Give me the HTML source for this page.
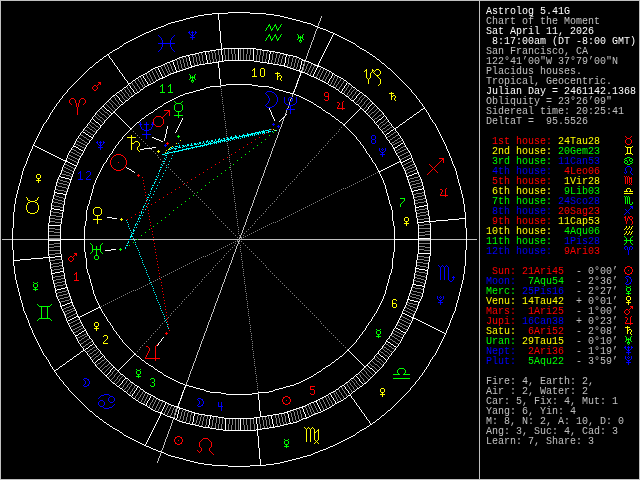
<!DOCTYPE html>
<html><head><meta charset="utf-8"><style>
html,body{margin:0;padding:0;background:#000;width:640px;height:480px;overflow:hidden}
svg{position:absolute;left:0;top:0}
</style></head><body>
<svg width="640" height="480" viewBox="0 0 640 480" shape-rendering="crispEdges">
<rect x="0" y="0" width="640" height="480" fill="#000"/>
<path fill="#c0c0c0" d="M0 0h640v1h-640zM0 479h640v1h-640zM0 0h1v480h-1zM639 0h1v480h-1zM479 0h1v480h-1z"/>
<path fill="#c0c0c0" d="M321 16h1v1h-1zM321 17h1v1h-1zM320 18h1v1h-1zM320 19h1v1h-1zM320 20h1v1h-1zM319 21h1v1h-1zM319 22h1v1h-1zM318 23h1v1h-1zM318 24h1v1h-1zM318 25h1v1h-1zM317 27h1v1h-1zM317 28h1v1h-1zM316 29h1v1h-1zM316 30h1v1h-1zM315 31h1v1h-1zM315 32h1v1h-1zM315 33h1v1h-1zM314 34h1v1h-1zM314 35h1v1h-1zM314 36h1v1h-1zM313 37h1v1h-1zM313 38h1v1h-1zM313 39h1v1h-1zM312 40h1v1h-1zM312 41h1v1h-1zM311 42h1v1h-1zM311 43h1v1h-1zM311 44h1v1h-1zM310 45h1v1h-1zM310 46h1v1h-1zM310 47h1v1h-1zM309 48h1v1h-1zM309 49h1v1h-1zM308 50h1v1h-1zM308 51h1v1h-1zM308 52h1v1h-1zM307 53h1v1h-1zM307 54h1v1h-1zM307 55h1v1h-1zM306 56h1v1h-1zM306 57h1v1h-1zM306 58h1v1h-1zM305 59h1v1h-1zM304 61h1v1h-1zM303 64h1v1h-1zM303 65h1v1h-1zM302 67h1v1h-1zM302 68h1v1h-1zM302 69h1v1h-1zM301 70h1v1h-1zM300 72h1v1h-1zM299 75h1v1h-1zM297 80h1v1h-1zM296 83h1v1h-1zM295 86h1v1h-1zM293 91h1v1h-1zM292 94h1v1h-1zM292 95h1v1h-1zM292 96h1v1h-1zM291 98h1v1h-1zM290 99h1v1h-1zM290 100h1v1h-1zM289 102h1v1h-1zM289 103h1v1h-1zM289 104h1v1h-1zM288 106h1v1h-1zM288 107h1v1h-1zM287 108h1v1h-1zM286 110h1v1h-1zM286 111h1v1h-1zM286 112h1v1h-1zM285 113h1v1h-1zM285 114h1v1h-1zM284 117h1v1h-1zM283 118h1v1h-1zM283 119h1v1h-1zM283 120h1v1h-1zM282 121h1v1h-1zM282 122h1v1h-1zM282 123h1v1h-1zM281 124h1v1h-1zM281 125h1v1h-1zM281 126h1v1h-1zM280 127h1v1h-1zM280 128h1v1h-1zM279 129h1v1h-1zM279 130h1v1h-1zM279 131h1v1h-1zM278 132h1v1h-1zM278 133h1v1h-1zM278 134h1v1h-1zM277 135h1v1h-1zM277 136h1v1h-1zM277 137h1v1h-1zM276 138h1v1h-1zM276 139h1v1h-1zM275 140h1v1h-1zM275 141h1v1h-1zM275 142h1v1h-1zM274 143h1v1h-1zM274 144h1v1h-1zM274 145h1v1h-1zM273 146h1v1h-1zM273 147h1v1h-1zM272 148h1v1h-1zM272 149h1v1h-1zM272 150h1v1h-1zM271 151h1v1h-1zM271 152h1v1h-1zM271 153h1v1h-1zM270 154h1v1h-1zM270 155h1v1h-1zM270 156h1v1h-1zM269 157h1v1h-1zM269 158h1v1h-1zM268 159h1v1h-1zM268 160h1v1h-1zM268 161h1v1h-1zM267 162h1v1h-1zM267 163h1v1h-1zM267 164h1v1h-1zM266 165h1v1h-1zM266 166h1v1h-1zM265 167h1v1h-1zM265 168h1v1h-1zM265 169h1v1h-1zM264 170h1v1h-1zM264 171h1v1h-1zM264 172h1v1h-1zM263 173h1v1h-1zM263 174h1v1h-1zM263 175h1v1h-1zM262 176h1v1h-1zM262 177h1v1h-1zM261 178h1v1h-1zM261 179h1v1h-1zM261 180h1v1h-1zM260 181h1v1h-1zM260 182h1v1h-1zM260 183h1v1h-1zM259 184h1v1h-1zM259 185h1v1h-1zM258 186h1v1h-1zM258 187h1v1h-1zM258 188h1v1h-1zM257 189h1v1h-1zM257 190h1v1h-1zM257 191h1v1h-1zM256 192h1v1h-1zM256 193h1v1h-1zM256 194h1v1h-1zM255 195h1v1h-1zM255 196h1v1h-1zM254 197h1v1h-1zM254 198h1v1h-1zM254 199h1v1h-1zM253 200h1v1h-1zM253 201h1v1h-1zM253 202h1v1h-1zM252 203h1v1h-1zM252 204h1v1h-1zM252 205h1v1h-1zM251 206h1v1h-1zM251 207h1v1h-1zM250 208h1v1h-1zM250 209h1v1h-1zM250 210h1v1h-1zM249 211h1v1h-1zM249 212h1v1h-1zM249 213h1v1h-1zM248 214h1v1h-1zM248 215h1v1h-1zM247 216h1v1h-1zM247 217h1v1h-1zM247 218h1v1h-1zM246 219h1v1h-1zM246 220h1v1h-1zM246 221h1v1h-1zM245 222h1v1h-1zM245 223h1v1h-1zM245 224h1v1h-1zM244 225h1v1h-1zM244 226h1v1h-1zM243 227h1v1h-1zM243 228h1v1h-1zM243 229h1v1h-1zM242 230h1v1h-1zM242 231h1v1h-1zM242 232h1v1h-1zM241 233h1v1h-1zM241 234h1v1h-1zM240 235h1v1h-1zM240 236h1v1h-1zM240 237h1v1h-1zM239 238h1v1h-1zM2 239h10v1h-10zM13 239h35v1h-35zM49 239h11v1h-11zM85 239h44v1h-44zM131 239h6v1h-6zM138 239h101v1h-101zM240 239h154v1h-154zM419 239h11v1h-11zM431 239h35v1h-35zM467 239h10v1h-10zM239 240h1v1h-1zM238 241h1v1h-1zM238 242h1v1h-1zM238 243h1v1h-1zM237 244h1v1h-1zM237 245h1v1h-1zM236 246h1v1h-1zM236 247h1v1h-1zM236 248h1v1h-1zM235 249h1v1h-1zM235 250h1v1h-1zM235 251h1v1h-1zM234 252h1v1h-1zM234 253h1v1h-1zM233 254h1v1h-1zM233 255h1v1h-1zM233 256h1v1h-1zM232 257h1v1h-1zM232 258h1v1h-1zM232 259h1v1h-1zM231 260h1v1h-1zM231 261h1v1h-1zM231 262h1v1h-1zM230 263h1v1h-1zM230 264h1v1h-1zM229 265h1v1h-1zM229 266h1v1h-1zM229 267h1v1h-1zM228 268h1v1h-1zM228 269h1v1h-1zM228 270h1v1h-1zM227 271h1v1h-1zM227 272h1v1h-1zM226 273h1v1h-1zM226 274h1v1h-1zM226 275h1v1h-1zM225 276h1v1h-1zM225 277h1v1h-1zM225 278h1v1h-1zM224 279h1v1h-1zM224 280h1v1h-1zM224 281h1v1h-1zM223 282h1v1h-1zM223 283h1v1h-1zM222 284h1v1h-1zM222 285h1v1h-1zM222 286h1v1h-1zM221 287h1v1h-1zM221 288h1v1h-1zM221 289h1v1h-1zM220 290h1v1h-1zM220 291h1v1h-1zM220 292h1v1h-1zM219 293h1v1h-1zM219 294h1v1h-1zM218 295h1v1h-1zM218 296h1v1h-1zM218 297h1v1h-1zM217 298h1v1h-1zM217 299h1v1h-1zM217 300h1v1h-1zM216 301h1v1h-1zM216 302h1v1h-1zM215 303h1v1h-1zM215 304h1v1h-1zM215 305h1v1h-1zM214 306h1v1h-1zM214 307h1v1h-1zM214 308h1v1h-1zM213 309h1v1h-1zM213 310h1v1h-1zM213 311h1v1h-1zM212 312h1v1h-1zM212 313h1v1h-1zM211 314h1v1h-1zM211 315h1v1h-1zM211 316h1v1h-1zM210 317h1v1h-1zM210 318h1v1h-1zM210 319h1v1h-1zM209 320h1v1h-1zM209 321h1v1h-1zM208 322h1v1h-1zM208 323h1v1h-1zM208 324h1v1h-1zM207 325h1v1h-1zM207 326h1v1h-1zM207 327h1v1h-1zM206 328h1v1h-1zM206 329h1v1h-1zM206 330h1v1h-1zM205 331h1v1h-1zM205 332h1v1h-1zM204 333h1v1h-1zM204 334h1v1h-1zM204 335h1v1h-1zM203 336h1v1h-1zM203 337h1v1h-1zM203 338h1v1h-1zM202 339h1v1h-1zM202 340h1v1h-1zM201 341h1v1h-1zM201 342h1v1h-1zM201 343h1v1h-1zM200 344h1v1h-1zM200 345h1v1h-1zM200 346h1v1h-1zM199 347h1v1h-1zM199 348h1v1h-1zM199 349h1v1h-1zM198 350h1v1h-1zM198 351h1v1h-1zM197 352h1v1h-1zM197 353h1v1h-1zM197 354h1v1h-1zM196 355h1v1h-1zM196 356h1v1h-1zM196 357h1v1h-1zM195 358h1v1h-1zM195 359h1v1h-1zM195 360h1v1h-1zM194 361h1v1h-1zM194 362h1v1h-1zM193 363h1v1h-1zM193 364h1v1h-1zM193 365h1v1h-1zM192 366h1v1h-1zM192 367h1v1h-1zM192 368h1v1h-1zM191 369h1v1h-1zM191 370h1v1h-1zM190 371h1v1h-1zM190 372h1v1h-1zM190 373h1v1h-1zM189 374h1v1h-1zM189 375h1v1h-1zM189 376h1v1h-1zM188 377h1v1h-1zM188 378h1v1h-1zM188 379h1v1h-1zM187 380h1v1h-1zM187 381h1v1h-1zM186 382h1v1h-1zM186 383h1v1h-1zM186 384h1v1h-1zM185 387h1v1h-1zM183 392h1v1h-1zM182 395h1v1h-1zM181 398h1v1h-1zM179 403h1v1h-1zM178 406h1v1h-1zM177 408h1v1h-1zM176 409h1v1h-1zM176 410h1v1h-1zM176 411h1v1h-1zM175 413h1v1h-1zM175 414h1v1h-1zM174 417h1v1h-1zM173 419h1v1h-1zM172 420h1v1h-1zM172 421h1v1h-1zM172 422h1v1h-1zM171 423h1v1h-1zM171 424h1v1h-1zM171 425h1v1h-1zM170 426h1v1h-1zM170 427h1v1h-1zM170 428h1v1h-1zM169 429h1v1h-1zM169 430h1v1h-1zM168 431h1v1h-1zM168 432h1v1h-1zM168 433h1v1h-1zM167 434h1v1h-1zM167 435h1v1h-1zM167 436h1v1h-1zM166 437h1v1h-1zM166 438h1v1h-1zM165 439h1v1h-1zM165 440h1v1h-1zM165 441h1v1h-1zM164 442h1v1h-1zM164 443h1v1h-1zM164 444h1v1h-1zM163 445h1v1h-1zM163 446h1v1h-1zM163 447h1v1h-1zM162 448h1v1h-1zM162 449h1v1h-1zM161 450h1v1h-1zM161 451h1v1h-1zM160 453h1v1h-1zM160 454h1v1h-1zM160 455h1v1h-1zM159 456h1v1h-1zM159 457h1v1h-1zM158 458h1v1h-1zM158 459h1v1h-1zM158 460h1v1h-1zM157 461h1v1h-1zM157 462h1v1h-1z"/>
<path fill="#ffffff" d="M228 12h22v1h-22zM212 13h16v1h-16zM250 13h16v1h-16zM204 14h8v1h-8zM218 14h1v1h-1zM266 14h8v1h-8zM198 15h6v1h-6zM218 15h1v1h-1zM274 15h6v1h-6zM194 16h4v1h-4zM218 16h1v1h-1zM280 16h4v1h-4zM190 17h4v1h-4zM218 17h1v1h-1zM284 17h4v1h-4zM186 18h4v1h-4zM218 18h1v1h-1zM288 18h4v1h-4zM183 19h3v1h-3zM218 19h1v1h-1zM292 19h4v1h-4zM179 20h4v1h-4zM219 20h1v1h-1zM296 20h4v1h-4zM175 21h4v1h-4zM219 21h1v1h-1zM300 21h3v1h-3zM171 22h4v1h-4zM219 22h1v1h-1zM303 22h4v1h-4zM168 23h3v1h-3zM219 23h1v1h-1zM307 23h4v1h-4zM166 24h2v1h-2zM219 24h1v1h-1zM311 24h2v1h-2zM164 25h2v1h-2zM219 25h1v1h-1zM313 25h2v1h-2zM161 26h3v1h-3zM219 26h1v1h-1zM315 26h3v1h-3zM158 27h3v1h-3zM219 27h1v1h-1zM318 27h2v1h-2zM156 28h2v1h-2zM219 28h1v1h-1zM320 28h3v1h-3zM153 29h3v1h-3zM219 29h1v1h-1zM323 29h3v1h-3zM151 30h2v1h-2zM219 30h1v1h-1zM326 30h2v1h-2zM149 31h2v1h-2zM220 31h1v1h-1zM328 31h2v1h-2zM146 32h3v1h-3zM220 32h1v1h-1zM330 32h3v1h-3zM144 33h2v1h-2zM220 33h1v1h-1zM333 33h2v1h-2zM142 34h2v1h-2zM220 34h1v1h-1zM333 34h1v1h-1zM335 34h2v1h-2zM140 35h2v1h-2zM220 35h1v1h-1zM332 35h1v1h-1zM337 35h2v1h-2zM138 36h2v1h-2zM220 36h1v1h-1zM332 36h1v1h-1zM339 36h2v1h-2zM136 37h2v1h-2zM220 37h1v1h-1zM331 37h1v1h-1zM341 37h2v1h-2zM134 38h2v1h-2zM220 38h1v1h-1zM331 38h1v1h-1zM343 38h2v1h-2zM132 39h2v1h-2zM220 39h1v1h-1zM330 39h1v1h-1zM345 39h2v1h-2zM130 40h2v1h-2zM220 40h1v1h-1zM330 40h1v1h-1zM347 40h2v1h-2zM128 41h2v1h-2zM220 41h1v1h-1zM329 41h1v1h-1zM349 41h2v1h-2zM126 42h2v1h-2zM220 42h1v1h-1zM329 42h1v1h-1zM351 42h2v1h-2zM124 43h2v1h-2zM221 43h1v1h-1zM328 43h1v1h-1zM353 43h2v1h-2zM123 44h1v1h-1zM221 44h1v1h-1zM328 44h1v1h-1zM355 44h1v1h-1zM122 45h1v1h-1zM221 45h1v1h-1zM327 45h1v1h-1zM356 45h1v1h-1zM120 46h2v1h-2zM221 46h1v1h-1zM327 46h1v1h-1zM357 46h2v1h-2zM119 47h1v1h-1zM221 47h1v1h-1zM326 47h1v1h-1zM359 47h1v1h-1zM117 48h2v1h-2zM221 48h1v1h-1zM223 48h33v1h-33zM326 48h1v1h-1zM360 48h2v1h-2zM115 49h2v1h-2zM216 49h7v1h-7zM238 49h1v1h-1zM253 49h1v1h-1zM256 49h6v1h-6zM325 49h1v1h-1zM362 49h2v1h-2zM113 50h2v1h-2zM210 50h6v1h-6zM221 50h1v1h-1zM238 50h1v1h-1zM253 50h1v1h-1zM262 50h7v1h-7zM325 50h1v1h-1zM364 50h2v1h-2zM112 51h1v1h-1zM203 51h7v1h-7zM221 51h1v1h-1zM238 51h1v1h-1zM253 51h1v1h-1zM269 51h6v1h-6zM324 51h1v1h-1zM366 51h1v1h-1zM110 52h2v1h-2zM199 52h4v1h-4zM205 52h1v1h-1zM221 52h1v1h-1zM238 52h1v1h-1zM253 52h1v1h-1zM270 52h1v1h-1zM275 52h5v1h-5zM324 52h1v1h-1zM367 52h2v1h-2zM109 53h1v1h-1zM195 53h4v1h-4zM205 53h1v1h-1zM221 53h1v1h-1zM238 53h1v1h-1zM253 53h1v1h-1zM270 53h1v1h-1zM280 53h4v1h-4zM323 53h1v1h-1zM369 53h1v1h-1zM107 54h2v1h-2zM190 54h5v1h-5zM205 54h1v1h-1zM221 54h1v1h-1zM238 54h1v1h-1zM253 54h1v1h-1zM269 54h1v1h-1zM284 54h4v1h-4zM323 54h1v1h-1zM370 54h2v1h-2zM106 55h1v1h-1zM108 55h1v1h-1zM186 55h4v1h-4zM206 55h1v1h-1zM222 55h1v1h-1zM238 55h1v1h-1zM253 55h1v1h-1zM269 55h1v1h-1zM286 55h1v1h-1zM288 55h5v1h-5zM322 55h1v1h-1zM372 55h1v1h-1zM104 56h2v1h-2zM109 56h1v1h-1zM182 56h4v1h-4zM188 56h1v1h-1zM206 56h1v1h-1zM222 56h1v1h-1zM238 56h1v1h-1zM253 56h1v1h-1zM269 56h1v1h-1zM286 56h1v1h-1zM293 56h4v1h-4zM322 56h1v1h-1zM373 56h2v1h-2zM103 57h1v1h-1zM109 57h1v1h-1zM179 57h3v1h-3zM189 57h1v1h-1zM206 57h1v1h-1zM222 57h1v1h-1zM238 57h1v1h-1zM253 57h1v1h-1zM269 57h1v1h-1zM285 57h1v1h-1zM297 57h2v1h-2zM321 57h1v1h-1zM375 57h1v1h-1zM102 58h1v1h-1zM110 58h1v1h-1zM177 58h2v1h-2zM189 58h1v1h-1zM206 58h1v1h-1zM222 58h1v1h-1zM238 58h1v1h-1zM253 58h1v1h-1zM269 58h1v1h-1zM285 58h1v1h-1zM299 58h2v1h-2zM321 58h1v1h-1zM376 58h1v1h-1zM100 59h2v1h-2zM111 59h1v1h-1zM175 59h2v1h-2zM189 59h1v1h-1zM206 59h1v1h-1zM222 59h1v1h-1zM238 59h1v1h-1zM253 59h1v1h-1zM269 59h1v1h-1zM285 59h1v1h-1zM301 59h2v1h-2zM320 59h1v1h-1zM377 59h2v1h-2zM99 60h1v1h-1zM112 60h1v1h-1zM172 60h3v1h-3zM189 60h1v1h-1zM207 60h1v1h-1zM222 60h1v1h-1zM224 60h30v1h-30zM268 60h1v1h-1zM285 60h1v1h-1zM302 60h4v1h-4zM320 60h1v1h-1zM379 60h1v1h-1zM98 61h1v1h-1zM112 61h1v1h-1zM170 61h3v1h-3zM190 61h1v1h-1zM207 61h1v1h-1zM218 61h6v1h-6zM254 61h6v1h-6zM268 61h1v1h-1zM285 61h1v1h-1zM301 61h1v1h-1zM306 61h3v1h-3zM319 61h1v1h-1zM380 61h1v1h-1zM96 62h2v1h-2zM113 62h1v1h-1zM167 62h3v1h-3zM173 62h1v1h-1zM190 62h1v1h-1zM207 62h1v1h-1zM212 62h7v1h-7zM260 62h7v1h-7zM268 62h1v1h-1zM285 62h1v1h-1zM301 62h1v1h-1zM309 62h2v1h-2zM319 62h1v1h-1zM381 62h1v1h-1zM95 63h1v1h-1zM114 63h1v1h-1zM165 63h2v1h-2zM173 63h1v1h-1zM190 63h1v1h-1zM205 63h7v1h-7zM218 63h1v1h-1zM267 63h6v1h-6zM284 63h1v1h-1zM301 63h1v1h-1zM311 63h2v1h-2zM318 63h1v1h-1zM382 63h2v1h-2zM94 64h1v1h-1zM114 64h1v1h-1zM163 64h2v1h-2zM173 64h1v1h-1zM190 64h1v1h-1zM199 64h6v1h-6zM218 64h1v1h-1zM273 64h6v1h-6zM284 64h1v1h-1zM301 64h1v1h-1zM313 64h2v1h-2zM318 64h1v1h-1zM384 64h1v1h-1zM93 65h1v1h-1zM115 65h1v1h-1zM161 65h2v1h-2zM174 65h1v1h-1zM191 65h1v1h-1zM195 65h4v1h-4zM218 65h1v1h-1zM279 65h6v1h-6zM300 65h1v1h-1zM315 65h4v1h-4zM385 65h1v1h-1zM92 66h1v1h-1zM116 66h1v1h-1zM158 66h3v1h-3zM174 66h1v1h-1zM191 66h4v1h-4zM218 66h1v1h-1zM284 66h3v1h-3zM300 66h1v1h-1zM317 66h4v1h-4zM386 66h1v1h-1zM90 67h2v1h-2zM117 67h1v1h-1zM155 67h3v1h-3zM175 67h1v1h-1zM189 67h3v1h-3zM218 67h1v1h-1zM287 67h3v1h-3zM300 67h1v1h-1zM317 67h1v1h-1zM321 67h2v1h-2zM387 67h1v1h-1zM89 68h1v1h-1zM117 68h1v1h-1zM153 68h2v1h-2zM158 68h1v1h-1zM175 68h1v1h-1zM186 68h3v1h-3zM219 68h1v1h-1zM290 68h3v1h-3zM300 68h1v1h-1zM316 68h1v1h-1zM323 68h2v1h-2zM388 68h2v1h-2zM88 69h1v1h-1zM118 69h1v1h-1zM151 69h2v1h-2zM158 69h1v1h-1zM175 69h1v1h-1zM183 69h3v1h-3zM219 69h1v1h-1zM293 69h3v1h-3zM299 69h1v1h-1zM316 69h1v1h-1zM325 69h2v1h-2zM390 69h1v1h-1zM87 70h1v1h-1zM119 70h1v1h-1zM150 70h1v1h-1zM159 70h1v1h-1zM176 70h1v1h-1zM180 70h3v1h-3zM219 70h1v1h-1zM296 70h4v1h-4zM315 70h1v1h-1zM327 70h2v1h-2zM391 70h1v1h-1zM86 71h1v1h-1zM119 71h1v1h-1zM148 71h2v1h-2zM159 71h1v1h-1zM176 71h4v1h-4zM219 71h1v1h-1zM299 71h3v1h-3zM315 71h1v1h-1zM329 71h2v1h-2zM392 71h1v1h-1zM85 72h1v1h-1zM120 72h1v1h-1zM147 72h1v1h-1zM160 72h1v1h-1zM174 72h3v1h-3zM219 72h1v1h-1zM301 72h4v1h-4zM314 72h1v1h-1zM331 72h1v1h-1zM393 72h1v1h-1zM84 73h1v1h-1zM121 73h1v1h-1zM145 73h2v1h-2zM160 73h1v1h-1zM171 73h3v1h-3zM219 73h1v1h-1zM300 73h1v1h-1zM305 73h2v1h-2zM314 73h1v1h-1zM332 73h2v1h-2zM394 73h1v1h-1zM83 74h1v1h-1zM122 74h1v1h-1zM143 74h2v1h-2zM161 74h1v1h-1zM169 74h2v1h-2zM219 74h1v1h-1zM300 74h1v1h-1zM307 74h2v1h-2zM313 74h1v1h-1zM332 74h1v1h-1zM334 74h1v1h-1zM395 74h1v1h-1zM82 75h1v1h-1zM122 75h1v1h-1zM141 75h2v1h-2zM161 75h1v1h-1zM167 75h2v1h-2zM219 75h1v1h-1zM300 75h1v1h-1zM309 75h2v1h-2zM313 75h1v1h-1zM332 75h1v1h-1zM335 75h2v1h-2zM396 75h1v1h-1zM81 76h1v1h-1zM123 76h1v1h-1zM139 76h2v1h-2zM143 76h1v1h-1zM162 76h1v1h-1zM165 76h2v1h-2zM219 76h1v1h-1zM299 76h1v1h-1zM311 76h3v1h-3zM331 76h1v1h-1zM337 76h2v1h-2zM397 76h1v1h-1zM80 77h1v1h-1zM124 77h1v1h-1zM138 77h1v1h-1zM143 77h1v1h-1zM162 77h3v1h-3zM219 77h1v1h-1zM299 77h1v1h-1zM314 77h2v1h-2zM331 77h1v1h-1zM339 77h2v1h-2zM398 77h1v1h-1zM79 78h1v1h-1zM124 78h1v1h-1zM136 78h2v1h-2zM144 78h1v1h-1zM160 78h3v1h-3zM219 78h1v1h-1zM298 78h1v1h-1zM316 78h2v1h-2zM330 78h1v1h-1zM341 78h2v1h-2zM399 78h1v1h-1zM78 79h1v1h-1zM125 79h1v1h-1zM135 79h1v1h-1zM145 79h1v1h-1zM158 79h2v1h-2zM220 79h1v1h-1zM298 79h1v1h-1zM318 79h2v1h-2zM329 79h1v1h-1zM343 79h1v1h-1zM400 79h1v1h-1zM77 80h1v1h-1zM126 80h1v1h-1zM133 80h2v1h-2zM145 80h1v1h-1zM156 80h2v1h-2zM220 80h1v1h-1zM298 80h1v1h-1zM320 80h2v1h-2zM329 80h1v1h-1zM344 80h2v1h-2zM401 80h1v1h-1zM76 81h1v1h-1zM127 81h1v1h-1zM132 81h1v1h-1zM146 81h1v1h-1zM155 81h1v1h-1zM220 81h1v1h-1zM297 81h1v1h-1zM322 81h2v1h-2zM328 81h1v1h-1zM346 81h1v1h-1zM402 81h1v1h-1zM75 82h1v1h-1zM127 82h1v1h-1zM131 82h1v1h-1zM147 82h1v1h-1zM153 82h2v1h-2zM220 82h1v1h-1zM297 82h1v1h-1zM324 82h2v1h-2zM328 82h1v1h-1zM347 82h1v1h-1zM403 82h1v1h-1zM74 83h1v1h-1zM128 83h3v1h-3zM147 83h1v1h-1zM151 83h2v1h-2zM220 83h1v1h-1zM297 83h1v1h-1zM326 83h2v1h-2zM346 83h1v1h-1zM348 83h2v1h-2zM404 83h1v1h-1zM73 84h1v1h-1zM128 84h1v1h-1zM148 84h3v1h-3zM220 84h1v1h-1zM226 84h26v1h-26zM296 84h1v1h-1zM328 84h1v1h-1zM346 84h1v1h-1zM350 84h1v1h-1zM405 84h1v1h-1zM72 85h1v1h-1zM127 85h1v1h-1zM129 85h1v1h-1zM147 85h2v1h-2zM221 85h5v1h-5zM252 85h6v1h-6zM296 85h1v1h-1zM329 85h2v1h-2zM345 85h1v1h-1zM351 85h1v1h-1zM406 85h1v1h-1zM71 86h1v1h-1zM126 86h1v1h-1zM130 86h1v1h-1zM145 86h2v1h-2zM210 86h11v1h-11zM258 86h11v1h-11zM296 86h1v1h-1zM331 86h2v1h-2zM344 86h1v1h-1zM352 86h1v1h-1zM407 86h1v1h-1zM70 87h1v1h-1zM124 87h2v1h-2zM130 87h1v1h-1zM144 87h1v1h-1zM206 87h4v1h-4zM269 87h4v1h-4zM295 87h1v1h-1zM333 87h2v1h-2zM344 87h1v1h-1zM353 87h2v1h-2zM408 87h1v1h-1zM69 88h1v1h-1zM123 88h1v1h-1zM131 88h1v1h-1zM143 88h1v1h-1zM204 88h2v1h-2zM273 88h2v1h-2zM295 88h1v1h-1zM335 88h1v1h-1zM343 88h1v1h-1zM355 88h1v1h-1zM409 88h1v1h-1zM68 89h1v1h-1zM122 89h1v1h-1zM132 89h1v1h-1zM141 89h2v1h-2zM200 89h4v1h-4zM275 89h4v1h-4zM294 89h1v1h-1zM336 89h2v1h-2zM342 89h1v1h-1zM356 89h1v1h-1zM410 89h1v1h-1zM67 90h1v1h-1zM120 90h2v1h-2zM133 90h1v1h-1zM140 90h1v1h-1zM196 90h4v1h-4zM279 90h4v1h-4zM294 90h1v1h-1zM338 90h1v1h-1zM342 90h1v1h-1zM357 90h2v1h-2zM411 90h1v1h-1zM67 91h1v1h-1zM119 91h1v1h-1zM133 91h1v1h-1zM139 91h1v1h-1zM193 91h3v1h-3zM283 91h3v1h-3zM294 91h1v1h-1zM339 91h1v1h-1zM341 91h1v1h-1zM359 91h1v1h-1zM411 91h1v1h-1zM66 92h1v1h-1zM117 92h2v1h-2zM134 92h1v1h-1zM137 92h2v1h-2zM189 92h4v1h-4zM286 92h4v1h-4zM293 92h1v1h-1zM340 92h2v1h-2zM360 92h2v1h-2zM412 92h1v1h-1zM65 93h1v1h-1zM116 93h1v1h-1zM135 93h2v1h-2zM185 93h4v1h-4zM290 93h4v1h-4zM342 93h2v1h-2zM359 93h1v1h-1zM362 93h1v1h-1zM413 93h1v1h-1zM64 94h1v1h-1zM115 94h1v1h-1zM134 94h1v1h-1zM183 94h2v1h-2zM294 94h2v1h-2zM344 94h1v1h-1zM358 94h1v1h-1zM363 94h1v1h-1zM414 94h1v1h-1zM63 95h1v1h-1zM113 95h2v1h-2zM116 95h1v1h-1zM133 95h1v1h-1zM180 95h3v1h-3zM296 95h3v1h-3zM345 95h1v1h-1zM357 95h1v1h-1zM364 95h2v1h-2zM415 95h1v1h-1zM62 96h1v1h-1zM112 96h1v1h-1zM117 96h1v1h-1zM131 96h2v1h-2zM178 96h2v1h-2zM299 96h2v1h-2zM346 96h2v1h-2zM356 96h1v1h-1zM366 96h1v1h-1zM416 96h1v1h-1zM62 97h1v1h-1zM111 97h1v1h-1zM118 97h1v1h-1zM130 97h1v1h-1zM176 97h2v1h-2zM301 97h2v1h-2zM348 97h1v1h-1zM356 97h1v1h-1zM367 97h1v1h-1zM416 97h1v1h-1zM61 98h1v1h-1zM110 98h1v1h-1zM119 98h1v1h-1zM129 98h1v1h-1zM174 98h2v1h-2zM303 98h2v1h-2zM349 98h1v1h-1zM355 98h1v1h-1zM368 98h1v1h-1zM417 98h1v1h-1zM60 99h1v1h-1zM109 99h1v1h-1zM119 99h1v1h-1zM128 99h1v1h-1zM172 99h2v1h-2zM305 99h2v1h-2zM350 99h1v1h-1zM354 99h1v1h-1zM369 99h1v1h-1zM418 99h1v1h-1zM59 100h1v1h-1zM108 100h1v1h-1zM120 100h1v1h-1zM126 100h2v1h-2zM170 100h2v1h-2zM307 100h2v1h-2zM351 100h3v1h-3zM370 100h1v1h-1zM419 100h1v1h-1zM59 101h1v1h-1zM107 101h1v1h-1zM121 101h1v1h-1zM125 101h1v1h-1zM168 101h2v1h-2zM309 101h2v1h-2zM353 101h1v1h-1zM371 101h1v1h-1zM419 101h1v1h-1zM58 102h1v1h-1zM106 102h1v1h-1zM122 102h1v1h-1zM124 102h1v1h-1zM166 102h2v1h-2zM311 102h2v1h-2zM354 102h1v1h-1zM372 102h1v1h-1zM420 102h1v1h-1zM57 103h1v1h-1zM105 103h1v1h-1zM123 103h1v1h-1zM164 103h2v1h-2zM313 103h1v1h-1zM355 103h1v1h-1zM372 103h2v1h-2zM421 103h1v1h-1zM56 104h1v1h-1zM104 104h1v1h-1zM121 104h2v1h-2zM163 104h1v1h-1zM314 104h2v1h-2zM356 104h2v1h-2zM371 104h1v1h-1zM374 104h1v1h-1zM422 104h1v1h-1zM56 105h1v1h-1zM103 105h1v1h-1zM120 105h1v1h-1zM162 105h1v1h-1zM316 105h1v1h-1zM358 105h1v1h-1zM370 105h1v1h-1zM375 105h1v1h-1zM422 105h1v1h-1zM55 106h1v1h-1zM102 106h2v1h-2zM119 106h1v1h-1zM160 106h2v1h-2zM317 106h2v1h-2zM359 106h1v1h-1zM369 106h1v1h-1zM376 106h1v1h-1zM423 106h1v1h-1zM54 107h1v1h-1zM101 107h1v1h-1zM104 107h1v1h-1zM118 107h1v1h-1zM158 107h2v1h-2zM319 107h2v1h-2zM360 107h1v1h-1zM368 107h1v1h-1zM377 107h1v1h-1zM424 107h1v1h-1zM54 108h1v1h-1zM100 108h1v1h-1zM105 108h1v1h-1zM117 108h1v1h-1zM157 108h1v1h-1zM269 108h1v1h-1zM321 108h1v1h-1zM360 108h2v1h-2zM368 108h1v1h-1zM378 108h1v1h-1zM423 108h2v1h-2zM53 109h1v1h-1zM99 109h1v1h-1zM106 109h1v1h-1zM116 109h1v1h-1zM155 109h2v1h-2zM269 109h1v1h-1zM322 109h1v1h-1zM359 109h1v1h-1zM362 109h1v1h-1zM367 109h1v1h-1zM379 109h1v1h-1zM421 109h2v1h-2zM425 109h1v1h-1zM52 110h1v1h-1zM98 110h1v1h-1zM107 110h2v1h-2zM115 110h1v1h-1zM154 110h1v1h-1zM270 110h1v1h-1zM323 110h2v1h-2zM358 110h1v1h-1zM363 110h1v1h-1zM366 110h1v1h-1zM380 110h1v1h-1zM420 110h1v1h-1zM426 110h1v1h-1zM52 111h1v1h-1zM97 111h1v1h-1zM109 111h1v1h-1zM114 111h1v1h-1zM153 111h1v1h-1zM270 111h1v1h-1zM325 111h1v1h-1zM357 111h1v1h-1zM364 111h2v1h-2zM381 111h1v1h-1zM419 111h1v1h-1zM426 111h1v1h-1zM51 112h1v1h-1zM96 112h1v1h-1zM110 112h1v1h-1zM113 112h2v1h-2zM151 112h2v1h-2zM271 112h1v1h-1zM326 112h2v1h-2zM356 112h1v1h-1zM365 112h1v1h-1zM382 112h1v1h-1zM417 112h2v1h-2zM427 112h1v1h-1zM50 113h1v1h-1zM95 113h1v1h-1zM111 113h2v1h-2zM115 113h1v1h-1zM149 113h2v1h-2zM271 113h1v1h-1zM328 113h2v1h-2zM355 113h1v1h-1zM366 113h1v1h-1zM383 113h1v1h-1zM416 113h1v1h-1zM428 113h1v1h-1zM50 114h1v1h-1zM95 114h1v1h-1zM111 114h1v1h-1zM116 114h1v1h-1zM148 114h1v1h-1zM271 114h1v1h-1zM286 114h1v1h-1zM330 114h1v1h-1zM354 114h1v1h-1zM367 114h1v1h-1zM383 114h1v1h-1zM414 114h2v1h-2zM428 114h1v1h-1zM49 115h1v1h-1zM94 115h1v1h-1zM110 115h1v1h-1zM117 115h1v1h-1zM146 115h2v1h-2zM272 115h1v1h-1zM285 115h1v1h-1zM331 115h1v1h-1zM353 115h1v1h-1zM368 115h1v1h-1zM384 115h1v1h-1zM413 115h1v1h-1zM429 115h1v1h-1zM49 116h1v1h-1zM93 116h1v1h-1zM109 116h1v1h-1zM118 116h1v1h-1zM145 116h1v1h-1zM272 116h1v1h-1zM284 116h1v1h-1zM332 116h2v1h-2zM352 116h1v1h-1zM369 116h1v1h-1zM383 116h1v1h-1zM385 116h1v1h-1zM412 116h1v1h-1zM429 116h1v1h-1zM48 117h1v1h-1zM92 117h1v1h-1zM108 117h1v1h-1zM119 117h1v1h-1zM144 117h1v1h-1zM273 117h1v1h-1zM283 117h1v1h-1zM334 117h1v1h-1zM351 117h1v1h-1zM370 117h1v1h-1zM382 117h1v1h-1zM386 117h1v1h-1zM410 117h2v1h-2zM430 117h1v1h-1zM48 118h1v1h-1zM92 118h1v1h-1zM107 118h1v1h-1zM120 118h1v1h-1zM142 118h2v1h-2zM182 118h1v1h-1zM273 118h1v1h-1zM282 118h1v1h-1zM335 118h1v1h-1zM350 118h1v1h-1zM371 118h1v1h-1zM381 118h1v1h-1zM386 118h1v1h-1zM409 118h1v1h-1zM430 118h1v1h-1zM47 119h1v1h-1zM91 119h1v1h-1zM93 119h1v1h-1zM106 119h1v1h-1zM121 119h1v1h-1zM141 119h1v1h-1zM182 119h1v1h-1zM274 119h1v1h-1zM281 119h1v1h-1zM336 119h2v1h-2zM349 119h1v1h-1zM372 119h1v1h-1zM379 119h2v1h-2zM387 119h1v1h-1zM407 119h2v1h-2zM431 119h1v1h-1zM46 120h1v1h-1zM90 120h1v1h-1zM94 120h1v1h-1zM105 120h1v1h-1zM122 120h1v1h-1zM140 120h1v1h-1zM181 120h1v1h-1zM274 120h1v1h-1zM280 120h1v1h-1zM338 120h1v1h-1zM348 120h1v1h-1zM373 120h1v1h-1zM378 120h1v1h-1zM388 120h1v1h-1zM406 120h1v1h-1zM432 120h1v1h-1zM46 121h1v1h-1zM90 121h1v1h-1zM95 121h1v1h-1zM104 121h1v1h-1zM123 121h1v1h-1zM139 121h1v1h-1zM181 121h1v1h-1zM279 121h1v1h-1zM339 121h1v1h-1zM347 121h1v1h-1zM374 121h1v1h-1zM377 121h1v1h-1zM388 121h1v1h-1zM405 121h1v1h-1zM432 121h1v1h-1zM45 122h1v1h-1zM89 122h1v1h-1zM96 122h2v1h-2zM104 122h1v1h-1zM124 122h1v1h-1zM137 122h2v1h-2zM180 122h1v1h-1zM340 122h2v1h-2zM346 122h1v1h-1zM374 122h1v1h-1zM376 122h1v1h-1zM389 122h1v1h-1zM403 122h2v1h-2zM433 122h1v1h-1zM44 123h1v1h-1zM88 123h1v1h-1zM98 123h1v1h-1zM103 123h1v1h-1zM125 123h1v1h-1zM136 123h1v1h-1zM180 123h1v1h-1zM342 123h1v1h-1zM345 123h1v1h-1zM375 123h1v1h-1zM390 123h1v1h-1zM402 123h1v1h-1zM434 123h1v1h-1zM43 124h1v1h-1zM87 124h1v1h-1zM99 124h1v1h-1zM102 124h1v1h-1zM126 124h1v1h-1zM135 124h1v1h-1zM179 124h1v1h-1zM343 124h2v1h-2zM376 124h1v1h-1zM391 124h1v1h-1zM400 124h2v1h-2zM435 124h1v1h-1zM43 125h1v1h-1zM87 125h1v1h-1zM100 125h2v1h-2zM127 125h1v1h-1zM134 125h1v1h-1zM179 125h1v1h-1zM344 125h1v1h-1zM377 125h1v1h-1zM391 125h1v1h-1zM399 125h1v1h-1zM435 125h1v1h-1zM42 126h1v1h-1zM86 126h1v1h-1zM100 126h1v1h-1zM128 126h1v1h-1zM133 126h1v1h-1zM167 126h1v1h-1zM178 126h1v1h-1zM345 126h1v1h-1zM378 126h1v1h-1zM392 126h1v1h-1zM398 126h1v1h-1zM436 126h1v1h-1zM42 127h1v1h-1zM85 127h1v1h-1zM100 127h1v1h-1zM129 127h1v1h-1zM132 127h1v1h-1zM167 127h1v1h-1zM178 127h1v1h-1zM346 127h1v1h-1zM378 127h1v1h-1zM393 127h1v1h-1zM396 127h2v1h-2zM436 127h1v1h-1zM41 128h1v1h-1zM84 128h1v1h-1zM99 128h1v1h-1zM130 128h2v1h-2zM167 128h1v1h-1zM177 128h1v1h-1zM347 128h1v1h-1zM379 128h1v1h-1zM394 128h2v1h-2zM437 128h1v1h-1zM41 129h1v1h-1zM83 129h1v1h-1zM98 129h1v1h-1zM130 129h1v1h-1zM166 129h1v1h-1zM177 129h1v1h-1zM348 129h1v1h-1zM380 129h1v1h-1zM393 129h1v1h-1zM395 129h1v1h-1zM437 129h1v1h-1zM40 130h1v1h-1zM83 130h1v1h-1zM97 130h1v1h-1zM129 130h1v1h-1zM166 130h1v1h-1zM176 130h1v1h-1zM349 130h1v1h-1zM381 130h1v1h-1zM391 130h2v1h-2zM395 130h1v1h-1zM438 130h1v1h-1zM40 131h1v1h-1zM82 131h1v1h-1zM96 131h1v1h-1zM128 131h1v1h-1zM166 131h1v1h-1zM176 131h1v1h-1zM350 131h1v1h-1zM382 131h1v1h-1zM390 131h1v1h-1zM396 131h1v1h-1zM438 131h1v1h-1zM39 132h1v1h-1zM81 132h1v1h-1zM83 132h2v1h-2zM96 132h1v1h-1zM127 132h1v1h-1zM166 132h1v1h-1zM175 132h1v1h-1zM351 132h1v1h-1zM382 132h1v1h-1zM389 132h1v1h-1zM397 132h1v1h-1zM439 132h1v1h-1zM39 133h1v1h-1zM80 133h1v1h-1zM85 133h1v1h-1zM95 133h1v1h-1zM126 133h1v1h-1zM166 133h1v1h-1zM352 133h1v1h-1zM383 133h1v1h-1zM387 133h2v1h-2zM398 133h1v1h-1zM439 133h1v1h-1zM38 134h1v1h-1zM80 134h1v1h-1zM86 134h2v1h-2zM94 134h1v1h-1zM125 134h1v1h-1zM165 134h1v1h-1zM353 134h1v1h-1zM384 134h1v1h-1zM386 134h1v1h-1zM398 134h1v1h-1zM440 134h1v1h-1zM38 135h1v1h-1zM79 135h1v1h-1zM88 135h1v1h-1zM93 135h1v1h-1zM124 135h1v1h-1zM165 135h1v1h-1zM354 135h1v1h-1zM385 135h1v1h-1zM399 135h1v1h-1zM440 135h1v1h-1zM37 136h1v1h-1zM78 136h1v1h-1zM89 136h2v1h-2zM93 136h1v1h-1zM123 136h1v1h-1zM165 136h1v1h-1zM355 136h1v1h-1zM385 136h1v1h-1zM400 136h1v1h-1zM441 136h1v1h-1zM37 137h1v1h-1zM78 137h1v1h-1zM91 137h2v1h-2zM122 137h1v1h-1zM152 137h2v1h-2zM165 137h1v1h-1zM356 137h1v1h-1zM386 137h1v1h-1zM400 137h1v1h-1zM441 137h1v1h-1zM36 138h1v1h-1zM77 138h1v1h-1zM92 138h1v1h-1zM122 138h1v1h-1zM154 138h2v1h-2zM164 138h1v1h-1zM356 138h1v1h-1zM386 138h1v1h-1zM401 138h1v1h-1zM442 138h1v1h-1zM36 139h1v1h-1zM76 139h1v1h-1zM91 139h1v1h-1zM121 139h1v1h-1zM156 139h3v1h-3zM164 139h1v1h-1zM357 139h1v1h-1zM387 139h1v1h-1zM402 139h1v1h-1zM442 139h1v1h-1zM35 140h1v1h-1zM76 140h1v1h-1zM90 140h1v1h-1zM120 140h1v1h-1zM159 140h2v1h-2zM164 140h1v1h-1zM358 140h1v1h-1zM388 140h1v1h-1zM402 140h1v1h-1zM443 140h1v1h-1zM35 141h1v1h-1zM75 141h1v1h-1zM89 141h1v1h-1zM119 141h1v1h-1zM161 141h2v1h-2zM359 141h1v1h-1zM389 141h1v1h-1zM403 141h1v1h-1zM443 141h1v1h-1zM34 142h1v1h-1zM75 142h1v1h-1zM89 142h1v1h-1zM118 142h1v1h-1zM360 142h1v1h-1zM389 142h1v1h-1zM403 142h1v1h-1zM444 142h1v1h-1zM34 143h1v1h-1zM74 143h1v1h-1zM88 143h1v1h-1zM118 143h1v1h-1zM360 143h1v1h-1zM390 143h1v1h-1zM401 143h2v1h-2zM404 143h1v1h-1zM444 143h1v1h-1zM33 144h1v1h-1zM74 144h1v1h-1zM87 144h1v1h-1zM117 144h1v1h-1zM361 144h1v1h-1zM391 144h1v1h-1zM400 144h1v1h-1zM404 144h1v1h-1zM445 144h1v1h-1zM33 145h2v1h-2zM73 145h1v1h-1zM86 145h1v1h-1zM116 145h1v1h-1zM362 145h1v1h-1zM392 145h1v1h-1zM398 145h2v1h-2zM405 145h1v1h-1zM445 145h1v1h-1zM32 146h1v1h-1zM35 146h2v1h-2zM73 146h3v1h-3zM86 146h1v1h-1zM115 146h1v1h-1zM363 146h1v1h-1zM392 146h1v1h-1zM397 146h1v1h-1zM405 146h1v1h-1zM446 146h1v1h-1zM32 147h1v1h-1zM37 147h2v1h-2zM72 147h1v1h-1zM76 147h2v1h-2zM85 147h1v1h-1zM115 147h1v1h-1zM152 147h4v1h-4zM363 147h1v1h-1zM393 147h1v1h-1zM395 147h2v1h-2zM406 147h1v1h-1zM446 147h1v1h-1zM32 148h1v1h-1zM39 148h2v1h-2zM71 148h1v1h-1zM78 148h1v1h-1zM85 148h1v1h-1zM114 148h1v1h-1zM144 148h8v1h-8zM364 148h1v1h-1zM393 148h2v1h-2zM407 148h1v1h-1zM446 148h1v1h-1zM31 149h1v1h-1zM41 149h2v1h-2zM71 149h1v1h-1zM79 149h2v1h-2zM84 149h1v1h-1zM113 149h1v1h-1zM140 149h4v1h-4zM365 149h1v1h-1zM394 149h1v1h-1zM407 149h1v1h-1zM447 149h1v1h-1zM31 150h1v1h-1zM43 150h2v1h-2zM70 150h1v1h-1zM81 150h2v1h-2zM84 150h1v1h-1zM113 150h1v1h-1zM365 150h1v1h-1zM394 150h1v1h-1zM408 150h1v1h-1zM447 150h1v1h-1zM30 151h1v1h-1zM45 151h2v1h-2zM69 151h1v1h-1zM83 151h1v1h-1zM112 151h1v1h-1zM366 151h1v1h-1zM395 151h1v1h-1zM409 151h1v1h-1zM448 151h1v1h-1zM30 152h1v1h-1zM47 152h2v1h-2zM69 152h1v1h-1zM83 152h1v1h-1zM112 152h1v1h-1zM366 152h1v1h-1zM395 152h1v1h-1zM409 152h1v1h-1zM448 152h1v1h-1zM29 153h1v1h-1zM49 153h2v1h-2zM68 153h1v1h-1zM82 153h1v1h-1zM111 153h1v1h-1zM367 153h1v1h-1zM396 153h1v1h-1zM410 153h1v1h-1zM449 153h1v1h-1zM29 154h1v1h-1zM51 154h2v1h-2zM68 154h1v1h-1zM82 154h1v1h-1zM110 154h1v1h-1zM368 154h1v1h-1zM396 154h1v1h-1zM410 154h1v1h-1zM449 154h1v1h-1zM29 155h1v1h-1zM53 155h2v1h-2zM67 155h1v1h-1zM81 155h1v1h-1zM109 155h1v1h-1zM369 155h1v1h-1zM397 155h1v1h-1zM411 155h1v1h-1zM449 155h1v1h-1zM28 156h1v1h-1zM55 156h2v1h-2zM67 156h1v1h-1zM80 156h1v1h-1zM109 156h1v1h-1zM369 156h1v1h-1zM398 156h1v1h-1zM411 156h1v1h-1zM450 156h1v1h-1zM28 157h1v1h-1zM57 157h2v1h-2zM67 157h1v1h-1zM80 157h1v1h-1zM108 157h1v1h-1zM370 157h1v1h-1zM398 157h1v1h-1zM411 157h1v1h-1zM450 157h1v1h-1zM27 158h1v1h-1zM59 158h2v1h-2zM66 158h1v1h-1zM79 158h1v1h-1zM107 158h1v1h-1zM371 158h1v1h-1zM399 158h1v1h-1zM409 158h2v1h-2zM412 158h1v1h-1zM451 158h1v1h-1zM27 159h1v1h-1zM61 159h2v1h-2zM66 159h1v1h-1zM79 159h1v1h-1zM107 159h1v1h-1zM371 159h1v1h-1zM399 159h1v1h-1zM407 159h2v1h-2zM412 159h1v1h-1zM451 159h1v1h-1zM27 160h1v1h-1zM63 160h4v1h-4zM78 160h1v1h-1zM106 160h1v1h-1zM372 160h1v1h-1zM400 160h1v1h-1zM405 160h2v1h-2zM412 160h1v1h-1zM451 160h1v1h-1zM26 161h1v1h-1zM65 161h3v1h-3zM78 161h1v1h-1zM106 161h1v1h-1zM372 161h1v1h-1zM399 161h2v1h-2zM403 161h2v1h-2zM413 161h1v1h-1zM452 161h1v1h-1zM26 162h1v1h-1zM65 162h1v1h-1zM68 162h2v1h-2zM78 162h1v1h-1zM105 162h1v1h-1zM373 162h1v1h-1zM397 162h2v1h-2zM400 162h3v1h-3zM413 162h1v1h-1zM452 162h1v1h-1zM26 163h1v1h-1zM64 163h1v1h-1zM70 163h2v1h-2zM77 163h1v1h-1zM104 163h1v1h-1zM374 163h1v1h-1zM395 163h2v1h-2zM401 163h1v1h-1zM414 163h1v1h-1zM452 163h1v1h-1zM25 164h1v1h-1zM64 164h1v1h-1zM72 164h2v1h-2zM77 164h1v1h-1zM103 164h1v1h-1zM375 164h1v1h-1zM393 164h2v1h-2zM401 164h1v1h-1zM414 164h1v1h-1zM453 164h1v1h-1zM25 165h1v1h-1zM63 165h1v1h-1zM74 165h3v1h-3zM103 165h1v1h-1zM375 165h1v1h-1zM391 165h2v1h-2zM402 165h1v1h-1zM415 165h1v1h-1zM453 165h1v1h-1zM24 166h1v1h-1zM63 166h1v1h-1zM76 166h1v1h-1zM102 166h1v1h-1zM376 166h1v1h-1zM389 166h2v1h-2zM402 166h1v1h-1zM415 166h1v1h-1zM454 166h1v1h-1zM24 167h1v1h-1zM62 167h1v1h-1zM75 167h1v1h-1zM102 167h1v1h-1zM126 167h1v1h-1zM376 167h1v1h-1zM387 167h2v1h-2zM403 167h1v1h-1zM416 167h1v1h-1zM454 167h1v1h-1zM23 168h1v1h-1zM62 168h1v1h-1zM75 168h1v1h-1zM101 168h1v1h-1zM127 168h2v1h-2zM377 168h1v1h-1zM385 168h2v1h-2zM403 168h1v1h-1zM416 168h1v1h-1zM455 168h1v1h-1zM23 169h1v1h-1zM62 169h1v1h-1zM74 169h1v1h-1zM101 169h1v1h-1zM129 169h2v1h-2zM377 169h1v1h-1zM383 169h2v1h-2zM404 169h1v1h-1zM416 169h1v1h-1zM455 169h1v1h-1zM23 170h1v1h-1zM61 170h1v1h-1zM74 170h1v1h-1zM100 170h1v1h-1zM131 170h1v1h-1zM378 170h1v1h-1zM381 170h2v1h-2zM404 170h1v1h-1zM417 170h1v1h-1zM455 170h1v1h-1zM22 171h1v1h-1zM61 171h1v1h-1zM73 171h1v1h-1zM100 171h1v1h-1zM132 171h2v1h-2zM378 171h3v1h-3zM405 171h1v1h-1zM417 171h1v1h-1zM456 171h1v1h-1zM22 172h1v1h-1zM61 172h1v1h-1zM73 172h1v1h-1zM99 172h1v1h-1zM134 172h1v1h-1zM379 172h1v1h-1zM405 172h1v1h-1zM417 172h2v1h-2zM456 172h1v1h-1zM22 173h1v1h-1zM60 173h1v1h-1zM73 173h1v1h-1zM99 173h1v1h-1zM379 173h1v1h-1zM405 173h1v1h-1zM414 173h3v1h-3zM418 173h1v1h-1zM456 173h1v1h-1zM22 174h1v1h-1zM60 174h1v1h-1zM72 174h1v1h-1zM98 174h1v1h-1zM380 174h1v1h-1zM406 174h1v1h-1zM412 174h2v1h-2zM418 174h1v1h-1zM456 174h1v1h-1zM21 175h1v1h-1zM59 175h1v1h-1zM72 175h1v1h-1zM98 175h1v1h-1zM380 175h1v1h-1zM406 175h1v1h-1zM409 175h3v1h-3zM419 175h1v1h-1zM457 175h1v1h-1zM21 176h1v1h-1zM59 176h2v1h-2zM72 176h1v1h-1zM97 176h1v1h-1zM381 176h1v1h-1zM406 176h3v1h-3zM419 176h1v1h-1zM457 176h1v1h-1zM21 177h1v1h-1zM58 177h1v1h-1zM61 177h4v1h-4zM71 177h1v1h-1zM97 177h1v1h-1zM381 177h1v1h-1zM407 177h1v1h-1zM420 177h1v1h-1zM457 177h1v1h-1zM21 178h1v1h-1zM58 178h1v1h-1zM65 178h4v1h-4zM71 178h1v1h-1zM96 178h1v1h-1zM382 178h1v1h-1zM407 178h1v1h-1zM420 178h1v1h-1zM457 178h1v1h-1zM20 179h1v1h-1zM57 179h1v1h-1zM69 179h3v1h-3zM96 179h1v1h-1zM382 179h1v1h-1zM407 179h1v1h-1zM421 179h1v1h-1zM458 179h1v1h-1zM20 180h1v1h-1zM57 180h1v1h-1zM70 180h1v1h-1zM95 180h1v1h-1zM383 180h1v1h-1zM408 180h1v1h-1zM421 180h1v1h-1zM458 180h1v1h-1zM20 181h1v1h-1zM57 181h1v1h-1zM70 181h1v1h-1zM95 181h1v1h-1zM383 181h1v1h-1zM408 181h1v1h-1zM421 181h1v1h-1zM458 181h1v1h-1zM20 182h1v1h-1zM56 182h1v1h-1zM70 182h1v1h-1zM95 182h1v1h-1zM383 182h1v1h-1zM408 182h1v1h-1zM422 182h1v1h-1zM458 182h1v1h-1zM19 183h1v1h-1zM56 183h1v1h-1zM69 183h1v1h-1zM94 183h1v1h-1zM384 183h1v1h-1zM409 183h1v1h-1zM422 183h1v1h-1zM459 183h1v1h-1zM19 184h1v1h-1zM56 184h1v1h-1zM69 184h1v1h-1zM94 184h1v1h-1zM384 184h1v1h-1zM409 184h1v1h-1zM422 184h1v1h-1zM459 184h1v1h-1zM19 185h1v1h-1zM56 185h1v1h-1zM69 185h1v1h-1zM93 185h1v1h-1zM385 185h1v1h-1zM409 185h1v1h-1zM422 185h1v1h-1zM459 185h1v1h-1zM18 186h1v1h-1zM55 186h1v1h-1zM68 186h1v1h-1zM93 186h1v1h-1zM385 186h1v1h-1zM410 186h1v1h-1zM423 186h1v1h-1zM460 186h1v1h-1zM18 187h1v1h-1zM55 187h1v1h-1zM68 187h1v1h-1zM93 187h1v1h-1zM385 187h1v1h-1zM410 187h1v1h-1zM423 187h1v1h-1zM460 187h1v1h-1zM18 188h1v1h-1zM55 188h1v1h-1zM68 188h1v1h-1zM93 188h1v1h-1zM385 188h1v1h-1zM410 188h1v1h-1zM422 188h2v1h-2zM460 188h1v1h-1zM18 189h1v1h-1zM55 189h1v1h-1zM67 189h1v1h-1zM92 189h1v1h-1zM386 189h1v1h-1zM411 189h1v1h-1zM418 189h4v1h-4zM423 189h1v1h-1zM460 189h1v1h-1zM17 190h1v1h-1zM54 190h1v1h-1zM67 190h1v1h-1zM92 190h1v1h-1zM386 190h1v1h-1zM411 190h1v1h-1zM414 190h4v1h-4zM424 190h1v1h-1zM461 190h1v1h-1zM17 191h1v1h-1zM54 191h1v1h-1zM67 191h1v1h-1zM92 191h1v1h-1zM386 191h1v1h-1zM411 191h3v1h-3zM424 191h1v1h-1zM461 191h1v1h-1zM17 192h1v1h-1zM54 192h3v1h-3zM66 192h1v1h-1zM92 192h1v1h-1zM386 192h1v1h-1zM412 192h1v1h-1zM424 192h1v1h-1zM461 192h1v1h-1zM17 193h1v1h-1zM54 193h1v1h-1zM57 193h6v1h-6zM66 193h1v1h-1zM91 193h1v1h-1zM387 193h1v1h-1zM412 193h1v1h-1zM424 193h1v1h-1zM461 193h1v1h-1zM16 194h1v1h-1zM54 194h1v1h-1zM63 194h4v1h-4zM91 194h1v1h-1zM387 194h1v1h-1zM412 194h1v1h-1zM424 194h1v1h-1zM462 194h1v1h-1zM16 195h1v1h-1zM53 195h1v1h-1zM65 195h1v1h-1zM91 195h1v1h-1zM387 195h1v1h-1zM413 195h1v1h-1zM425 195h1v1h-1zM462 195h1v1h-1zM16 196h1v1h-1zM53 196h1v1h-1zM65 196h1v1h-1zM90 196h1v1h-1zM388 196h1v1h-1zM413 196h1v1h-1zM425 196h1v1h-1zM462 196h1v1h-1zM16 197h1v1h-1zM53 197h1v1h-1zM65 197h1v1h-1zM90 197h1v1h-1zM388 197h1v1h-1zM413 197h1v1h-1zM425 197h1v1h-1zM462 197h1v1h-1zM15 198h1v1h-1zM53 198h1v1h-1zM65 198h1v1h-1zM90 198h1v1h-1zM388 198h1v1h-1zM413 198h1v1h-1zM425 198h1v1h-1zM463 198h1v1h-1zM15 199h1v1h-1zM52 199h1v1h-1zM64 199h1v1h-1zM90 199h1v1h-1zM388 199h1v1h-1zM414 199h1v1h-1zM426 199h1v1h-1zM463 199h1v1h-1zM15 200h1v1h-1zM52 200h1v1h-1zM64 200h1v1h-1zM89 200h1v1h-1zM389 200h1v1h-1zM414 200h1v1h-1zM426 200h1v1h-1zM463 200h1v1h-1zM15 201h1v1h-1zM52 201h1v1h-1zM64 201h1v1h-1zM89 201h1v1h-1zM389 201h1v1h-1zM414 201h1v1h-1zM426 201h1v1h-1zM463 201h1v1h-1zM15 202h1v1h-1zM52 202h1v1h-1zM64 202h1v1h-1zM89 202h1v1h-1zM389 202h1v1h-1zM414 202h1v1h-1zM426 202h1v1h-1zM463 202h1v1h-1zM15 203h1v1h-1zM51 203h1v1h-1zM64 203h1v1h-1zM89 203h1v1h-1zM389 203h1v1h-1zM414 203h1v1h-1zM427 203h1v1h-1zM463 203h1v1h-1zM14 204h1v1h-1zM51 204h1v1h-1zM64 204h1v1h-1zM88 204h1v1h-1zM390 204h1v1h-1zM414 204h1v1h-1zM427 204h1v1h-1zM464 204h1v1h-1zM14 205h1v1h-1zM51 205h1v1h-1zM63 205h1v1h-1zM88 205h1v1h-1zM390 205h1v1h-1zM415 205h1v1h-1zM424 205h4v1h-4zM464 205h1v1h-1zM14 206h1v1h-1zM51 206h1v1h-1zM63 206h1v1h-1zM87 206h1v1h-1zM391 206h1v1h-1zM415 206h1v1h-1zM419 206h5v1h-5zM427 206h1v1h-1zM464 206h1v1h-1zM14 207h1v1h-1zM51 207h1v1h-1zM63 207h1v1h-1zM87 207h1v1h-1zM391 207h1v1h-1zM415 207h4v1h-4zM427 207h1v1h-1zM464 207h1v1h-1zM14 208h1v1h-1zM51 208h3v1h-3zM63 208h1v1h-1zM87 208h1v1h-1zM391 208h1v1h-1zM415 208h1v1h-1zM427 208h1v1h-1zM464 208h1v1h-1zM14 209h1v1h-1zM51 209h1v1h-1zM54 209h6v1h-6zM63 209h1v1h-1zM87 209h1v1h-1zM391 209h1v1h-1zM415 209h1v1h-1zM427 209h1v1h-1zM464 209h1v1h-1zM14 210h1v1h-1zM50 210h1v1h-1zM60 210h4v1h-4zM86 210h1v1h-1zM392 210h1v1h-1zM415 210h1v1h-1zM428 210h1v1h-1zM464 210h1v1h-1zM14 211h1v1h-1zM50 211h1v1h-1zM63 211h1v1h-1zM86 211h1v1h-1zM392 211h1v1h-1zM415 211h1v1h-1zM428 211h1v1h-1zM464 211h1v1h-1zM13 212h1v1h-1zM50 212h1v1h-1zM62 212h1v1h-1zM86 212h1v1h-1zM392 212h1v1h-1zM416 212h1v1h-1zM428 212h1v1h-1zM465 212h1v1h-1zM13 213h1v1h-1zM50 213h1v1h-1zM62 213h1v1h-1zM86 213h1v1h-1zM392 213h1v1h-1zM416 213h1v1h-1zM428 213h1v1h-1zM465 213h1v1h-1zM13 214h1v1h-1zM50 214h1v1h-1zM62 214h1v1h-1zM86 214h1v1h-1zM392 214h1v1h-1zM416 214h1v1h-1zM428 214h1v1h-1zM465 214h1v1h-1zM13 215h1v1h-1zM50 215h1v1h-1zM62 215h1v1h-1zM86 215h1v1h-1zM392 215h1v1h-1zM416 215h1v1h-1zM428 215h1v1h-1zM465 215h1v1h-1zM13 216h1v1h-1zM49 216h1v1h-1zM62 216h1v1h-1zM86 216h1v1h-1zM392 216h1v1h-1zM416 216h1v1h-1zM429 216h1v1h-1zM465 216h1v1h-1zM13 217h1v1h-1zM49 217h1v1h-1zM62 217h1v1h-1zM86 217h1v1h-1zM107 217h5v1h-5zM392 217h1v1h-1zM416 217h1v1h-1zM429 217h1v1h-1zM465 217h1v1h-1zM13 218h1v1h-1zM49 218h1v1h-1zM61 218h1v1h-1zM86 218h1v1h-1zM112 218h5v1h-5zM392 218h1v1h-1zM417 218h1v1h-1zM429 218h1v1h-1zM459 218h7v1h-7zM13 219h1v1h-1zM49 219h1v1h-1zM61 219h1v1h-1zM86 219h1v1h-1zM392 219h1v1h-1zM417 219h1v1h-1zM429 219h1v1h-1zM448 219h11v1h-11zM465 219h1v1h-1zM13 220h1v1h-1zM49 220h1v1h-1zM61 220h1v1h-1zM86 220h1v1h-1zM392 220h1v1h-1zM417 220h1v1h-1zM429 220h1v1h-1zM436 220h12v1h-12zM465 220h1v1h-1zM13 221h1v1h-1zM49 221h1v1h-1zM61 221h1v1h-1zM85 221h1v1h-1zM393 221h1v1h-1zM417 221h1v1h-1zM424 221h12v1h-12zM465 221h1v1h-1zM13 222h1v1h-1zM49 222h1v1h-1zM61 222h1v1h-1zM85 222h1v1h-1zM393 222h1v1h-1zM417 222h7v1h-7zM429 222h1v1h-1zM465 222h1v1h-1zM13 223h1v1h-1zM48 223h1v1h-1zM61 223h1v1h-1zM85 223h1v1h-1zM393 223h1v1h-1zM417 223h1v1h-1zM430 223h1v1h-1zM465 223h1v1h-1zM13 224h1v1h-1zM48 224h1v1h-1zM60 224h1v1h-1zM85 224h1v1h-1zM393 224h1v1h-1zM418 224h1v1h-1zM430 224h1v1h-1zM465 224h1v1h-1zM13 225h1v1h-1zM48 225h13v1h-13zM85 225h1v1h-1zM393 225h1v1h-1zM418 225h1v1h-1zM430 225h1v1h-1zM465 225h1v1h-1zM13 226h1v1h-1zM48 226h1v1h-1zM60 226h1v1h-1zM84 226h1v1h-1zM394 226h1v1h-1zM418 226h1v1h-1zM430 226h1v1h-1zM465 226h1v1h-1zM13 227h1v1h-1zM48 227h1v1h-1zM60 227h1v1h-1zM84 227h1v1h-1zM394 227h1v1h-1zM418 227h1v1h-1zM430 227h1v1h-1zM465 227h1v1h-1zM12 228h1v1h-1zM48 228h1v1h-1zM60 228h1v1h-1zM84 228h1v1h-1zM394 228h1v1h-1zM418 228h1v1h-1zM430 228h1v1h-1zM466 228h1v1h-1zM12 229h1v1h-1zM48 229h1v1h-1zM60 229h1v1h-1zM84 229h1v1h-1zM394 229h1v1h-1zM418 229h1v1h-1zM430 229h1v1h-1zM466 229h1v1h-1zM12 230h1v1h-1zM48 230h1v1h-1zM60 230h1v1h-1zM84 230h1v1h-1zM394 230h1v1h-1zM418 230h1v1h-1zM430 230h1v1h-1zM466 230h1v1h-1zM12 231h1v1h-1zM48 231h1v1h-1zM60 231h1v1h-1zM84 231h1v1h-1zM394 231h1v1h-1zM418 231h1v1h-1zM430 231h1v1h-1zM466 231h1v1h-1zM12 232h1v1h-1zM48 232h1v1h-1zM60 232h1v1h-1zM84 232h1v1h-1zM394 232h1v1h-1zM418 232h1v1h-1zM430 232h1v1h-1zM466 232h1v1h-1zM12 233h1v1h-1zM48 233h1v1h-1zM60 233h1v1h-1zM84 233h1v1h-1zM394 233h1v1h-1zM418 233h1v1h-1zM430 233h1v1h-1zM466 233h1v1h-1zM12 234h1v1h-1zM48 234h1v1h-1zM60 234h1v1h-1zM84 234h1v1h-1zM394 234h1v1h-1zM418 234h1v1h-1zM430 234h1v1h-1zM466 234h1v1h-1zM12 235h1v1h-1zM48 235h1v1h-1zM60 235h1v1h-1zM84 235h1v1h-1zM394 235h1v1h-1zM418 235h1v1h-1zM430 235h1v1h-1zM466 235h1v1h-1zM12 236h1v1h-1zM48 236h1v1h-1zM60 236h1v1h-1zM84 236h1v1h-1zM394 236h1v1h-1zM418 236h1v1h-1zM430 236h1v1h-1zM466 236h1v1h-1zM12 237h1v1h-1zM48 237h1v1h-1zM60 237h1v1h-1zM84 237h1v1h-1zM394 237h1v1h-1zM418 237h1v1h-1zM430 237h1v1h-1zM466 237h1v1h-1zM12 238h1v1h-1zM48 238h1v1h-1zM60 238h1v1h-1zM84 238h1v1h-1zM394 238h1v1h-1zM418 238h13v1h-13zM466 238h1v1h-1zM12 239h1v1h-1zM48 239h1v1h-1zM60 239h25v1h-25zM394 239h25v1h-25zM430 239h1v1h-1zM466 239h1v1h-1zM12 240h1v1h-1zM48 240h13v1h-13zM84 240h1v1h-1zM394 240h1v1h-1zM418 240h1v1h-1zM430 240h1v1h-1zM466 240h1v1h-1zM12 241h1v1h-1zM48 241h1v1h-1zM60 241h1v1h-1zM84 241h1v1h-1zM394 241h1v1h-1zM418 241h1v1h-1zM430 241h1v1h-1zM466 241h1v1h-1zM12 242h1v1h-1zM48 242h1v1h-1zM60 242h1v1h-1zM84 242h1v1h-1zM394 242h1v1h-1zM418 242h1v1h-1zM430 242h1v1h-1zM466 242h1v1h-1zM12 243h1v1h-1zM48 243h1v1h-1zM60 243h1v1h-1zM84 243h1v1h-1zM394 243h1v1h-1zM418 243h1v1h-1zM430 243h1v1h-1zM466 243h1v1h-1zM12 244h1v1h-1zM48 244h1v1h-1zM60 244h1v1h-1zM84 244h1v1h-1zM394 244h1v1h-1zM418 244h1v1h-1zM430 244h1v1h-1zM466 244h1v1h-1zM12 245h1v1h-1zM48 245h1v1h-1zM60 245h1v1h-1zM84 245h1v1h-1zM394 245h1v1h-1zM418 245h1v1h-1zM430 245h1v1h-1zM466 245h1v1h-1zM12 246h1v1h-1zM48 246h1v1h-1zM60 246h1v1h-1zM84 246h1v1h-1zM394 246h1v1h-1zM418 246h1v1h-1zM430 246h1v1h-1zM466 246h1v1h-1zM12 247h1v1h-1zM48 247h1v1h-1zM60 247h1v1h-1zM84 247h1v1h-1zM394 247h1v1h-1zM418 247h1v1h-1zM430 247h1v1h-1zM466 247h1v1h-1zM12 248h1v1h-1zM48 248h1v1h-1zM60 248h1v1h-1zM84 248h1v1h-1zM394 248h1v1h-1zM418 248h1v1h-1zM430 248h1v1h-1zM466 248h1v1h-1zM12 249h1v1h-1zM48 249h1v1h-1zM60 249h1v1h-1zM84 249h1v1h-1zM111 249h5v1h-5zM394 249h1v1h-1zM418 249h1v1h-1zM430 249h1v1h-1zM466 249h1v1h-1zM13 250h1v1h-1zM48 250h1v1h-1zM60 250h1v1h-1zM84 250h1v1h-1zM105 250h6v1h-6zM394 250h1v1h-1zM418 250h1v1h-1zM430 250h1v1h-1zM465 250h1v1h-1zM13 251h1v1h-1zM48 251h1v1h-1zM60 251h1v1h-1zM84 251h1v1h-1zM394 251h1v1h-1zM418 251h1v1h-1zM430 251h1v1h-1zM465 251h1v1h-1zM13 252h1v1h-1zM48 252h1v1h-1zM60 252h1v1h-1zM85 252h1v1h-1zM393 252h1v1h-1zM418 252h1v1h-1zM430 252h1v1h-1zM465 252h1v1h-1zM13 253h1v1h-1zM48 253h1v1h-1zM60 253h1v1h-1zM85 253h1v1h-1zM393 253h1v1h-1zM418 253h13v1h-13zM465 253h1v1h-1zM13 254h1v1h-1zM48 254h1v1h-1zM61 254h1v1h-1zM85 254h1v1h-1zM393 254h1v1h-1zM417 254h1v1h-1zM430 254h1v1h-1zM465 254h1v1h-1zM13 255h1v1h-1zM48 255h1v1h-1zM61 255h1v1h-1zM85 255h1v1h-1zM393 255h1v1h-1zM417 255h1v1h-1zM430 255h1v1h-1zM465 255h1v1h-1zM13 256h1v1h-1zM49 256h1v1h-1zM55 256h7v1h-7zM85 256h1v1h-1zM393 256h1v1h-1zM417 256h1v1h-1zM429 256h1v1h-1zM465 256h1v1h-1zM13 257h1v1h-1zM43 257h12v1h-12zM61 257h1v1h-1zM85 257h1v1h-1zM393 257h1v1h-1zM417 257h1v1h-1zM429 257h1v1h-1zM465 257h1v1h-1zM13 258h1v1h-1zM31 258h12v1h-12zM49 258h1v1h-1zM61 258h1v1h-1zM86 258h1v1h-1zM392 258h1v1h-1zM417 258h1v1h-1zM429 258h1v1h-1zM465 258h1v1h-1zM13 259h1v1h-1zM20 259h11v1h-11zM49 259h1v1h-1zM61 259h1v1h-1zM86 259h1v1h-1zM392 259h1v1h-1zM417 259h1v1h-1zM429 259h1v1h-1zM465 259h1v1h-1zM13 260h7v1h-7zM49 260h1v1h-1zM62 260h1v1h-1zM86 260h1v1h-1zM392 260h1v1h-1zM416 260h1v1h-1zM429 260h1v1h-1zM465 260h1v1h-1zM13 261h1v1h-1zM49 261h1v1h-1zM62 261h1v1h-1zM86 261h1v1h-1zM392 261h1v1h-1zM416 261h1v1h-1zM429 261h1v1h-1zM465 261h1v1h-1zM13 262h1v1h-1zM50 262h1v1h-1zM62 262h1v1h-1zM86 262h1v1h-1zM392 262h1v1h-1zM416 262h1v1h-1zM428 262h1v1h-1zM465 262h1v1h-1zM13 263h1v1h-1zM50 263h1v1h-1zM62 263h1v1h-1zM86 263h1v1h-1zM392 263h1v1h-1zM416 263h1v1h-1zM428 263h1v1h-1zM465 263h1v1h-1zM13 264h1v1h-1zM50 264h1v1h-1zM62 264h1v1h-1zM86 264h1v1h-1zM392 264h1v1h-1zM416 264h1v1h-1zM428 264h1v1h-1zM465 264h1v1h-1zM13 265h1v1h-1zM50 265h1v1h-1zM62 265h1v1h-1zM86 265h1v1h-1zM392 265h1v1h-1zM416 265h1v1h-1zM428 265h1v1h-1zM465 265h1v1h-1zM14 266h1v1h-1zM50 266h1v1h-1zM62 266h1v1h-1zM86 266h1v1h-1zM392 266h1v1h-1zM416 266h1v1h-1zM428 266h1v1h-1zM464 266h1v1h-1zM14 267h1v1h-1zM50 267h1v1h-1zM63 267h1v1h-1zM86 267h1v1h-1zM392 267h1v1h-1zM415 267h1v1h-1zM428 267h1v1h-1zM464 267h1v1h-1zM14 268h1v1h-1zM50 268h1v1h-1zM63 268h1v1h-1zM86 268h1v1h-1zM392 268h1v1h-1zM415 268h4v1h-4zM428 268h1v1h-1zM464 268h1v1h-1zM14 269h1v1h-1zM51 269h1v1h-1zM63 269h1v1h-1zM87 269h1v1h-1zM391 269h1v1h-1zM415 269h1v1h-1zM419 269h6v1h-6zM427 269h1v1h-1zM464 269h1v1h-1zM14 270h1v1h-1zM51 270h1v1h-1zM63 270h1v1h-1zM87 270h1v1h-1zM391 270h1v1h-1zM415 270h1v1h-1zM425 270h3v1h-3zM464 270h1v1h-1zM14 271h1v1h-1zM51 271h1v1h-1zM60 271h4v1h-4zM87 271h1v1h-1zM391 271h1v1h-1zM415 271h1v1h-1zM427 271h1v1h-1zM464 271h1v1h-1zM14 272h1v1h-1zM51 272h1v1h-1zM55 272h5v1h-5zM63 272h1v1h-1zM87 272h1v1h-1zM391 272h1v1h-1zM415 272h1v1h-1zM427 272h1v1h-1zM464 272h1v1h-1zM14 273h1v1h-1zM51 273h4v1h-4zM64 273h1v1h-1zM88 273h1v1h-1zM390 273h1v1h-1zM414 273h1v1h-1zM427 273h1v1h-1zM464 273h1v1h-1zM15 274h1v1h-1zM51 274h1v1h-1zM64 274h1v1h-1zM88 274h1v1h-1zM390 274h1v1h-1zM414 274h1v1h-1zM427 274h1v1h-1zM463 274h1v1h-1zM15 275h1v1h-1zM52 275h1v1h-1zM64 275h1v1h-1zM89 275h1v1h-1zM389 275h1v1h-1zM414 275h1v1h-1zM426 275h1v1h-1zM463 275h1v1h-1zM15 276h1v1h-1zM52 276h1v1h-1zM64 276h1v1h-1zM89 276h1v1h-1zM389 276h1v1h-1zM414 276h1v1h-1zM426 276h1v1h-1zM463 276h1v1h-1zM15 277h1v1h-1zM52 277h1v1h-1zM64 277h1v1h-1zM89 277h1v1h-1zM389 277h1v1h-1zM414 277h1v1h-1zM426 277h1v1h-1zM463 277h1v1h-1zM15 278h1v1h-1zM52 278h1v1h-1zM64 278h1v1h-1zM89 278h1v1h-1zM389 278h1v1h-1zM414 278h1v1h-1zM426 278h1v1h-1zM463 278h1v1h-1zM15 279h1v1h-1zM52 279h1v1h-1zM65 279h1v1h-1zM90 279h1v1h-1zM388 279h1v1h-1zM413 279h1v1h-1zM426 279h1v1h-1zM463 279h1v1h-1zM16 280h1v1h-1zM53 280h1v1h-1zM65 280h1v1h-1zM90 280h1v1h-1zM388 280h1v1h-1zM413 280h1v1h-1zM425 280h1v1h-1zM462 280h1v1h-1zM16 281h1v1h-1zM53 281h1v1h-1zM65 281h1v1h-1zM90 281h1v1h-1zM388 281h1v1h-1zM413 281h1v1h-1zM425 281h1v1h-1zM462 281h1v1h-1zM16 282h1v1h-1zM53 282h1v1h-1zM65 282h1v1h-1zM90 282h1v1h-1zM388 282h1v1h-1zM413 282h1v1h-1zM425 282h1v1h-1zM462 282h1v1h-1zM16 283h1v1h-1zM53 283h1v1h-1zM65 283h1v1h-1zM91 283h1v1h-1zM387 283h1v1h-1zM413 283h1v1h-1zM425 283h1v1h-1zM462 283h1v1h-1zM17 284h1v1h-1zM54 284h1v1h-1zM66 284h1v1h-1zM91 284h1v1h-1zM387 284h1v1h-1zM412 284h4v1h-4zM424 284h1v1h-1zM461 284h1v1h-1zM17 285h1v1h-1zM54 285h1v1h-1zM66 285h1v1h-1zM91 285h1v1h-1zM387 285h1v1h-1zM412 285h1v1h-1zM416 285h6v1h-6zM424 285h1v1h-1zM461 285h1v1h-1zM17 286h1v1h-1zM54 286h1v1h-1zM66 286h1v1h-1zM92 286h1v1h-1zM386 286h1v1h-1zM412 286h1v1h-1zM422 286h3v1h-3zM461 286h1v1h-1zM17 287h1v1h-1zM54 287h1v1h-1zM65 287h3v1h-3zM92 287h1v1h-1zM386 287h1v1h-1zM411 287h1v1h-1zM424 287h1v1h-1zM461 287h1v1h-1zM18 288h1v1h-1zM55 288h1v1h-1zM61 288h4v1h-4zM67 288h1v1h-1zM92 288h1v1h-1zM386 288h1v1h-1zM411 288h1v1h-1zM423 288h1v1h-1zM460 288h1v1h-1zM18 289h1v1h-1zM55 289h1v1h-1zM57 289h4v1h-4zM67 289h1v1h-1zM92 289h1v1h-1zM386 289h1v1h-1zM411 289h1v1h-1zM423 289h1v1h-1zM460 289h1v1h-1zM18 290h1v1h-1zM55 290h2v1h-2zM68 290h1v1h-1zM93 290h1v1h-1zM385 290h1v1h-1zM410 290h1v1h-1zM423 290h1v1h-1zM460 290h1v1h-1zM18 291h1v1h-1zM55 291h1v1h-1zM68 291h1v1h-1zM93 291h1v1h-1zM385 291h1v1h-1zM410 291h1v1h-1zM423 291h1v1h-1zM460 291h1v1h-1zM19 292h1v1h-1zM55 292h1v1h-1zM68 292h1v1h-1zM93 292h1v1h-1zM385 292h1v1h-1zM410 292h1v1h-1zM423 292h1v1h-1zM459 292h1v1h-1zM19 293h1v1h-1zM56 293h1v1h-1zM69 293h1v1h-1zM93 293h1v1h-1zM385 293h1v1h-1zM409 293h1v1h-1zM422 293h1v1h-1zM459 293h1v1h-1zM19 294h1v1h-1zM56 294h1v1h-1zM69 294h1v1h-1zM94 294h1v1h-1zM384 294h1v1h-1zM409 294h1v1h-1zM422 294h1v1h-1zM459 294h1v1h-1zM19 295h1v1h-1zM56 295h1v1h-1zM69 295h1v1h-1zM94 295h1v1h-1zM384 295h1v1h-1zM409 295h1v1h-1zM422 295h1v1h-1zM459 295h1v1h-1zM20 296h1v1h-1zM56 296h1v1h-1zM70 296h1v1h-1zM95 296h1v1h-1zM383 296h1v1h-1zM408 296h1v1h-1zM422 296h1v1h-1zM458 296h1v1h-1zM20 297h1v1h-1zM57 297h1v1h-1zM70 297h1v1h-1zM95 297h1v1h-1zM383 297h1v1h-1zM408 297h1v1h-1zM421 297h1v1h-1zM458 297h1v1h-1zM20 298h1v1h-1zM57 298h1v1h-1zM70 298h1v1h-1zM95 298h1v1h-1zM383 298h1v1h-1zM408 298h1v1h-1zM421 298h1v1h-1zM458 298h1v1h-1zM20 299h1v1h-1zM58 299h1v1h-1zM71 299h1v1h-1zM96 299h1v1h-1zM382 299h1v1h-1zM407 299h3v1h-3zM420 299h1v1h-1zM458 299h1v1h-1zM21 300h1v1h-1zM58 300h1v1h-1zM71 300h1v1h-1zM96 300h1v1h-1zM382 300h1v1h-1zM407 300h1v1h-1zM410 300h4v1h-4zM420 300h1v1h-1zM457 300h1v1h-1zM21 301h1v1h-1zM59 301h1v1h-1zM71 301h1v1h-1zM97 301h1v1h-1zM381 301h1v1h-1zM407 301h1v1h-1zM414 301h4v1h-4zM419 301h1v1h-1zM457 301h1v1h-1zM21 302h1v1h-1zM59 302h1v1h-1zM70 302h3v1h-3zM97 302h1v1h-1zM381 302h1v1h-1zM406 302h1v1h-1zM418 302h2v1h-2zM457 302h1v1h-1zM22 303h1v1h-1zM60 303h1v1h-1zM67 303h3v1h-3zM72 303h1v1h-1zM98 303h1v1h-1zM380 303h1v1h-1zM406 303h1v1h-1zM418 303h1v1h-1zM456 303h1v1h-1zM22 304h1v1h-1zM60 304h1v1h-1zM65 304h2v1h-2zM72 304h1v1h-1zM98 304h1v1h-1zM380 304h1v1h-1zM406 304h1v1h-1zM418 304h1v1h-1zM456 304h1v1h-1zM22 305h1v1h-1zM60 305h1v1h-1zM62 305h3v1h-3zM73 305h1v1h-1zM99 305h1v1h-1zM379 305h1v1h-1zM405 305h1v1h-1zM418 305h1v1h-1zM456 305h1v1h-1zM22 306h1v1h-1zM60 306h2v1h-2zM73 306h1v1h-1zM99 306h1v1h-1zM379 306h1v1h-1zM405 306h1v1h-1zM417 306h1v1h-1zM456 306h1v1h-1zM23 307h1v1h-1zM61 307h1v1h-1zM74 307h1v1h-1zM98 307h3v1h-3zM378 307h1v1h-1zM404 307h1v1h-1zM417 307h1v1h-1zM455 307h1v1h-1zM23 308h1v1h-1zM61 308h1v1h-1zM74 308h1v1h-1zM96 308h2v1h-2zM100 308h1v1h-1zM378 308h1v1h-1zM404 308h1v1h-1zM417 308h1v1h-1zM455 308h1v1h-1zM23 309h1v1h-1zM62 309h1v1h-1zM75 309h1v1h-1zM94 309h2v1h-2zM101 309h1v1h-1zM377 309h1v1h-1zM403 309h1v1h-1zM416 309h1v1h-1zM455 309h1v1h-1zM23 310h1v1h-1zM62 310h1v1h-1zM75 310h1v1h-1zM92 310h2v1h-2zM101 310h1v1h-1zM377 310h1v1h-1zM403 310h1v1h-1zM416 310h1v1h-1zM455 310h1v1h-1zM24 311h1v1h-1zM63 311h1v1h-1zM76 311h1v1h-1zM90 311h2v1h-2zM102 311h1v1h-1zM376 311h1v1h-1zM402 311h1v1h-1zM415 311h1v1h-1zM454 311h1v1h-1zM24 312h1v1h-1zM63 312h1v1h-1zM76 312h1v1h-1zM88 312h2v1h-2zM102 312h1v1h-1zM376 312h1v1h-1zM402 312h1v1h-1zM415 312h1v1h-1zM454 312h1v1h-1zM25 313h1v1h-1zM64 313h1v1h-1zM76 313h1v1h-1zM86 313h2v1h-2zM103 313h1v1h-1zM375 313h1v1h-1zM402 313h3v1h-3zM414 313h1v1h-1zM453 313h1v1h-1zM25 314h1v1h-1zM64 314h1v1h-1zM77 314h1v1h-1zM84 314h2v1h-2zM104 314h1v1h-1zM374 314h1v1h-1zM401 314h1v1h-1zM405 314h2v1h-2zM414 314h1v1h-1zM453 314h1v1h-1zM26 315h1v1h-1zM65 315h1v1h-1zM77 315h1v1h-1zM82 315h2v1h-2zM104 315h1v1h-1zM374 315h1v1h-1zM401 315h1v1h-1zM407 315h2v1h-2zM413 315h1v1h-1zM452 315h1v1h-1zM26 316h1v1h-1zM65 316h1v1h-1zM76 316h3v1h-3zM80 316h2v1h-2zM105 316h1v1h-1zM373 316h1v1h-1zM400 316h1v1h-1zM409 316h2v1h-2zM413 316h1v1h-1zM452 316h1v1h-1zM26 317h1v1h-1zM65 317h1v1h-1zM74 317h2v1h-2zM78 317h2v1h-2zM106 317h1v1h-1zM372 317h1v1h-1zM400 317h1v1h-1zM411 317h3v1h-3zM452 317h1v1h-1zM27 318h1v1h-1zM66 318h1v1h-1zM72 318h2v1h-2zM79 318h1v1h-1zM106 318h1v1h-1zM372 318h1v1h-1zM399 318h1v1h-1zM412 318h4v1h-4zM451 318h1v1h-1zM27 319h1v1h-1zM66 319h1v1h-1zM70 319h2v1h-2zM79 319h1v1h-1zM107 319h1v1h-1zM371 319h1v1h-1zM399 319h1v1h-1zM412 319h1v1h-1zM416 319h2v1h-2zM451 319h1v1h-1zM28 320h1v1h-1zM66 320h1v1h-1zM68 320h2v1h-2zM80 320h1v1h-1zM107 320h1v1h-1zM371 320h1v1h-1zM398 320h1v1h-1zM412 320h1v1h-1zM418 320h2v1h-2zM450 320h1v1h-1zM28 321h1v1h-1zM67 321h1v1h-1zM80 321h1v1h-1zM108 321h1v1h-1zM370 321h1v1h-1zM398 321h1v1h-1zM411 321h1v1h-1zM420 321h2v1h-2zM450 321h1v1h-1zM28 322h1v1h-1zM67 322h1v1h-1zM81 322h1v1h-1zM109 322h1v1h-1zM369 322h1v1h-1zM397 322h1v1h-1zM411 322h1v1h-1zM422 322h2v1h-2zM450 322h1v1h-1zM29 323h1v1h-1zM68 323h1v1h-1zM81 323h1v1h-1zM110 323h1v1h-1zM368 323h1v1h-1zM397 323h1v1h-1zM410 323h1v1h-1zM424 323h2v1h-2zM449 323h1v1h-1zM29 324h1v1h-1zM68 324h1v1h-1zM82 324h1v1h-1zM110 324h1v1h-1zM368 324h1v1h-1zM396 324h1v1h-1zM410 324h1v1h-1zM426 324h2v1h-2zM449 324h1v1h-1zM29 325h1v1h-1zM69 325h1v1h-1zM82 325h1v1h-1zM111 325h1v1h-1zM367 325h1v1h-1zM396 325h1v1h-1zM409 325h1v1h-1zM428 325h2v1h-2zM449 325h1v1h-1zM30 326h1v1h-1zM69 326h1v1h-1zM83 326h1v1h-1zM112 326h1v1h-1zM366 326h1v1h-1zM395 326h1v1h-1zM409 326h1v1h-1zM430 326h2v1h-2zM448 326h1v1h-1zM30 327h1v1h-1zM70 327h1v1h-1zM83 327h1v1h-1zM112 327h1v1h-1zM366 327h1v1h-1zM395 327h1v1h-1zM408 327h1v1h-1zM432 327h2v1h-2zM448 327h1v1h-1zM31 328h1v1h-1zM70 328h1v1h-1zM84 328h1v1h-1zM113 328h1v1h-1zM365 328h1v1h-1zM394 328h1v1h-1zM396 328h2v1h-2zM408 328h1v1h-1zM434 328h2v1h-2zM447 328h1v1h-1zM31 329h1v1h-1zM71 329h1v1h-1zM85 329h1v1h-1zM113 329h1v1h-1zM365 329h1v1h-1zM393 329h1v1h-1zM398 329h2v1h-2zM407 329h1v1h-1zM436 329h2v1h-2zM447 329h1v1h-1zM32 330h1v1h-1zM71 330h1v1h-1zM84 330h2v1h-2zM114 330h1v1h-1zM364 330h1v1h-1zM393 330h1v1h-1zM400 330h1v1h-1zM407 330h1v1h-1zM438 330h2v1h-2zM446 330h1v1h-1zM32 331h1v1h-1zM72 331h1v1h-1zM82 331h2v1h-2zM86 331h1v1h-1zM115 331h1v1h-1zM363 331h1v1h-1zM392 331h1v1h-1zM401 331h2v1h-2zM406 331h1v1h-1zM440 331h2v1h-2zM446 331h1v1h-1zM32 332h1v1h-1zM73 332h1v1h-1zM81 332h1v1h-1zM86 332h1v1h-1zM116 332h1v1h-1zM362 332h1v1h-1zM392 332h1v1h-1zM403 332h3v1h-3zM442 332h2v1h-2zM446 332h1v1h-1zM33 333h1v1h-1zM73 333h1v1h-1zM79 333h2v1h-2zM87 333h1v1h-1zM116 333h1v1h-1zM362 333h1v1h-1zM391 333h1v1h-1zM405 333h1v1h-1zM444 333h2v1h-2zM33 334h1v1h-1zM74 334h1v1h-1zM78 334h1v1h-1zM87 334h1v1h-1zM117 334h1v1h-1zM361 334h1v1h-1zM391 334h1v1h-1zM404 334h1v1h-1zM445 334h1v1h-1zM34 335h1v1h-1zM75 335h3v1h-3zM88 335h1v1h-1zM118 335h1v1h-1zM360 335h1v1h-1zM390 335h1v1h-1zM403 335h1v1h-1zM444 335h1v1h-1zM34 336h1v1h-1zM75 336h1v1h-1zM89 336h1v1h-1zM119 336h1v1h-1zM359 336h1v1h-1zM389 336h1v1h-1zM403 336h1v1h-1zM444 336h1v1h-1zM35 337h1v1h-1zM76 337h1v1h-1zM89 337h1v1h-1zM119 337h1v1h-1zM163 337h1v1h-1zM359 337h1v1h-1zM389 337h1v1h-1zM402 337h1v1h-1zM443 337h1v1h-1zM35 338h1v1h-1zM76 338h1v1h-1zM90 338h1v1h-1zM120 338h1v1h-1zM162 338h1v1h-1zM358 338h1v1h-1zM388 338h1v1h-1zM402 338h1v1h-1zM443 338h1v1h-1zM36 339h1v1h-1zM77 339h1v1h-1zM91 339h1v1h-1zM121 339h1v1h-1zM161 339h1v1h-1zM357 339h1v1h-1zM387 339h1v1h-1zM401 339h1v1h-1zM442 339h1v1h-1zM36 340h1v1h-1zM77 340h1v1h-1zM92 340h1v1h-1zM122 340h1v1h-1zM161 340h1v1h-1zM356 340h1v1h-1zM386 340h1v1h-1zM401 340h1v1h-1zM442 340h1v1h-1zM37 341h1v1h-1zM78 341h1v1h-1zM92 341h1v1h-1zM122 341h1v1h-1zM160 341h1v1h-1zM356 341h1v1h-1zM386 341h2v1h-2zM400 341h1v1h-1zM441 341h1v1h-1zM37 342h1v1h-1zM78 342h1v1h-1zM93 342h1v1h-1zM123 342h1v1h-1zM159 342h1v1h-1zM355 342h1v1h-1zM385 342h1v1h-1zM388 342h2v1h-2zM400 342h1v1h-1zM441 342h1v1h-1zM38 343h1v1h-1zM79 343h1v1h-1zM93 343h1v1h-1zM124 343h1v1h-1zM158 343h1v1h-1zM354 343h1v1h-1zM385 343h1v1h-1zM390 343h1v1h-1zM399 343h1v1h-1zM440 343h1v1h-1zM38 344h1v1h-1zM80 344h1v1h-1zM92 344h1v1h-1zM94 344h1v1h-1zM125 344h1v1h-1zM158 344h1v1h-1zM353 344h1v1h-1zM384 344h1v1h-1zM391 344h2v1h-2zM398 344h1v1h-1zM440 344h1v1h-1zM39 345h1v1h-1zM80 345h1v1h-1zM90 345h2v1h-2zM95 345h1v1h-1zM126 345h1v1h-1zM157 345h1v1h-1zM352 345h1v1h-1zM383 345h1v1h-1zM393 345h1v1h-1zM398 345h1v1h-1zM439 345h1v1h-1zM39 346h1v1h-1zM81 346h1v1h-1zM89 346h1v1h-1zM96 346h1v1h-1zM127 346h1v1h-1zM351 346h1v1h-1zM382 346h1v1h-1zM394 346h2v1h-2zM397 346h1v1h-1zM439 346h1v1h-1zM40 347h1v1h-1zM82 347h1v1h-1zM88 347h1v1h-1zM96 347h1v1h-1zM128 347h1v1h-1zM350 347h1v1h-1zM382 347h1v1h-1zM396 347h1v1h-1zM438 347h1v1h-1zM40 348h1v1h-1zM83 348h1v1h-1zM86 348h2v1h-2zM97 348h1v1h-1zM129 348h1v1h-1zM349 348h1v1h-1zM381 348h1v1h-1zM395 348h1v1h-1zM438 348h1v1h-1zM41 349h1v1h-1zM83 349h1v1h-1zM85 349h1v1h-1zM98 349h1v1h-1zM130 349h1v1h-1zM348 349h1v1h-1zM380 349h1v1h-1zM395 349h1v1h-1zM437 349h1v1h-1zM41 350h1v1h-1zM83 350h2v1h-2zM99 350h1v1h-1zM131 350h1v1h-1zM347 350h2v1h-2zM379 350h1v1h-1zM394 350h1v1h-1zM437 350h1v1h-1zM42 351h1v1h-1zM81 351h2v1h-2zM85 351h1v1h-1zM100 351h1v1h-1zM132 351h1v1h-1zM346 351h1v1h-1zM349 351h1v1h-1zM378 351h1v1h-1zM393 351h1v1h-1zM436 351h1v1h-1zM42 352h1v1h-1zM80 352h1v1h-1zM86 352h1v1h-1zM100 352h1v1h-1zM133 352h1v1h-1zM345 352h1v1h-1zM350 352h1v1h-1zM378 352h1v1h-1zM392 352h1v1h-1zM436 352h1v1h-1zM43 353h1v1h-1zM79 353h1v1h-1zM87 353h1v1h-1zM101 353h1v1h-1zM134 353h1v1h-1zM344 353h1v1h-1zM351 353h1v1h-1zM377 353h2v1h-2zM391 353h1v1h-1zM435 353h1v1h-1zM43 354h1v1h-1zM77 354h2v1h-2zM87 354h1v1h-1zM102 354h1v1h-1zM134 354h2v1h-2zM343 354h1v1h-1zM352 354h1v1h-1zM376 354h1v1h-1zM379 354h1v1h-1zM391 354h1v1h-1zM435 354h1v1h-1zM44 355h1v1h-1zM76 355h1v1h-1zM88 355h1v1h-1zM103 355h1v1h-1zM133 355h1v1h-1zM136 355h1v1h-1zM342 355h1v1h-1zM353 355h1v1h-1zM375 355h1v1h-1zM380 355h1v1h-1zM390 355h1v1h-1zM434 355h1v1h-1zM45 356h1v1h-1zM74 356h2v1h-2zM89 356h1v1h-1zM102 356h1v1h-1zM104 356h1v1h-1zM132 356h1v1h-1zM137 356h2v1h-2zM340 356h2v1h-2zM354 356h1v1h-1zM374 356h1v1h-1zM381 356h2v1h-2zM389 356h1v1h-1zM433 356h1v1h-1zM46 357h1v1h-1zM73 357h1v1h-1zM90 357h1v1h-1zM101 357h1v1h-1zM104 357h1v1h-1zM131 357h1v1h-1zM139 357h1v1h-1zM339 357h1v1h-1zM355 357h1v1h-1zM374 357h1v1h-1zM383 357h1v1h-1zM388 357h1v1h-1zM432 357h1v1h-1zM46 358h1v1h-1zM72 358h1v1h-1zM90 358h1v1h-1zM100 358h1v1h-1zM105 358h1v1h-1zM130 358h1v1h-1zM140 358h1v1h-1zM338 358h1v1h-1zM356 358h1v1h-1zM373 358h1v1h-1zM384 358h1v1h-1zM388 358h1v1h-1zM432 358h1v1h-1zM47 359h1v1h-1zM70 359h2v1h-2zM91 359h1v1h-1zM98 359h2v1h-2zM106 359h1v1h-1zM129 359h1v1h-1zM141 359h1v1h-1zM336 359h2v1h-2zM357 359h1v1h-1zM372 359h1v1h-1zM385 359h1v1h-1zM387 359h1v1h-1zM431 359h1v1h-1zM48 360h1v1h-1zM69 360h1v1h-1zM92 360h1v1h-1zM97 360h1v1h-1zM107 360h1v1h-1zM128 360h1v1h-1zM142 360h2v1h-2zM335 360h1v1h-1zM358 360h1v1h-1zM371 360h1v1h-1zM386 360h1v1h-1zM430 360h1v1h-1zM48 361h1v1h-1zM67 361h2v1h-2zM92 361h1v1h-1zM96 361h1v1h-1zM108 361h1v1h-1zM127 361h1v1h-1zM144 361h1v1h-1zM334 361h1v1h-1zM359 361h1v1h-1zM370 361h1v1h-1zM386 361h1v1h-1zM430 361h1v1h-1zM49 362h1v1h-1zM66 362h1v1h-1zM93 362h1v1h-1zM95 362h1v1h-1zM109 362h1v1h-1zM126 362h1v1h-1zM145 362h1v1h-1zM332 362h2v1h-2zM360 362h1v1h-1zM369 362h1v1h-1zM385 362h1v1h-1zM429 362h1v1h-1zM49 363h1v1h-1zM65 363h1v1h-1zM94 363h1v1h-1zM110 363h1v1h-1zM125 363h1v1h-1zM146 363h2v1h-2zM331 363h1v1h-1zM361 363h1v1h-1zM368 363h1v1h-1zM384 363h1v1h-1zM429 363h1v1h-1zM50 364h1v1h-1zM63 364h2v1h-2zM95 364h1v1h-1zM111 364h1v1h-1zM124 364h1v1h-1zM148 364h1v1h-1zM330 364h1v1h-1zM362 364h1v1h-1zM367 364h1v1h-1zM383 364h1v1h-1zM428 364h1v1h-1zM50 365h1v1h-1zM62 365h1v1h-1zM95 365h1v1h-1zM112 365h1v1h-1zM123 365h1v1h-1zM149 365h2v1h-2zM328 365h2v1h-2zM363 365h1v1h-1zM366 365h2v1h-2zM383 365h1v1h-1zM428 365h1v1h-1zM51 366h1v1h-1zM60 366h2v1h-2zM96 366h1v1h-1zM113 366h1v1h-1zM122 366h1v1h-1zM151 366h2v1h-2zM326 366h2v1h-2zM364 366h2v1h-2zM368 366h1v1h-1zM382 366h1v1h-1zM427 366h1v1h-1zM52 367h1v1h-1zM59 367h1v1h-1zM97 367h1v1h-1zM113 367h2v1h-2zM121 367h1v1h-1zM153 367h1v1h-1zM325 367h1v1h-1zM364 367h1v1h-1zM369 367h1v1h-1zM381 367h1v1h-1zM426 367h1v1h-1zM52 368h1v1h-1zM58 368h1v1h-1zM98 368h1v1h-1zM112 368h1v1h-1zM115 368h1v1h-1zM120 368h1v1h-1zM154 368h1v1h-1zM323 368h2v1h-2zM363 368h1v1h-1zM370 368h2v1h-2zM380 368h1v1h-1zM426 368h1v1h-1zM53 369h1v1h-1zM56 369h2v1h-2zM99 369h1v1h-1zM111 369h1v1h-1zM116 369h1v1h-1zM119 369h1v1h-1zM155 369h2v1h-2zM322 369h1v1h-1zM362 369h1v1h-1zM372 369h1v1h-1zM379 369h1v1h-1zM425 369h1v1h-1zM54 370h2v1h-2zM100 370h1v1h-1zM110 370h1v1h-1zM117 370h2v1h-2zM157 370h1v1h-1zM321 370h1v1h-1zM361 370h1v1h-1zM373 370h1v1h-1zM378 370h1v1h-1zM424 370h1v1h-1zM54 371h1v1h-1zM101 371h1v1h-1zM110 371h1v1h-1zM118 371h1v1h-1zM158 371h2v1h-2zM319 371h2v1h-2zM360 371h1v1h-1zM374 371h1v1h-1zM377 371h1v1h-1zM424 371h1v1h-1zM55 372h1v1h-1zM102 372h1v1h-1zM109 372h1v1h-1zM119 372h1v1h-1zM160 372h2v1h-2zM317 372h2v1h-2zM359 372h1v1h-1zM375 372h2v1h-2zM423 372h1v1h-1zM56 373h1v1h-1zM103 373h1v1h-1zM108 373h1v1h-1zM120 373h1v1h-1zM162 373h1v1h-1zM316 373h1v1h-1zM358 373h1v1h-1zM375 373h1v1h-1zM422 373h1v1h-1zM56 374h1v1h-1zM104 374h1v1h-1zM107 374h1v1h-1zM121 374h2v1h-2zM163 374h1v1h-1zM314 374h2v1h-2zM356 374h2v1h-2zM374 374h1v1h-1zM422 374h1v1h-1zM57 375h1v1h-1zM105 375h2v1h-2zM123 375h1v1h-1zM164 375h2v1h-2zM313 375h1v1h-1zM355 375h1v1h-1zM373 375h1v1h-1zM421 375h1v1h-1zM58 376h1v1h-1zM106 376h1v1h-1zM124 376h1v1h-1zM166 376h2v1h-2zM311 376h2v1h-2zM354 376h1v1h-1zM356 376h1v1h-1zM372 376h1v1h-1zM420 376h1v1h-1zM59 377h1v1h-1zM107 377h1v1h-1zM125 377h1v1h-1zM168 377h2v1h-2zM309 377h2v1h-2zM353 377h1v1h-1zM357 377h1v1h-1zM371 377h1v1h-1zM419 377h1v1h-1zM59 378h1v1h-1zM108 378h1v1h-1zM125 378h3v1h-3zM170 378h2v1h-2zM307 378h2v1h-2zM351 378h2v1h-2zM358 378h1v1h-1zM370 378h1v1h-1zM419 378h1v1h-1zM60 379h1v1h-1zM109 379h1v1h-1zM124 379h1v1h-1zM128 379h1v1h-1zM172 379h2v1h-2zM305 379h2v1h-2zM350 379h1v1h-1zM359 379h1v1h-1zM369 379h1v1h-1zM418 379h1v1h-1zM61 380h1v1h-1zM110 380h1v1h-1zM123 380h1v1h-1zM129 380h1v1h-1zM174 380h2v1h-2zM303 380h2v1h-2zM349 380h1v1h-1zM359 380h1v1h-1zM368 380h1v1h-1zM417 380h1v1h-1zM62 381h1v1h-1zM111 381h1v1h-1zM122 381h1v1h-1zM130 381h1v1h-1zM176 381h2v1h-2zM301 381h2v1h-2zM348 381h1v1h-1zM360 381h1v1h-1zM367 381h1v1h-1zM416 381h1v1h-1zM63 382h1v1h-1zM112 382h1v1h-1zM122 382h1v1h-1zM131 382h2v1h-2zM178 382h2v1h-2zM299 382h2v1h-2zM346 382h2v1h-2zM361 382h1v1h-1zM366 382h1v1h-1zM415 382h1v1h-1zM63 383h1v1h-1zM113 383h2v1h-2zM121 383h1v1h-1zM133 383h1v1h-1zM180 383h3v1h-3zM296 383h3v1h-3zM345 383h1v1h-1zM362 383h1v1h-1zM364 383h2v1h-2zM415 383h1v1h-1zM64 384h1v1h-1zM115 384h1v1h-1zM120 384h1v1h-1zM134 384h1v1h-1zM183 384h2v1h-2zM294 384h2v1h-2zM344 384h1v1h-1zM363 384h1v1h-1zM414 384h1v1h-1zM65 385h1v1h-1zM116 385h1v1h-1zM119 385h1v1h-1zM135 385h2v1h-2zM185 385h4v1h-4zM290 385h4v1h-4zM342 385h2v1h-2zM362 385h1v1h-1zM413 385h1v1h-1zM66 386h1v1h-1zM117 386h2v1h-2zM137 386h2v1h-2zM185 386h1v1h-1zM189 386h4v1h-4zM286 386h4v1h-4zM340 386h2v1h-2zM344 386h1v1h-1zM360 386h2v1h-2zM412 386h1v1h-1zM67 387h1v1h-1zM119 387h1v1h-1zM137 387h1v1h-1zM139 387h1v1h-1zM184 387h1v1h-1zM193 387h3v1h-3zM283 387h3v1h-3zM339 387h1v1h-1zM345 387h1v1h-1zM359 387h1v1h-1zM411 387h1v1h-1zM68 388h1v1h-1zM120 388h2v1h-2zM136 388h1v1h-1zM140 388h1v1h-1zM184 388h1v1h-1zM196 388h4v1h-4zM279 388h4v1h-4zM338 388h1v1h-1zM345 388h1v1h-1zM357 388h2v1h-2zM410 388h1v1h-1zM68 389h1v1h-1zM122 389h1v1h-1zM136 389h1v1h-1zM141 389h2v1h-2zM184 389h1v1h-1zM200 389h4v1h-4zM275 389h4v1h-4zM336 389h2v1h-2zM346 389h1v1h-1zM356 389h1v1h-1zM410 389h1v1h-1zM69 390h1v1h-1zM123 390h1v1h-1zM135 390h1v1h-1zM143 390h1v1h-1zM183 390h1v1h-1zM204 390h2v1h-2zM273 390h2v1h-2zM335 390h1v1h-1zM347 390h1v1h-1zM355 390h1v1h-1zM409 390h1v1h-1zM70 391h1v1h-1zM124 391h2v1h-2zM134 391h1v1h-1zM144 391h1v1h-1zM183 391h1v1h-1zM206 391h4v1h-4zM269 391h4v1h-4zM333 391h2v1h-2zM348 391h1v1h-1zM353 391h2v1h-2zM408 391h1v1h-1zM71 392h1v1h-1zM126 392h1v1h-1zM134 392h1v1h-1zM145 392h2v1h-2zM182 392h1v1h-1zM210 392h11v1h-11zM258 392h11v1h-11zM331 392h2v1h-2zM348 392h1v1h-1zM352 392h1v1h-1zM407 392h1v1h-1zM72 393h1v1h-1zM127 393h1v1h-1zM133 393h1v1h-1zM147 393h2v1h-2zM182 393h1v1h-1zM221 393h5v1h-5zM252 393h6v1h-6zM329 393h2v1h-2zM349 393h1v1h-1zM351 393h1v1h-1zM406 393h1v1h-1zM73 394h1v1h-1zM128 394h1v1h-1zM132 394h1v1h-1zM149 394h2v1h-2zM182 394h1v1h-1zM226 394h26v1h-26zM258 394h1v1h-1zM328 394h1v1h-1zM330 394h1v1h-1zM350 394h1v1h-1zM405 394h1v1h-1zM74 395h1v1h-1zM129 395h2v1h-2zM132 395h1v1h-1zM151 395h2v1h-2zM181 395h1v1h-1zM258 395h1v1h-1zM326 395h2v1h-2zM331 395h1v1h-1zM348 395h3v1h-3zM404 395h1v1h-1zM75 396h1v1h-1zM131 396h1v1h-1zM150 396h1v1h-1zM153 396h2v1h-2zM181 396h1v1h-1zM258 396h1v1h-1zM324 396h2v1h-2zM331 396h1v1h-1zM347 396h1v1h-1zM351 396h1v1h-1zM403 396h1v1h-1zM76 397h1v1h-1zM132 397h1v1h-1zM150 397h1v1h-1zM155 397h1v1h-1zM181 397h1v1h-1zM258 397h1v1h-1zM322 397h2v1h-2zM332 397h1v1h-1zM346 397h1v1h-1zM351 397h1v1h-1zM402 397h1v1h-1zM77 398h1v1h-1zM133 398h2v1h-2zM149 398h1v1h-1zM156 398h2v1h-2zM180 398h1v1h-1zM258 398h1v1h-1zM320 398h2v1h-2zM333 398h1v1h-1zM344 398h2v1h-2zM352 398h1v1h-1zM401 398h1v1h-1zM78 399h1v1h-1zM135 399h1v1h-1zM149 399h1v1h-1zM158 399h2v1h-2zM180 399h1v1h-1zM258 399h1v1h-1zM318 399h2v1h-2zM333 399h1v1h-1zM343 399h1v1h-1zM353 399h1v1h-1zM400 399h1v1h-1zM79 400h1v1h-1zM136 400h2v1h-2zM148 400h1v1h-1zM160 400h3v1h-3zM180 400h1v1h-1zM259 400h1v1h-1zM316 400h2v1h-2zM334 400h1v1h-1zM341 400h2v1h-2zM354 400h1v1h-1zM399 400h1v1h-1zM80 401h1v1h-1zM138 401h1v1h-1zM147 401h1v1h-1zM163 401h2v1h-2zM179 401h1v1h-1zM259 401h1v1h-1zM314 401h3v1h-3zM335 401h1v1h-1zM339 401h2v1h-2zM354 401h1v1h-1zM398 401h1v1h-1zM81 402h1v1h-1zM139 402h2v1h-2zM147 402h1v1h-1zM165 402h2v1h-2zM179 402h1v1h-1zM259 402h1v1h-1zM311 402h3v1h-3zM316 402h1v1h-1zM335 402h1v1h-1zM337 402h2v1h-2zM355 402h1v1h-1zM397 402h1v1h-1zM82 403h1v1h-1zM141 403h2v1h-2zM146 403h1v1h-1zM165 403h1v1h-1zM167 403h2v1h-2zM178 403h1v1h-1zM259 403h1v1h-1zM309 403h2v1h-2zM317 403h1v1h-1zM335 403h2v1h-2zM356 403h1v1h-1zM396 403h1v1h-1zM83 404h1v1h-1zM143 404h2v1h-2zM146 404h1v1h-1zM165 404h1v1h-1zM169 404h2v1h-2zM178 404h1v1h-1zM259 404h1v1h-1zM307 404h2v1h-2zM317 404h1v1h-1zM334 404h1v1h-1zM356 404h1v1h-1zM395 404h1v1h-1zM84 405h1v1h-1zM145 405h2v1h-2zM164 405h1v1h-1zM171 405h3v1h-3zM178 405h1v1h-1zM259 405h1v1h-1zM305 405h2v1h-2zM318 405h1v1h-1zM332 405h2v1h-2zM357 405h1v1h-1zM394 405h1v1h-1zM85 406h1v1h-1zM147 406h1v1h-1zM164 406h1v1h-1zM174 406h4v1h-4zM259 406h1v1h-1zM302 406h3v1h-3zM318 406h1v1h-1zM331 406h1v1h-1zM358 406h1v1h-1zM393 406h1v1h-1zM86 407h1v1h-1zM148 407h2v1h-2zM163 407h1v1h-1zM177 407h3v1h-3zM259 407h1v1h-1zM299 407h4v1h-4zM319 407h1v1h-1zM329 407h2v1h-2zM359 407h1v1h-1zM392 407h1v1h-1zM87 408h1v1h-1zM150 408h1v1h-1zM163 408h1v1h-1zM179 408h4v1h-4zM259 408h1v1h-1zM296 408h3v1h-3zM302 408h1v1h-1zM319 408h1v1h-1zM327 408h2v1h-2zM359 408h1v1h-1zM391 408h1v1h-1zM88 409h1v1h-1zM151 409h2v1h-2zM162 409h1v1h-1zM179 409h1v1h-1zM183 409h3v1h-3zM259 409h1v1h-1zM293 409h3v1h-3zM303 409h1v1h-1zM320 409h1v1h-1zM325 409h2v1h-2zM360 409h1v1h-1zM390 409h1v1h-1zM89 410h1v1h-1zM153 410h2v1h-2zM162 410h1v1h-1zM178 410h1v1h-1zM186 410h3v1h-3zM259 410h1v1h-1zM290 410h3v1h-3zM303 410h1v1h-1zM320 410h1v1h-1zM323 410h2v1h-2zM361 410h1v1h-1zM388 410h2v1h-2zM90 411h2v1h-2zM155 411h3v1h-3zM161 411h1v1h-1zM178 411h1v1h-1zM189 411h3v1h-3zM260 411h1v1h-1zM287 411h3v1h-3zM303 411h1v1h-1zM321 411h2v1h-2zM361 411h1v1h-1zM387 411h1v1h-1zM92 412h1v1h-1zM158 412h4v1h-4zM178 412h1v1h-1zM192 412h3v1h-3zM260 412h1v1h-1zM284 412h4v1h-4zM304 412h1v1h-1zM318 412h3v1h-3zM362 412h1v1h-1zM386 412h1v1h-1zM93 413h1v1h-1zM160 413h3v1h-3zM178 413h1v1h-1zM194 413h5v1h-5zM260 413h1v1h-1zM279 413h5v1h-5zM287 413h1v1h-1zM304 413h1v1h-1zM315 413h3v1h-3zM363 413h1v1h-1zM385 413h1v1h-1zM94 414h1v1h-1zM160 414h1v1h-1zM163 414h2v1h-2zM177 414h1v1h-1zM194 414h1v1h-1zM199 414h6v1h-6zM260 414h1v1h-1zM273 414h6v1h-6zM288 414h1v1h-1zM305 414h1v1h-1zM313 414h2v1h-2zM364 414h1v1h-1zM384 414h1v1h-1zM95 415h1v1h-1zM160 415h1v1h-1zM165 415h2v1h-2zM177 415h1v1h-1zM194 415h1v1h-1zM205 415h7v1h-7zM260 415h1v1h-1zM267 415h6v1h-6zM288 415h1v1h-1zM305 415h1v1h-1zM311 415h2v1h-2zM364 415h1v1h-1zM382 415h2v1h-2zM96 416h2v1h-2zM159 416h1v1h-1zM167 416h3v1h-3zM177 416h1v1h-1zM193 416h1v1h-1zM210 416h1v1h-1zM212 416h6v1h-6zM260 416h7v1h-7zM271 416h1v1h-1zM288 416h1v1h-1zM305 416h1v1h-1zM309 416h2v1h-2zM365 416h1v1h-1zM381 416h1v1h-1zM98 417h1v1h-1zM159 417h1v1h-1zM170 417h3v1h-3zM177 417h1v1h-1zM193 417h1v1h-1zM210 417h1v1h-1zM218 417h6v1h-6zM254 417h6v1h-6zM271 417h1v1h-1zM288 417h1v1h-1zM306 417h3v1h-3zM366 417h1v1h-1zM380 417h1v1h-1zM99 418h1v1h-1zM158 418h1v1h-1zM173 418h2v1h-2zM176 418h1v1h-1zM193 418h1v1h-1zM210 418h1v1h-1zM224 418h30v1h-30zM256 418h1v1h-1zM271 418h1v1h-1zM289 418h1v1h-1zM303 418h4v1h-4zM366 418h1v1h-1zM379 418h1v1h-1zM100 419h2v1h-2zM158 419h1v1h-1zM175 419h2v1h-2zM193 419h1v1h-1zM209 419h1v1h-1zM225 419h1v1h-1zM240 419h1v1h-1zM256 419h1v1h-1zM272 419h1v1h-1zM289 419h1v1h-1zM301 419h2v1h-2zM367 419h1v1h-1zM377 419h2v1h-2zM102 420h1v1h-1zM157 420h1v1h-1zM177 420h2v1h-2zM193 420h1v1h-1zM209 420h1v1h-1zM225 420h1v1h-1zM240 420h1v1h-1zM256 420h1v1h-1zM272 420h1v1h-1zM289 420h1v1h-1zM299 420h2v1h-2zM368 420h1v1h-1zM376 420h1v1h-1zM103 421h1v1h-1zM157 421h1v1h-1zM179 421h3v1h-3zM193 421h1v1h-1zM209 421h1v1h-1zM225 421h1v1h-1zM240 421h1v1h-1zM256 421h1v1h-1zM272 421h1v1h-1zM289 421h1v1h-1zM297 421h2v1h-2zM369 421h1v1h-1zM375 421h1v1h-1zM104 422h2v1h-2zM156 422h1v1h-1zM182 422h4v1h-4zM192 422h1v1h-1zM209 422h1v1h-1zM225 422h1v1h-1zM240 422h1v1h-1zM256 422h1v1h-1zM272 422h1v1h-1zM290 422h1v1h-1zM293 422h4v1h-4zM369 422h1v1h-1zM373 422h2v1h-2zM106 423h1v1h-1zM156 423h1v1h-1zM186 423h4v1h-4zM192 423h1v1h-1zM209 423h1v1h-1zM225 423h1v1h-1zM240 423h1v1h-1zM256 423h1v1h-1zM272 423h1v1h-1zM288 423h5v1h-5zM370 423h1v1h-1zM372 423h1v1h-1zM107 424h2v1h-2zM155 424h1v1h-1zM190 424h5v1h-5zM209 424h1v1h-1zM225 424h1v1h-1zM240 424h1v1h-1zM257 424h1v1h-1zM273 424h1v1h-1zM284 424h4v1h-4zM370 424h2v1h-2zM109 425h1v1h-1zM155 425h1v1h-1zM195 425h4v1h-4zM208 425h1v1h-1zM225 425h1v1h-1zM240 425h1v1h-1zM257 425h1v1h-1zM273 425h1v1h-1zM280 425h4v1h-4zM369 425h1v1h-1zM110 426h2v1h-2zM154 426h1v1h-1zM199 426h4v1h-4zM208 426h1v1h-1zM225 426h1v1h-1zM240 426h1v1h-1zM257 426h1v1h-1zM273 426h1v1h-1zM275 426h5v1h-5zM367 426h2v1h-2zM112 427h1v1h-1zM154 427h1v1h-1zM203 427h7v1h-7zM225 427h1v1h-1zM240 427h1v1h-1zM257 427h1v1h-1zM269 427h6v1h-6zM366 427h1v1h-1zM113 428h2v1h-2zM153 428h1v1h-1zM210 428h6v1h-6zM225 428h1v1h-1zM240 428h1v1h-1zM257 428h1v1h-1zM262 428h7v1h-7zM364 428h2v1h-2zM115 429h2v1h-2zM153 429h1v1h-1zM216 429h7v1h-7zM225 429h1v1h-1zM240 429h1v1h-1zM256 429h6v1h-6zM362 429h2v1h-2zM117 430h2v1h-2zM152 430h1v1h-1zM223 430h33v1h-33zM257 430h1v1h-1zM360 430h2v1h-2zM119 431h1v1h-1zM152 431h1v1h-1zM257 431h1v1h-1zM359 431h1v1h-1zM120 432h2v1h-2zM151 432h1v1h-1zM257 432h1v1h-1zM357 432h2v1h-2zM122 433h1v1h-1zM151 433h1v1h-1zM257 433h1v1h-1zM356 433h1v1h-1zM123 434h1v1h-1zM150 434h1v1h-1zM257 434h1v1h-1zM355 434h1v1h-1zM124 435h2v1h-2zM150 435h1v1h-1zM257 435h1v1h-1zM353 435h2v1h-2zM126 436h2v1h-2zM149 436h1v1h-1zM258 436h1v1h-1zM351 436h2v1h-2zM128 437h2v1h-2zM149 437h1v1h-1zM258 437h1v1h-1zM349 437h2v1h-2zM130 438h2v1h-2zM148 438h1v1h-1zM258 438h1v1h-1zM347 438h2v1h-2zM132 439h2v1h-2zM148 439h1v1h-1zM258 439h1v1h-1zM345 439h2v1h-2zM134 440h2v1h-2zM147 440h1v1h-1zM258 440h1v1h-1zM343 440h2v1h-2zM136 441h2v1h-2zM147 441h1v1h-1zM258 441h1v1h-1zM341 441h2v1h-2zM138 442h2v1h-2zM146 442h1v1h-1zM258 442h1v1h-1zM339 442h2v1h-2zM140 443h2v1h-2zM146 443h1v1h-1zM258 443h1v1h-1zM337 443h2v1h-2zM142 444h2v1h-2zM145 444h1v1h-1zM258 444h1v1h-1zM335 444h2v1h-2zM144 445h2v1h-2zM258 445h1v1h-1zM333 445h2v1h-2zM146 446h3v1h-3zM258 446h1v1h-1zM330 446h3v1h-3zM149 447h2v1h-2zM258 447h1v1h-1zM328 447h2v1h-2zM151 448h2v1h-2zM259 448h1v1h-1zM326 448h2v1h-2zM153 449h3v1h-3zM259 449h1v1h-1zM323 449h3v1h-3zM156 450h2v1h-2zM259 450h1v1h-1zM320 450h3v1h-3zM158 451h3v1h-3zM259 451h1v1h-1zM318 451h2v1h-2zM161 452h3v1h-3zM259 452h1v1h-1zM315 452h3v1h-3zM164 453h2v1h-2zM259 453h1v1h-1zM313 453h2v1h-2zM166 454h2v1h-2zM259 454h1v1h-1zM311 454h2v1h-2zM168 455h3v1h-3zM259 455h1v1h-1zM307 455h4v1h-4zM171 456h4v1h-4zM259 456h1v1h-1zM303 456h4v1h-4zM175 457h4v1h-4zM259 457h1v1h-1zM300 457h3v1h-3zM179 458h4v1h-4zM259 458h1v1h-1zM296 458h4v1h-4zM183 459h3v1h-3zM260 459h1v1h-1zM292 459h4v1h-4zM186 460h4v1h-4zM260 460h1v1h-1zM288 460h4v1h-4zM190 461h4v1h-4zM260 461h1v1h-1zM284 461h4v1h-4zM194 462h4v1h-4zM260 462h1v1h-1zM280 462h4v1h-4zM198 463h6v1h-6zM260 463h1v1h-1zM274 463h6v1h-6zM204 464h8v1h-8zM260 464h1v1h-1zM266 464h8v1h-8zM212 465h16v1h-16zM250 465h16v1h-16zM228 466h22v1h-22z"/>
<path fill="#00ffff" d="M269 129h2v1h-2zM263 130h1v1h-1zM265 130h4v1h-4zM274 130h1v1h-1zM276 130h1v1h-1zM259 131h1v1h-1zM261 131h4v1h-4zM268 131h3v1h-3zM272 131h1v1h-1zM255 132h6v1h-6zM262 132h3v1h-3zM266 132h1v1h-1zM268 132h1v1h-1zM247 133h1v1h-1zM251 133h5v1h-5zM257 133h2v1h-2zM260 133h1v1h-1zM262 133h1v1h-1zM264 133h1v1h-1zM243 134h1v1h-1zM247 134h6v1h-6zM254 134h1v1h-1zM256 134h1v1h-1zM258 134h1v1h-1zM235 135h1v1h-1zM239 135h1v1h-1zM242 135h7v1h-7zM250 135h1v1h-1zM252 135h1v1h-1zM254 135h1v1h-1zM231 136h1v1h-1zM235 136h2v1h-2zM239 136h4v1h-4zM244 136h1v1h-1zM246 136h1v1h-1zM248 136h1v1h-1zM227 137h1v1h-1zM230 137h2v1h-2zM233 137h6v1h-6zM242 137h1v1h-1zM244 137h1v1h-1zM219 138h1v1h-1zM223 138h2v1h-2zM227 138h2v1h-2zM230 138h4v1h-4zM236 138h1v1h-1zM238 138h1v1h-1zM240 138h1v1h-1zM215 139h1v1h-1zM218 139h2v1h-2zM221 139h1v1h-1zM224 139h1v1h-1zM226 139h4v1h-4zM232 139h1v1h-1zM234 139h1v1h-1zM207 140h1v1h-1zM211 140h2v1h-2zM215 140h1v1h-1zM218 140h1v1h-1zM220 140h6v1h-6zM228 140h1v1h-1zM230 140h1v1h-1zM203 141h1v1h-1zM206 141h2v1h-2zM209 141h1v1h-1zM211 141h2v1h-2zM214 141h1v1h-1zM216 141h5v1h-5zM222 141h1v1h-1zM224 141h1v1h-1zM226 141h1v1h-1zM199 142h2v1h-2zM203 142h1v1h-1zM206 142h1v1h-1zM208 142h1v1h-1zM210 142h1v1h-1zM213 142h4v1h-4zM218 142h1v1h-1zM220 142h1v1h-1zM178 143h1v1h-1zM191 143h1v1h-1zM194 143h2v1h-2zM197 143h1v1h-1zM199 143h2v1h-2zM202 143h1v1h-1zM204 143h1v1h-1zM208 143h5v1h-5zM214 143h1v1h-1zM216 143h1v1h-1zM187 144h2v1h-2zM191 144h1v1h-1zM194 144h3v1h-3zM198 144h1v1h-1zM204 144h5v1h-5zM210 144h1v1h-1zM179 145h1v1h-1zM182 145h2v1h-2zM185 145h1v1h-1zM187 145h2v1h-2zM190 145h3v1h-3zM200 145h5v1h-5zM206 145h1v1h-1zM175 146h3v1h-3zM179 146h1v1h-1zM183 146h2v1h-2zM186 146h1v1h-1zM195 146h6v1h-6zM202 146h1v1h-1zM171 147h1v1h-1zM173 147h1v1h-1zM178 147h3v1h-3zM182 147h1v1h-1zM191 147h4v1h-4zM196 147h1v1h-1zM171 148h2v1h-2zM174 148h3v1h-3zM186 148h5v1h-5zM192 148h1v1h-1zM169 149h2v1h-2zM175 149h1v1h-1zM182 149h5v1h-5zM188 149h1v1h-1zM178 150h5v1h-5zM168 151h1v1h-1zM173 151h6v1h-6zM167 152h1v1h-1zM169 152h4v1h-4zM174 152h1v1h-1zM165 153h4v1h-4zM162 154h3v1h-3zM165 155h2v1h-2zM172 155h1v1h-1zM166 157h1v1h-1zM164 158h1v1h-1zM171 158h1v1h-1zM165 159h1v1h-1zM163 161h2v1h-2zM169 161h1v1h-1zM163 163h1v1h-1zM161 164h1v1h-1zM168 164h1v1h-1zM162 165h1v1h-1zM160 167h2v1h-2zM166 167h1v1h-1zM160 169h1v1h-1zM159 170h1v1h-1zM165 170h1v1h-1zM159 171h1v1h-1zM158 173h1v1h-1zM163 173h1v1h-1zM158 175h1v1h-1zM156 176h1v1h-1zM162 176h1v1h-1zM157 177h1v1h-1zM155 179h2v1h-2zM160 179h1v1h-1zM155 181h1v1h-1zM154 182h1v1h-1zM159 182h1v1h-1zM154 183h1v1h-1zM152 185h2v1h-2zM157 185h1v1h-1zM152 187h1v1h-1zM151 188h1v1h-1zM156 188h1v1h-1zM151 189h1v1h-1zM150 191h1v1h-1zM154 191h1v1h-1zM150 193h1v1h-1zM148 194h1v1h-1zM153 194h1v1h-1zM149 195h1v1h-1zM147 197h2v1h-2zM151 197h1v1h-1zM147 199h1v1h-1zM146 200h1v1h-1zM149 200h1v1h-1zM145 203h1v1h-1zM148 203h1v1h-1zM144 205h1v1h-1zM143 206h1v1h-1zM146 206h1v1h-1zM143 207h1v1h-1zM142 209h1v1h-1zM145 209h1v1h-1zM141 211h1v1h-1zM141 212h1v1h-1zM143 212h1v1h-1zM141 213h1v1h-1zM139 215h2v1h-2zM142 215h1v1h-1zM139 217h1v1h-1zM138 218h1v1h-1zM140 218h1v1h-1zM138 219h1v1h-1zM126 220h1v1h-1zM137 221h1v1h-1zM139 221h1v1h-1zM127 222h1v1h-1zM136 223h1v1h-1zM128 224h1v1h-1zM135 224h1v1h-1zM137 224h1v1h-1zM135 225h1v1h-1zM128 226h1v1h-1zM134 227h1v1h-1zM136 227h1v1h-1zM129 228h1v1h-1zM133 229h1v1h-1zM130 230h1v1h-1zM133 230h2v1h-2zM133 231h1v1h-1zM131 232h1v1h-1zM132 233h2v1h-2zM131 234h1v1h-1zM131 235h1v1h-1zM130 236h3v1h-3zM130 237h1v1h-1zM133 238h1v1h-1zM129 239h2v1h-2zM134 240h1v1h-1zM128 241h1v1h-1zM128 242h1v1h-1zM135 242h1v1h-1zM127 243h1v1h-1zM135 244h1v1h-1zM126 245h2v1h-2zM136 246h1v1h-1zM125 247h1v1h-1zM125 248h1v1h-1zM137 248h1v1h-1zM138 250h1v1h-1zM139 252h1v1h-1zM139 254h1v1h-1zM140 256h1v1h-1zM141 258h1v1h-1zM142 260h1v1h-1zM142 262h1v1h-1zM143 264h1v1h-1zM144 266h1v1h-1zM145 268h1v1h-1zM146 270h1v1h-1zM146 272h1v1h-1zM147 274h1v1h-1zM148 276h1v1h-1zM149 278h1v1h-1zM149 280h1v1h-1zM150 282h1v1h-1zM151 284h1v1h-1zM152 286h1v1h-1zM153 288h1v1h-1zM153 290h1v1h-1zM154 292h1v1h-1zM155 294h1v1h-1zM156 296h1v1h-1zM156 298h1v1h-1zM157 300h1v1h-1zM158 302h1v1h-1zM159 304h1v1h-1zM160 306h1v1h-1zM160 308h1v1h-1zM161 310h1v1h-1zM162 312h1v1h-1zM163 314h1v1h-1zM164 316h1v1h-1zM164 318h1v1h-1zM165 320h1v1h-1zM166 322h1v1h-1zM167 324h1v1h-1zM167 326h1v1h-1zM168 328h1v1h-1z"/>
<path fill="#00ff00" d="M269 24h1v1h-1zM275 24h1v1h-1zM281 24h1v1h-1zM268 25h2v1h-2zM274 25h2v1h-2zM280 25h1v1h-1zM268 26h1v1h-1zM270 26h1v1h-1zM274 26h1v1h-1zM276 26h1v1h-1zM280 26h1v1h-1zM267 27h1v1h-1zM270 27h1v1h-1zM273 27h1v1h-1zM276 27h1v1h-1zM279 27h1v1h-1zM266 28h1v1h-1zM270 28h1v1h-1zM272 28h1v1h-1zM276 28h1v1h-1zM278 28h1v1h-1zM266 29h1v1h-1zM271 29h2v1h-2zM277 29h2v1h-2zM265 30h1v1h-1zM271 30h1v1h-1zM277 30h1v1h-1zM269 34h1v1h-1zM275 34h1v1h-1zM281 34h1v1h-1zM297 34h1v1h-1zM303 34h1v1h-1zM268 35h2v1h-2zM274 35h2v1h-2zM280 35h1v1h-1zM298 35h1v1h-1zM302 35h1v1h-1zM268 36h1v1h-1zM270 36h1v1h-1zM274 36h1v1h-1zM276 36h1v1h-1zM280 36h1v1h-1zM298 36h1v1h-1zM300 36h1v1h-1zM302 36h1v1h-1zM267 37h1v1h-1zM270 37h1v1h-1zM273 37h1v1h-1zM276 37h1v1h-1zM279 37h1v1h-1zM298 37h5v1h-5zM266 38h1v1h-1zM270 38h1v1h-1zM272 38h1v1h-1zM276 38h1v1h-1zM278 38h1v1h-1zM298 38h1v1h-1zM300 38h1v1h-1zM302 38h1v1h-1zM266 39h1v1h-1zM271 39h2v1h-2zM277 39h2v1h-2zM297 39h1v1h-1zM300 39h1v1h-1zM303 39h1v1h-1zM265 40h1v1h-1zM271 40h1v1h-1zM277 40h1v1h-1zM299 40h3v1h-3zM299 41h1v1h-1zM301 41h1v1h-1zM300 42h1v1h-1zM189 74h1v1h-1zM195 74h1v1h-1zM190 75h1v1h-1zM194 75h1v1h-1zM190 76h1v1h-1zM192 76h1v1h-1zM194 76h1v1h-1zM190 77h5v1h-5zM190 78h1v1h-1zM192 78h1v1h-1zM194 78h1v1h-1zM189 79h1v1h-1zM192 79h1v1h-1zM195 79h1v1h-1zM191 80h3v1h-3zM191 81h1v1h-1zM193 81h1v1h-1zM192 82h1v1h-1zM162 84h1v1h-1zM170 84h1v1h-1zM161 85h2v1h-2zM169 85h2v1h-2zM160 86h1v1h-1zM162 86h1v1h-1zM168 86h1v1h-1zM170 86h1v1h-1zM162 87h1v1h-1zM170 87h1v1h-1zM162 88h1v1h-1zM170 88h1v1h-1zM162 89h1v1h-1zM170 89h1v1h-1zM162 90h1v1h-1zM170 90h1v1h-1zM162 91h1v1h-1zM170 91h1v1h-1zM160 92h5v1h-5zM168 92h5v1h-5zM174 101h1v1h-1zM182 101h1v1h-1zM175 102h1v1h-1zM181 102h1v1h-1zM176 103h5v1h-5zM175 104h1v1h-1zM181 104h1v1h-1zM174 105h1v1h-1zM182 105h1v1h-1zM174 106h1v1h-1zM182 106h1v1h-1zM174 107h1v1h-1zM182 107h1v1h-1zM174 108h1v1h-1zM182 108h1v1h-1zM174 109h1v1h-1zM182 109h1v1h-1zM175 110h1v1h-1zM181 110h1v1h-1zM176 111h5v1h-5zM178 112h1v1h-1zM178 113h1v1h-1zM178 114h1v1h-1zM174 115h9v1h-9zM178 116h1v1h-1zM178 117h1v1h-1zM273 132h1v1h-1zM178 135h1v1h-1zM269 135h1v1h-1zM177 136h3v1h-3zM178 137h1v1h-1zM265 139h1v1h-1zM261 142h1v1h-1zM257 145h1v1h-1zM253 148h1v1h-1zM249 151h1v1h-1zM245 154h1v1h-1zM241 157h1v1h-1zM627 157h3v1h-3zM625 158h2v1h-2zM630 158h2v1h-2zM624 159h1v1h-1zM629 159h1v1h-1zM632 159h1v1h-1zM237 160h1v1h-1zM625 160h2v1h-2zM629 160h1v1h-1zM632 160h1v1h-1zM624 161h1v1h-1zM627 161h1v1h-1zM630 161h2v1h-2zM624 162h1v1h-1zM627 162h1v1h-1zM632 162h1v1h-1zM625 163h2v1h-2zM630 163h2v1h-2zM233 164h1v1h-1zM627 164h3v1h-3zM229 167h1v1h-1zM225 170h1v1h-1zM221 173h1v1h-1zM217 176h1v1h-1zM213 179h1v1h-1zM209 182h1v1h-1zM205 185h1v1h-1zM201 189h1v1h-1zM197 192h1v1h-1zM193 195h1v1h-1zM624 196h1v1h-1zM626 196h1v1h-1zM628 196h1v1h-1zM625 197h1v1h-1zM627 197h1v1h-1zM629 197h1v1h-1zM189 198h1v1h-1zM400 198h5v1h-5zM625 198h1v1h-1zM627 198h1v1h-1zM629 198h1v1h-1zM404 199h1v1h-1zM625 199h1v1h-1zM627 199h1v1h-1zM629 199h1v1h-1zM404 200h1v1h-1zM625 200h1v1h-1zM627 200h1v1h-1zM629 200h1v1h-1zM185 201h1v1h-1zM403 201h1v1h-1zM625 201h1v1h-1zM627 201h1v1h-1zM629 201h1v1h-1zM402 202h1v1h-1zM625 202h1v1h-1zM627 202h1v1h-1zM629 202h1v1h-1zM632 202h1v1h-1zM401 203h1v1h-1zM625 203h1v1h-1zM627 203h1v1h-1zM629 203h1v1h-1zM632 203h1v1h-1zM181 204h1v1h-1zM400 204h1v1h-1zM630 204h2v1h-2zM400 205h1v1h-1zM400 206h1v1h-1zM177 207h1v1h-1zM173 210h1v1h-1zM169 214h1v1h-1zM165 217h1v1h-1zM161 220h1v1h-1zM157 223h1v1h-1zM153 226h1v1h-1zM149 229h1v1h-1zM145 232h1v1h-1zM141 235h1v1h-1zM624 236h1v1h-1zM632 236h1v1h-1zM625 237h1v1h-1zM631 237h1v1h-1zM626 238h1v1h-1zM630 238h1v1h-1zM137 239h1v1h-1zM626 239h1v1h-1zM630 239h1v1h-1zM624 240h9v1h-9zM626 241h1v1h-1zM630 241h1v1h-1zM133 242h1v1h-1zM626 242h1v1h-1zM630 242h1v1h-1zM90 243h1v1h-1zM102 243h1v1h-1zM625 243h1v1h-1zM631 243h1v1h-1zM91 244h1v1h-1zM101 244h1v1h-1zM624 244h1v1h-1zM632 244h1v1h-1zM92 245h1v1h-1zM100 245h1v1h-1zM129 245h1v1h-1zM92 246h1v1h-1zM96 246h1v1h-1zM100 246h1v1h-1zM92 247h1v1h-1zM96 247h1v1h-1zM100 247h1v1h-1zM92 248h1v1h-1zM96 248h1v1h-1zM100 248h1v1h-1zM120 248h1v1h-1zM92 249h9v1h-9zM119 249h3v1h-3zM92 250h1v1h-1zM96 250h1v1h-1zM100 250h1v1h-1zM120 250h1v1h-1zM92 251h1v1h-1zM96 251h1v1h-1zM100 251h1v1h-1zM91 252h1v1h-1zM96 252h1v1h-1zM101 252h1v1h-1zM90 253h1v1h-1zM96 253h1v1h-1zM102 253h1v1h-1zM96 254h1v1h-1zM95 255h3v1h-3zM94 256h1v1h-1zM98 256h1v1h-1zM94 257h1v1h-1zM98 257h1v1h-1zM94 258h1v1h-1zM98 258h1v1h-1zM95 259h3v1h-3zM33 282h1v1h-1zM37 282h1v1h-1zM34 283h3v1h-3zM33 284h1v1h-1zM37 284h1v1h-1zM33 285h1v1h-1zM37 285h1v1h-1zM33 286h1v1h-1zM37 286h1v1h-1zM626 286h1v1h-1zM630 286h1v1h-1zM34 287h3v1h-3zM627 287h3v1h-3zM35 288h1v1h-1zM626 288h1v1h-1zM630 288h1v1h-1zM33 289h5v1h-5zM626 289h1v1h-1zM630 289h1v1h-1zM35 290h1v1h-1zM626 290h1v1h-1zM630 290h1v1h-1zM627 291h3v1h-3zM628 292h1v1h-1zM626 293h5v1h-5zM628 294h1v1h-1zM37 304h1v1h-1zM51 304h1v1h-1zM38 305h1v1h-1zM50 305h1v1h-1zM39 306h11v1h-11zM41 307h1v1h-1zM47 307h1v1h-1zM41 308h1v1h-1zM47 308h1v1h-1zM41 309h1v1h-1zM47 309h1v1h-1zM41 310h1v1h-1zM47 310h1v1h-1zM41 311h1v1h-1zM47 311h1v1h-1zM41 312h1v1h-1zM47 312h1v1h-1zM41 313h1v1h-1zM47 313h1v1h-1zM41 314h1v1h-1zM47 314h1v1h-1zM41 315h1v1h-1zM47 315h1v1h-1zM41 316h1v1h-1zM47 316h1v1h-1zM41 317h1v1h-1zM47 317h1v1h-1zM39 318h11v1h-11zM38 319h1v1h-1zM50 319h1v1h-1zM37 320h1v1h-1zM51 320h1v1h-1zM376 329h1v1h-1zM380 329h1v1h-1zM377 330h3v1h-3zM376 331h1v1h-1zM380 331h1v1h-1zM376 332h1v1h-1zM380 332h1v1h-1zM376 333h1v1h-1zM380 333h1v1h-1zM377 334h3v1h-3zM378 335h1v1h-1zM376 336h5v1h-5zM625 336h1v1h-1zM631 336h1v1h-1zM378 337h1v1h-1zM626 337h1v1h-1zM630 337h1v1h-1zM626 338h1v1h-1zM628 338h1v1h-1zM630 338h1v1h-1zM626 339h5v1h-5zM626 340h1v1h-1zM628 340h1v1h-1zM630 340h1v1h-1zM625 341h1v1h-1zM628 341h1v1h-1zM631 341h1v1h-1zM627 342h3v1h-3zM627 343h1v1h-1zM629 343h1v1h-1zM628 344h1v1h-1zM399 368h5v1h-5zM136 369h1v1h-1zM140 369h1v1h-1zM398 369h1v1h-1zM404 369h1v1h-1zM137 370h3v1h-3zM397 370h1v1h-1zM405 370h1v1h-1zM136 371h1v1h-1zM140 371h1v1h-1zM397 371h1v1h-1zM405 371h1v1h-1zM136 372h1v1h-1zM140 372h1v1h-1zM397 372h1v1h-1zM405 372h1v1h-1zM136 373h1v1h-1zM140 373h1v1h-1zM398 373h1v1h-1zM404 373h1v1h-1zM137 374h3v1h-3zM393 374h7v1h-7zM403 374h7v1h-7zM138 375h1v1h-1zM136 376h5v1h-5zM138 377h1v1h-1zM151 378h3v1h-3zM393 378h17v1h-17zM150 379h1v1h-1zM154 379h1v1h-1zM154 380h1v1h-1zM154 381h1v1h-1zM152 382h2v1h-2zM154 383h1v1h-1zM154 384h1v1h-1zM150 385h1v1h-1zM154 385h1v1h-1zM151 386h3v1h-3zM284 439h1v1h-1zM288 439h1v1h-1zM285 440h3v1h-3zM284 441h1v1h-1zM288 441h1v1h-1zM284 442h1v1h-1zM288 442h1v1h-1zM284 443h1v1h-1zM288 443h1v1h-1zM285 444h3v1h-3zM286 445h1v1h-1zM284 446h5v1h-5zM286 447h1v1h-1z"/>
<path fill="#808080" d="M224 49h1v1h-1zM228 49h1v1h-1zM231 49h1v1h-1zM234 49h1v1h-1zM240 49h1v1h-1zM243 49h1v1h-1zM247 49h1v1h-1zM250 49h1v1h-1zM218 50h1v1h-1zM224 50h1v1h-1zM228 50h1v1h-1zM231 50h1v1h-1zM234 50h1v1h-1zM240 50h1v1h-1zM243 50h1v1h-1zM247 50h1v1h-1zM250 50h1v1h-1zM257 50h1v1h-1zM260 50h1v1h-1zM211 51h1v1h-1zM214 51h1v1h-1zM218 51h1v1h-1zM224 51h1v1h-1zM228 51h1v1h-1zM231 51h1v1h-1zM234 51h1v1h-1zM240 51h1v1h-1zM243 51h1v1h-1zM247 51h1v1h-1zM250 51h1v1h-1zM257 51h1v1h-1zM260 51h1v1h-1zM263 51h1v1h-1zM267 51h1v1h-1zM208 52h1v1h-1zM211 52h1v1h-1zM214 52h1v1h-1zM218 52h1v1h-1zM224 52h1v1h-1zM228 52h1v1h-1zM231 52h1v1h-1zM234 52h1v1h-1zM240 52h1v1h-1zM243 52h1v1h-1zM247 52h1v1h-1zM250 52h1v1h-1zM257 52h1v1h-1zM260 52h1v1h-1zM263 52h1v1h-1zM267 52h1v1h-1zM273 52h1v1h-1zM201 53h1v1h-1zM208 53h1v1h-1zM212 53h1v1h-1zM215 53h1v1h-1zM218 53h1v1h-1zM224 53h1v1h-1zM228 53h1v1h-1zM231 53h1v1h-1zM234 53h1v1h-1zM240 53h1v1h-1zM243 53h1v1h-1zM247 53h1v1h-1zM250 53h1v1h-1zM257 53h1v1h-1zM260 53h1v1h-1zM263 53h1v1h-1zM266 53h1v1h-1zM273 53h1v1h-1zM277 53h1v1h-1zM195 54h1v1h-1zM198 54h1v1h-1zM201 54h1v1h-1zM209 54h1v1h-1zM212 54h1v1h-1zM215 54h1v1h-1zM218 54h1v1h-1zM224 54h1v1h-1zM228 54h1v1h-1zM232 54h1v1h-1zM235 54h1v1h-1zM240 54h1v1h-1zM243 54h1v1h-1zM246 54h1v1h-1zM250 54h1v1h-1zM257 54h1v1h-1zM260 54h1v1h-1zM263 54h1v1h-1zM266 54h1v1h-1zM272 54h1v1h-1zM276 54h1v1h-1zM280 54h1v1h-1zM283 54h1v1h-1zM192 55h1v1h-1zM195 55h1v1h-1zM198 55h1v1h-1zM202 55h1v1h-1zM209 55h1v1h-1zM212 55h1v1h-1zM215 55h1v1h-1zM219 55h1v1h-1zM225 55h1v1h-1zM228 55h1v1h-1zM232 55h1v1h-1zM235 55h1v1h-1zM240 55h1v1h-1zM243 55h1v1h-1zM246 55h1v1h-1zM249 55h1v1h-1zM256 55h1v1h-1zM259 55h1v1h-1zM263 55h1v1h-1zM266 55h1v1h-1zM272 55h1v1h-1zM276 55h1v1h-1zM279 55h1v1h-1zM283 55h1v1h-1zM192 56h1v1h-1zM195 56h1v1h-1zM199 56h1v1h-1zM202 56h1v1h-1zM209 56h1v1h-1zM212 56h1v1h-1zM215 56h1v1h-1zM219 56h1v1h-1zM225 56h1v1h-1zM228 56h1v1h-1zM232 56h1v1h-1zM235 56h1v1h-1zM240 56h1v1h-1zM243 56h1v1h-1zM246 56h1v1h-1zM249 56h1v1h-1zM256 56h1v1h-1zM259 56h1v1h-1zM262 56h1v1h-1zM266 56h1v1h-1zM272 56h1v1h-1zM276 56h1v1h-1zM279 56h1v1h-1zM282 56h1v1h-1zM289 56h1v1h-1zM182 57h1v1h-1zM185 57h1v1h-1zM193 57h1v1h-1zM196 57h1v1h-1zM199 57h1v1h-1zM202 57h1v1h-1zM209 57h1v1h-1zM212 57h1v1h-1zM215 57h1v1h-1zM219 57h1v1h-1zM225 57h1v1h-1zM228 57h1v1h-1zM232 57h1v1h-1zM235 57h1v1h-1zM240 57h1v1h-1zM243 57h1v1h-1zM246 57h1v1h-1zM249 57h1v1h-1zM256 57h1v1h-1zM259 57h1v1h-1zM262 57h1v1h-1zM266 57h1v1h-1zM272 57h1v1h-1zM276 57h1v1h-1zM279 57h1v1h-1zM282 57h1v1h-1zM289 57h1v1h-1zM293 57h1v1h-1zM296 57h1v1h-1zM179 58h1v1h-1zM182 58h1v1h-1zM186 58h1v1h-1zM193 58h1v1h-1zM196 58h1v1h-1zM199 58h1v1h-1zM202 58h1v1h-1zM209 58h1v1h-1zM212 58h1v1h-1zM215 58h1v1h-1zM219 58h1v1h-1zM225 58h1v1h-1zM228 58h1v1h-1zM232 58h1v1h-1zM235 58h1v1h-1zM240 58h1v1h-1zM243 58h1v1h-1zM246 58h1v1h-1zM249 58h1v1h-1zM256 58h1v1h-1zM259 58h1v1h-1zM262 58h1v1h-1zM266 58h1v1h-1zM272 58h1v1h-1zM275 58h1v1h-1zM278 58h1v1h-1zM282 58h1v1h-1zM288 58h1v1h-1zM292 58h1v1h-1zM296 58h1v1h-1zM179 59h1v1h-1zM183 59h1v1h-1zM186 59h1v1h-1zM193 59h1v1h-1zM196 59h1v1h-1zM199 59h1v1h-1zM202 59h1v1h-1zM209 59h1v1h-1zM213 59h1v1h-1zM216 59h1v1h-1zM219 59h1v1h-1zM225 59h1v1h-1zM228 59h1v1h-1zM232 59h1v1h-1zM235 59h1v1h-1zM240 59h1v1h-1zM243 59h1v1h-1zM246 59h1v1h-1zM249 59h1v1h-1zM256 59h1v1h-1zM259 59h1v1h-1zM262 59h1v1h-1zM265 59h1v1h-1zM272 59h1v1h-1zM275 59h1v1h-1zM278 59h1v1h-1zM281 59h1v1h-1zM288 59h1v1h-1zM292 59h1v1h-1zM295 59h1v1h-1zM299 59h1v1h-1zM176 60h1v1h-1zM180 60h1v1h-1zM183 60h1v1h-1zM186 60h1v1h-1zM193 60h1v1h-1zM196 60h1v1h-1zM199 60h1v1h-1zM202 60h1v1h-1zM210 60h1v1h-1zM213 60h1v1h-1zM216 60h1v1h-1zM219 60h1v1h-1zM256 60h1v1h-1zM259 60h1v1h-1zM262 60h1v1h-1zM265 60h1v1h-1zM271 60h1v1h-1zM275 60h1v1h-1zM278 60h1v1h-1zM281 60h1v1h-1zM288 60h1v1h-1zM292 60h1v1h-1zM295 60h1v1h-1zM298 60h1v1h-1zM177 61h1v1h-1zM180 61h1v1h-1zM183 61h1v1h-1zM186 61h1v1h-1zM193 61h1v1h-1zM196 61h1v1h-1zM200 61h1v1h-1zM203 61h1v1h-1zM210 61h1v1h-1zM213 61h1v1h-1zM216 61h1v1h-1zM262 61h1v1h-1zM265 61h1v1h-1zM271 61h1v1h-1zM275 61h1v1h-1zM278 61h1v1h-1zM281 61h1v1h-1zM288 61h1v1h-1zM292 61h1v1h-1zM295 61h1v1h-1zM298 61h1v1h-1zM305 61h1v1h-1zM177 62h1v1h-1zM180 62h1v1h-1zM183 62h1v1h-1zM187 62h1v1h-1zM193 62h1v1h-1zM197 62h1v1h-1zM200 62h1v1h-1zM203 62h1v1h-1zM210 62h1v1h-1zM271 62h1v1h-1zM274 62h1v1h-1zM277 62h1v1h-1zM281 62h1v1h-1zM288 62h1v1h-1zM291 62h1v1h-1zM295 62h1v1h-1zM298 62h1v1h-1zM304 62h1v1h-1zM308 62h1v1h-1zM169 63h1v1h-1zM177 63h1v1h-1zM180 63h1v1h-1zM184 63h1v1h-1zM187 63h1v1h-1zM194 63h1v1h-1zM197 63h1v1h-1zM200 63h1v1h-1zM203 63h1v1h-1zM274 63h1v1h-1zM277 63h1v1h-1zM280 63h1v1h-1zM288 63h1v1h-1zM291 63h1v1h-1zM294 63h1v1h-1zM297 63h1v1h-1zM304 63h1v1h-1zM308 63h1v1h-1zM166 64h1v1h-1zM170 64h1v1h-1zM177 64h1v1h-1zM181 64h1v1h-1zM184 64h1v1h-1zM187 64h1v1h-1zM194 64h1v1h-1zM197 64h1v1h-1zM280 64h1v1h-1zM287 64h1v1h-1zM291 64h1v1h-1zM294 64h1v1h-1zM297 64h1v1h-1zM304 64h1v1h-1zM307 64h1v1h-1zM311 64h1v1h-1zM315 64h1v1h-1zM164 65h1v1h-1zM167 65h1v1h-1zM170 65h1v1h-1zM178 65h1v1h-1zM181 65h1v1h-1zM184 65h1v1h-1zM187 65h1v1h-1zM194 65h1v1h-1zM287 65h1v1h-1zM291 65h1v1h-1zM294 65h1v1h-1zM297 65h1v1h-1zM304 65h1v1h-1zM307 65h1v1h-1zM311 65h1v1h-1zM314 65h1v1h-1zM164 66h1v1h-1zM167 66h1v1h-1zM171 66h1v1h-1zM178 66h1v1h-1zM181 66h1v1h-1zM184 66h1v1h-1zM188 66h1v1h-1zM287 66h1v1h-1zM290 66h1v1h-1zM294 66h1v1h-1zM297 66h1v1h-1zM303 66h1v1h-1zM306 66h1v1h-1zM310 66h1v1h-1zM314 66h1v1h-1zM161 67h1v1h-1zM165 67h1v1h-1zM168 67h1v1h-1zM171 67h1v1h-1zM178 67h1v1h-1zM181 67h1v1h-1zM185 67h1v1h-1zM188 67h1v1h-1zM290 67h1v1h-1zM293 67h1v1h-1zM296 67h1v1h-1zM303 67h1v1h-1zM306 67h1v1h-1zM310 67h1v1h-1zM313 67h1v1h-1zM161 68h1v1h-1zM165 68h1v1h-1zM168 68h1v1h-1zM171 68h1v1h-1zM178 68h1v1h-1zM182 68h1v1h-1zM185 68h1v1h-1zM293 68h1v1h-1zM296 68h1v1h-1zM303 68h1v1h-1zM306 68h1v1h-1zM309 68h1v1h-1zM313 68h1v1h-1zM320 68h1v1h-1zM155 69h1v1h-1zM162 69h1v1h-1zM166 69h1v1h-1zM168 69h1v1h-1zM172 69h1v1h-1zM179 69h1v1h-1zM182 69h1v1h-1zM303 69h1v1h-1zM305 69h1v1h-1zM309 69h1v1h-1zM312 69h1v1h-1zM320 69h1v1h-1zM323 69h1v1h-1zM151 70h1v1h-1zM155 70h1v1h-1zM162 70h1v1h-1zM166 70h1v1h-1zM169 70h1v1h-1zM172 70h1v1h-1zM179 70h1v1h-1zM302 70h1v1h-1zM305 70h1v1h-1zM308 70h1v1h-1zM312 70h1v1h-1zM319 70h1v1h-1zM323 70h1v1h-1zM152 71h1v1h-1zM156 71h1v1h-1zM163 71h1v1h-1zM167 71h1v1h-1zM169 71h1v1h-1zM173 71h1v1h-1zM302 71h1v1h-1zM304 71h1v1h-1zM308 71h1v1h-1zM311 71h1v1h-1zM319 71h1v1h-1zM322 71h1v1h-1zM326 71h1v1h-1zM148 72h1v1h-1zM152 72h1v1h-1zM156 72h1v1h-1zM163 72h1v1h-1zM167 72h1v1h-1zM170 72h1v1h-1zM173 72h1v1h-1zM307 72h1v1h-1zM311 72h1v1h-1zM318 72h1v1h-1zM322 72h1v1h-1zM326 72h1v1h-1zM329 72h1v1h-1zM149 73h1v1h-1zM153 73h1v1h-1zM157 73h1v1h-1zM164 73h1v1h-1zM168 73h1v1h-1zM170 73h1v1h-1zM307 73h1v1h-1zM310 73h1v1h-1zM318 73h1v1h-1zM321 73h1v1h-1zM325 73h1v1h-1zM329 73h1v1h-1zM146 74h1v1h-1zM149 74h1v1h-1zM153 74h1v1h-1zM157 74h1v1h-1zM164 74h1v1h-1zM168 74h1v1h-1zM310 74h1v1h-1zM317 74h1v1h-1zM321 74h1v1h-1zM325 74h1v1h-1zM328 74h1v1h-1zM146 75h1v1h-1zM150 75h1v1h-1zM154 75h1v1h-1zM158 75h1v1h-1zM165 75h1v1h-1zM317 75h1v1h-1zM320 75h1v1h-1zM324 75h1v1h-1zM328 75h1v1h-1zM147 76h1v1h-1zM150 76h1v1h-1zM154 76h1v1h-1zM158 76h1v1h-1zM316 76h1v1h-1zM320 76h1v1h-1zM324 76h1v1h-1zM327 76h1v1h-1zM334 76h1v1h-1zM140 77h1v1h-1zM147 77h1v1h-1zM151 77h1v1h-1zM155 77h1v1h-1zM159 77h1v1h-1zM316 77h1v1h-1zM319 77h1v1h-1zM323 77h1v1h-1zM326 77h1v1h-1zM334 77h1v1h-1zM337 77h1v1h-1zM141 78h1v1h-1zM148 78h1v1h-1zM151 78h1v1h-1zM155 78h1v1h-1zM159 78h1v1h-1zM319 78h1v1h-1zM323 78h1v1h-1zM326 78h1v1h-1zM333 78h1v1h-1zM337 78h1v1h-1zM138 79h1v1h-1zM141 79h1v1h-1zM149 79h1v1h-1zM152 79h1v1h-1zM156 79h1v1h-1zM322 79h1v1h-1zM325 79h1v1h-1zM333 79h1v1h-1zM336 79h1v1h-1zM340 79h1v1h-1zM138 80h1v1h-1zM142 80h1v1h-1zM149 80h1v1h-1zM152 80h1v1h-1zM322 80h1v1h-1zM325 80h1v1h-1zM332 80h1v1h-1zM336 80h1v1h-1zM340 80h1v1h-1zM135 81h1v1h-1zM139 81h1v1h-1zM142 81h1v1h-1zM150 81h1v1h-1zM153 81h1v1h-1zM324 81h1v1h-1zM332 81h1v1h-1zM335 81h1v1h-1zM339 81h1v1h-1zM343 81h1v1h-1zM135 82h1v1h-1zM140 82h1v1h-1zM143 82h1v1h-1zM150 82h1v1h-1zM331 82h1v1h-1zM335 82h1v1h-1zM338 82h1v1h-1zM343 82h1v1h-1zM132 83h1v1h-1zM136 83h1v1h-1zM140 83h1v1h-1zM143 83h1v1h-1zM331 83h1v1h-1zM334 83h1v1h-1zM338 83h1v1h-1zM342 83h1v1h-1zM132 84h1v1h-1zM137 84h1v1h-1zM141 84h1v1h-1zM144 84h1v1h-1zM330 84h1v1h-1zM334 84h1v1h-1zM337 84h1v1h-1zM341 84h1v1h-1zM349 84h1v1h-1zM133 85h1v1h-1zM137 85h1v1h-1zM142 85h1v1h-1zM144 85h1v1h-1zM220 85h1v1h-1zM333 85h1v1h-1zM336 85h1v1h-1zM341 85h1v1h-1zM348 85h1v1h-1zM134 86h1v1h-1zM138 86h1v1h-1zM142 86h1v1h-1zM333 86h1v1h-1zM336 86h1v1h-1zM340 86h1v1h-1zM348 86h1v1h-1zM127 87h1v1h-1zM134 87h1v1h-1zM139 87h1v1h-1zM143 87h1v1h-1zM220 87h1v1h-1zM335 87h1v1h-1zM339 87h1v1h-1zM347 87h1v1h-1zM351 87h1v1h-1zM127 88h1v1h-1zM135 88h1v1h-1zM139 88h1v1h-1zM339 88h1v1h-1zM346 88h1v1h-1zM351 88h1v1h-1zM124 89h1v1h-1zM128 89h1v1h-1zM136 89h1v1h-1zM140 89h1v1h-1zM221 89h1v1h-1zM338 89h1v1h-1zM346 89h1v1h-1zM350 89h1v1h-1zM354 89h1v1h-1zM125 90h1v1h-1zM129 90h1v1h-1zM136 90h1v1h-1zM345 90h1v1h-1zM349 90h1v1h-1zM353 90h1v1h-1zM121 91h1v1h-1zM125 91h1v1h-1zM129 91h1v1h-1zM137 91h1v1h-1zM221 91h1v1h-1zM344 91h1v1h-1zM349 91h1v1h-1zM352 91h1v1h-1zM356 91h1v1h-1zM122 92h1v1h-1zM126 92h1v1h-1zM130 92h1v1h-1zM344 92h1v1h-1zM348 92h1v1h-1zM351 92h1v1h-1zM355 92h1v1h-1zM119 93h1v1h-1zM123 93h1v1h-1zM127 93h1v1h-1zM131 93h1v1h-1zM221 93h1v1h-1zM347 93h1v1h-1zM351 93h1v1h-1zM355 93h1v1h-1zM120 94h1v1h-1zM124 94h1v1h-1zM128 94h1v1h-1zM131 94h1v1h-1zM347 94h1v1h-1zM350 94h1v1h-1zM354 94h1v1h-1zM121 95h1v1h-1zM124 95h1v1h-1zM128 95h1v1h-1zM132 95h1v1h-1zM221 95h1v1h-1zM346 95h1v1h-1zM349 95h1v1h-1zM353 95h1v1h-1zM362 95h1v1h-1zM113 96h1v1h-1zM122 96h1v1h-1zM125 96h1v1h-1zM129 96h1v1h-1zM348 96h1v1h-1zM352 96h1v1h-1zM361 96h1v1h-1zM365 96h1v1h-1zM114 97h1v1h-1zM122 97h1v1h-1zM126 97h1v1h-1zM222 97h1v1h-1zM352 97h1v1h-1zM360 97h1v1h-1zM364 97h1v1h-1zM115 98h1v1h-1zM123 98h1v1h-1zM127 98h1v1h-1zM351 98h1v1h-1zM359 98h1v1h-1zM363 98h1v1h-1zM110 99h1v1h-1zM115 99h1v1h-1zM124 99h1v1h-1zM222 99h1v1h-1zM359 99h1v1h-1zM362 99h1v1h-1zM367 99h1v1h-1zM111 100h1v1h-1zM116 100h1v1h-1zM125 100h1v1h-1zM358 100h1v1h-1zM361 100h1v1h-1zM366 100h1v1h-1zM108 101h1v1h-1zM112 101h1v1h-1zM117 101h1v1h-1zM222 101h1v1h-1zM357 101h1v1h-1zM361 101h1v1h-1zM365 101h1v1h-1zM370 101h1v1h-1zM109 102h1v1h-1zM113 102h1v1h-1zM118 102h1v1h-1zM356 102h1v1h-1zM360 102h1v1h-1zM364 102h1v1h-1zM369 102h1v1h-1zM110 103h1v1h-1zM114 103h1v1h-1zM118 103h1v1h-1zM222 103h1v1h-1zM359 103h1v1h-1zM364 103h1v1h-1zM368 103h1v1h-1zM106 104h1v1h-1zM111 104h1v1h-1zM115 104h1v1h-1zM119 104h1v1h-1zM358 104h1v1h-1zM363 104h1v1h-1zM367 104h1v1h-1zM107 105h1v1h-1zM112 105h1v1h-1zM116 105h1v1h-1zM223 105h1v1h-1zM362 105h1v1h-1zM366 105h1v1h-1zM108 106h1v1h-1zM112 106h1v1h-1zM117 106h1v1h-1zM361 106h1v1h-1zM366 106h1v1h-1zM374 106h1v1h-1zM109 107h1v1h-1zM113 107h1v1h-1zM223 107h1v1h-1zM365 107h1v1h-1zM373 107h1v1h-1zM101 108h1v1h-1zM110 108h1v1h-1zM114 108h1v1h-1zM364 108h1v1h-1zM372 108h1v1h-1zM377 108h1v1h-1zM102 109h1v1h-1zM111 109h1v1h-1zM115 109h1v1h-1zM223 109h1v1h-1zM363 109h1v1h-1zM371 109h1v1h-1zM376 109h1v1h-1zM103 110h1v1h-1zM112 110h1v1h-1zM370 110h1v1h-1zM375 110h1v1h-1zM379 110h1v1h-1zM99 111h1v1h-1zM104 111h1v1h-1zM113 111h1v1h-1zM223 111h1v1h-1zM369 111h1v1h-1zM374 111h1v1h-1zM378 111h1v1h-1zM100 112h1v1h-1zM105 112h2v1h-2zM368 112h1v1h-1zM372 112h2v1h-2zM377 112h1v1h-1zM96 113h1v1h-1zM101 113h1v1h-1zM107 113h1v1h-1zM224 113h1v1h-1zM367 113h1v1h-1zM371 113h1v1h-1zM376 113h1v1h-1zM382 113h1v1h-1zM97 114h1v1h-1zM102 114h2v1h-2zM108 114h1v1h-1zM370 114h1v1h-1zM375 114h1v1h-1zM381 114h1v1h-1zM98 115h1v1h-1zM104 115h1v1h-1zM109 115h1v1h-1zM224 115h1v1h-1zM369 115h1v1h-1zM374 115h1v1h-1zM379 115h2v1h-2zM95 116h1v1h-1zM99 116h1v1h-1zM105 116h1v1h-1zM373 116h1v1h-1zM378 116h1v1h-1zM96 117h1v1h-1zM100 117h2v1h-2zM106 117h1v1h-1zM224 117h1v1h-1zM372 117h1v1h-1zM377 117h1v1h-1zM97 118h1v1h-1zM102 118h1v1h-1zM375 118h2v1h-2zM98 119h2v1h-2zM103 119h1v1h-1zM224 119h1v1h-1zM374 119h1v1h-1zM385 119h1v1h-1zM100 120h1v1h-1zM104 120h1v1h-1zM384 120h1v1h-1zM101 121h1v1h-1zM225 121h1v1h-1zM383 121h1v1h-1zM387 121h1v1h-1zM91 122h1v1h-1zM102 122h1v1h-1zM381 122h2v1h-2zM386 122h1v1h-1zM92 123h2v1h-2zM225 123h1v1h-1zM380 123h1v1h-1zM385 123h1v1h-1zM89 124h1v1h-1zM94 124h1v1h-1zM379 124h1v1h-1zM383 124h2v1h-2zM389 124h1v1h-1zM90 125h1v1h-1zM95 125h1v1h-1zM225 125h1v1h-1zM343 125h1v1h-1zM378 125h1v1h-1zM382 125h1v1h-1zM387 125h2v1h-2zM91 126h1v1h-1zM96 126h2v1h-2zM381 126h1v1h-1zM386 126h1v1h-1zM87 127h2v1h-2zM92 127h2v1h-2zM98 127h1v1h-1zM225 127h1v1h-1zM341 127h1v1h-1zM380 127h1v1h-1zM385 127h1v1h-1zM390 127h2v1h-2zM89 128h1v1h-1zM94 128h1v1h-1zM383 128h2v1h-2zM389 128h1v1h-1zM84 129h1v1h-1zM90 129h2v1h-2zM95 129h1v1h-1zM131 129h1v1h-1zM226 129h1v1h-1zM339 129h1v1h-1zM382 129h1v1h-1zM387 129h2v1h-2zM85 130h2v1h-2zM92 130h1v1h-1zM96 130h1v1h-1zM386 130h1v1h-1zM87 131h1v1h-1zM93 131h2v1h-2zM133 131h1v1h-1zM226 131h1v1h-1zM338 131h1v1h-1zM384 131h2v1h-2zM88 132h2v1h-2zM95 132h1v1h-1zM383 132h1v1h-1zM394 132h2v1h-2zM90 133h1v1h-1zM135 133h1v1h-1zM226 133h1v1h-1zM336 133h1v1h-1zM393 133h1v1h-1zM91 134h2v1h-2zM391 134h2v1h-2zM81 135h2v1h-2zM137 135h1v1h-1zM226 135h1v1h-1zM334 135h1v1h-1zM390 135h1v1h-1zM396 135h2v1h-2zM83 136h1v1h-1zM388 136h2v1h-2zM395 136h1v1h-1zM84 137h2v1h-2zM139 137h1v1h-1zM226 137h1v1h-1zM332 137h1v1h-1zM387 137h1v1h-1zM393 137h2v1h-2zM79 138h2v1h-2zM86 138h1v1h-1zM392 138h1v1h-1zM398 138h2v1h-2zM81 139h1v1h-1zM87 139h2v1h-2zM141 139h1v1h-1zM330 139h1v1h-1zM390 139h2v1h-2zM397 139h1v1h-1zM82 140h2v1h-2zM89 140h1v1h-1zM389 140h1v1h-1zM395 140h2v1h-2zM401 140h1v1h-1zM77 141h2v1h-2zM84 141h1v1h-1zM143 141h1v1h-1zM227 141h1v1h-1zM328 141h1v1h-1zM394 141h1v1h-1zM399 141h2v1h-2zM79 142h2v1h-2zM85 142h2v1h-2zM392 142h2v1h-2zM397 142h2v1h-2zM75 143h1v1h-1zM81 143h2v1h-2zM87 143h1v1h-1zM145 143h1v1h-1zM227 143h1v1h-1zM327 143h1v1h-1zM391 143h1v1h-1zM395 143h2v1h-2zM76 144h2v1h-2zM83 144h2v1h-2zM393 144h2v1h-2zM78 145h2v1h-2zM85 145h1v1h-1zM147 145h1v1h-1zM227 145h1v1h-1zM325 145h1v1h-1zM80 146h2v1h-2zM403 146h2v1h-2zM82 147h2v1h-2zM149 147h1v1h-1zM228 147h1v1h-1zM323 147h1v1h-1zM401 147h2v1h-2zM84 148h1v1h-1zM400 148h1v1h-1zM406 148h1v1h-1zM72 149h2v1h-2zM151 149h1v1h-1zM228 149h1v1h-1zM321 149h1v1h-1zM398 149h2v1h-2zM404 149h2v1h-2zM74 150h2v1h-2zM396 150h2v1h-2zM402 150h2v1h-2zM70 151h1v1h-1zM76 151h1v1h-1zM153 151h1v1h-1zM228 151h1v1h-1zM319 151h1v1h-1zM400 151h2v1h-2zM408 151h1v1h-1zM71 152h2v1h-2zM77 152h2v1h-2zM398 152h2v1h-2zM406 152h2v1h-2zM73 153h2v1h-2zM79 153h2v1h-2zM155 153h1v1h-1zM228 153h1v1h-1zM318 153h1v1h-1zM397 153h1v1h-1zM404 153h2v1h-2zM75 154h2v1h-2zM81 154h1v1h-1zM402 154h2v1h-2zM69 155h2v1h-2zM77 155h2v1h-2zM157 155h1v1h-1zM229 155h1v1h-1zM316 155h1v1h-1zM400 155h2v1h-2zM408 155h2v1h-2zM71 156h2v1h-2zM79 156h1v1h-1zM399 156h1v1h-1zM406 156h2v1h-2zM73 157h2v1h-2zM158 157h1v1h-1zM229 157h1v1h-1zM314 157h1v1h-1zM404 157h2v1h-2zM68 158h2v1h-2zM75 158h2v1h-2zM402 158h2v1h-2zM70 159h2v1h-2zM77 159h2v1h-2zM160 159h1v1h-1zM229 159h1v1h-1zM312 159h1v1h-1zM400 159h2v1h-2zM72 160h2v1h-2zM74 161h2v1h-2zM162 161h1v1h-1zM229 161h1v1h-1zM310 161h1v1h-1zM410 161h2v1h-2zM76 162h2v1h-2zM408 162h2v1h-2zM164 163h1v1h-1zM230 163h1v1h-1zM308 163h1v1h-1zM406 163h2v1h-2zM65 164h2v1h-2zM404 164h2v1h-2zM412 164h2v1h-2zM67 165h2v1h-2zM166 165h1v1h-1zM230 165h1v1h-1zM307 165h1v1h-1zM403 165h1v1h-1zM410 165h2v1h-2zM69 166h2v1h-2zM408 166h2v1h-2zM414 166h1v1h-1zM64 167h2v1h-2zM71 167h2v1h-2zM168 167h1v1h-1zM230 167h1v1h-1zM305 167h1v1h-1zM406 167h2v1h-2zM412 167h2v1h-2zM66 168h2v1h-2zM73 168h2v1h-2zM404 168h2v1h-2zM409 168h3v1h-3zM68 169h2v1h-2zM170 169h1v1h-1zM230 169h1v1h-1zM303 169h1v1h-1zM407 169h2v1h-2zM415 169h1v1h-1zM62 170h2v1h-2zM70 170h2v1h-2zM405 170h2v1h-2zM413 170h2v1h-2zM64 171h2v1h-2zM72 171h1v1h-1zM172 171h1v1h-1zM231 171h1v1h-1zM301 171h1v1h-1zM410 171h3v1h-3zM66 172h3v1h-3zM377 172h1v1h-1zM408 172h2v1h-2zM61 173h1v1h-1zM69 173h2v1h-2zM174 173h1v1h-1zM231 173h1v1h-1zM299 173h1v1h-1zM375 173h1v1h-1zM406 173h2v1h-2zM62 174h4v1h-4zM71 174h1v1h-1zM373 174h1v1h-1zM66 175h4v1h-4zM176 175h1v1h-1zM231 175h1v1h-1zM297 175h1v1h-1zM371 175h1v1h-1zM70 176h2v1h-2zM369 176h1v1h-1zM418 176h1v1h-1zM178 177h1v1h-1zM231 177h1v1h-1zM296 177h1v1h-1zM367 177h1v1h-1zM414 177h4v1h-4zM365 178h1v1h-1zM410 178h4v1h-4zM58 179h2v1h-2zM180 179h1v1h-1zM232 179h1v1h-1zM294 179h1v1h-1zM363 179h1v1h-1zM408 179h2v1h-2zM419 179h2v1h-2zM60 180h3v1h-3zM361 180h1v1h-1zM415 180h4v1h-4zM63 181h4v1h-4zM182 181h1v1h-1zM232 181h1v1h-1zM292 181h1v1h-1zM359 181h1v1h-1zM411 181h4v1h-4zM57 182h2v1h-2zM67 182h2v1h-2zM357 182h1v1h-1zM409 182h2v1h-2zM420 182h2v1h-2zM59 183h4v1h-4zM184 183h1v1h-1zM232 183h1v1h-1zM290 183h1v1h-1zM355 183h1v1h-1zM416 183h4v1h-4zM63 184h4v1h-4zM353 184h1v1h-1zM412 184h4v1h-4zM57 185h1v1h-1zM67 185h2v1h-2zM186 185h1v1h-1zM232 185h1v1h-1zM288 185h1v1h-1zM351 185h1v1h-1zM410 185h2v1h-2zM421 185h1v1h-1zM58 186h4v1h-4zM349 186h1v1h-1zM417 186h4v1h-4zM62 187h4v1h-4zM188 187h1v1h-1zM233 187h1v1h-1zM286 187h1v1h-1zM347 187h1v1h-1zM413 187h4v1h-4zM66 188h2v1h-2zM343 188h1v1h-1zM345 188h1v1h-1zM411 188h2v1h-2zM56 189h2v1h-2zM190 189h1v1h-1zM233 189h1v1h-1zM285 189h1v1h-1zM341 189h1v1h-1zM58 190h6v1h-6zM339 190h1v1h-1zM64 191h3v1h-3zM192 191h1v1h-1zM233 191h1v1h-1zM283 191h1v1h-1zM337 191h1v1h-1zM335 192h1v1h-1zM422 192h2v1h-2zM194 193h1v1h-1zM233 193h1v1h-1zM281 193h1v1h-1zM333 193h1v1h-1zM416 193h6v1h-6zM331 194h1v1h-1zM413 194h3v1h-3zM54 195h2v1h-2zM196 195h1v1h-1zM234 195h1v1h-1zM279 195h1v1h-1zM329 195h1v1h-1zM422 195h3v1h-3zM56 196h3v1h-3zM327 196h1v1h-1zM417 196h5v1h-5zM59 197h4v1h-4zM198 197h1v1h-1zM234 197h1v1h-1zM277 197h1v1h-1zM325 197h1v1h-1zM414 197h3v1h-3zM54 198h1v1h-1zM63 198h2v1h-2zM323 198h1v1h-1zM423 198h2v1h-2zM55 199h3v1h-3zM200 199h1v1h-1zM234 199h1v1h-1zM276 199h1v1h-1zM321 199h1v1h-1zM418 199h5v1h-5zM58 200h4v1h-4zM319 200h1v1h-1zM415 200h3v1h-3zM53 201h1v1h-1zM62 201h2v1h-2zM202 201h1v1h-1zM234 201h1v1h-1zM274 201h1v1h-1zM317 201h1v1h-1zM424 201h2v1h-2zM54 202h4v1h-4zM315 202h1v1h-1zM418 202h6v1h-6zM58 203h4v1h-4zM204 203h1v1h-1zM235 203h1v1h-1zM272 203h1v1h-1zM313 203h1v1h-1zM415 203h3v1h-3zM62 204h2v1h-2zM311 204h1v1h-1zM52 205h2v1h-2zM206 205h1v1h-1zM235 205h1v1h-1zM270 205h1v1h-1zM309 205h1v1h-1zM54 206h6v1h-6zM307 206h1v1h-1zM60 207h3v1h-3zM208 207h1v1h-1zM235 207h1v1h-1zM268 207h1v1h-1zM305 207h1v1h-1zM303 208h1v1h-1zM425 208h2v1h-2zM210 209h1v1h-1zM235 209h1v1h-1zM266 209h1v1h-1zM301 209h1v1h-1zM419 209h6v1h-6zM299 210h1v1h-1zM416 210h3v1h-3zM51 211h2v1h-2zM212 211h1v1h-1zM236 211h1v1h-1zM265 211h1v1h-1zM297 211h1v1h-1zM426 211h2v1h-2zM53 212h6v1h-6zM295 212h1v1h-1zM420 212h6v1h-6zM59 213h3v1h-3zM213 213h1v1h-1zM236 213h1v1h-1zM263 213h1v1h-1zM293 213h1v1h-1zM417 213h3v1h-3zM291 214h1v1h-1zM426 214h2v1h-2zM51 215h5v1h-5zM215 215h1v1h-1zM236 215h1v1h-1zM261 215h1v1h-1zM289 215h1v1h-1zM420 215h6v1h-6zM56 216h6v1h-6zM287 216h1v1h-1zM417 216h3v1h-3zM217 217h1v1h-1zM236 217h1v1h-1zM259 217h1v1h-1zM285 217h1v1h-1zM50 218h5v1h-5zM283 218h1v1h-1zM424 218h5v1h-5zM55 219h6v1h-6zM219 219h1v1h-1zM237 219h1v1h-1zM257 219h1v1h-1zM281 219h1v1h-1zM418 219h6v1h-6zM279 220h1v1h-1zM50 221h5v1h-5zM221 221h1v1h-1zM237 221h1v1h-1zM255 221h1v1h-1zM277 221h1v1h-1zM55 222h6v1h-6zM273 222h1v1h-1zM275 222h1v1h-1zM223 223h1v1h-1zM237 223h1v1h-1zM254 223h1v1h-1zM271 223h1v1h-1zM269 224h1v1h-1zM424 224h6v1h-6zM225 225h1v1h-1zM237 225h1v1h-1zM252 225h1v1h-1zM267 225h1v1h-1zM419 225h5v1h-5zM265 226h1v1h-1zM227 227h1v1h-1zM238 227h1v1h-1zM250 227h1v1h-1zM263 227h1v1h-1zM49 228h6v1h-6zM261 228h1v1h-1zM419 228h11v1h-11zM55 229h5v1h-5zM229 229h1v1h-1zM238 229h1v1h-1zM248 229h1v1h-1zM259 229h1v1h-1zM257 230h1v1h-1zM49 231h5v1h-5zM231 231h1v1h-1zM238 231h1v1h-1zM246 231h1v1h-1zM255 231h1v1h-1zM425 231h5v1h-5zM54 232h6v1h-6zM253 232h1v1h-1zM419 232h6v1h-6zM233 233h1v1h-1zM238 233h1v1h-1zM244 233h1v1h-1zM251 233h1v1h-1zM249 234h1v1h-1zM425 234h5v1h-5zM49 235h11v1h-11zM235 235h1v1h-1zM239 235h1v1h-1zM243 235h1v1h-1zM247 235h1v1h-1zM419 235h6v1h-6zM245 236h1v1h-1zM237 237h1v1h-1zM239 237h1v1h-1zM241 237h1v1h-1zM243 237h1v1h-1zM49 238h11v1h-11zM241 238h1v1h-1zM239 239h1v1h-1zM237 240h1v1h-1zM419 240h11v1h-11zM235 241h1v1h-1zM237 241h1v1h-1zM239 241h1v1h-1zM241 241h1v1h-1zM233 242h1v1h-1zM54 243h6v1h-6zM231 243h1v1h-1zM235 243h1v1h-1zM239 243h1v1h-1zM243 243h1v1h-1zM419 243h11v1h-11zM49 244h5v1h-5zM229 244h1v1h-1zM227 245h1v1h-1zM234 245h1v1h-1zM240 245h1v1h-1zM245 245h1v1h-1zM54 246h6v1h-6zM225 246h1v1h-1zM419 246h6v1h-6zM49 247h5v1h-5zM223 247h1v1h-1zM232 247h1v1h-1zM240 247h1v1h-1zM247 247h1v1h-1zM425 247h5v1h-5zM221 248h1v1h-1zM219 249h1v1h-1zM230 249h1v1h-1zM240 249h1v1h-1zM249 249h1v1h-1zM419 249h5v1h-5zM49 250h11v1h-11zM217 250h1v1h-1zM424 250h6v1h-6zM215 251h1v1h-1zM228 251h1v1h-1zM240 251h1v1h-1zM251 251h1v1h-1zM213 252h1v1h-1zM55 253h5v1h-5zM211 253h1v1h-1zM226 253h1v1h-1zM241 253h1v1h-1zM253 253h1v1h-1zM49 254h6v1h-6zM209 254h1v1h-1zM207 255h1v1h-1zM224 255h1v1h-1zM241 255h1v1h-1zM255 255h1v1h-1zM203 256h1v1h-1zM205 256h1v1h-1zM418 256h6v1h-6zM201 257h1v1h-1zM223 257h1v1h-1zM241 257h1v1h-1zM257 257h1v1h-1zM424 257h5v1h-5zM199 258h1v1h-1zM55 259h6v1h-6zM197 259h1v1h-1zM221 259h1v1h-1zM241 259h1v1h-1zM259 259h1v1h-1zM418 259h6v1h-6zM50 260h5v1h-5zM195 260h1v1h-1zM424 260h5v1h-5zM193 261h1v1h-1zM219 261h1v1h-1zM242 261h1v1h-1zM261 261h1v1h-1zM59 262h3v1h-3zM191 262h1v1h-1zM417 262h6v1h-6zM53 263h6v1h-6zM189 263h1v1h-1zM217 263h1v1h-1zM242 263h1v1h-1zM263 263h1v1h-1zM423 263h5v1h-5zM51 264h2v1h-2zM187 264h1v1h-1zM59 265h3v1h-3zM185 265h1v1h-1zM215 265h1v1h-1zM242 265h1v1h-1zM265 265h1v1h-1zM417 265h3v1h-3zM53 266h6v1h-6zM183 266h1v1h-1zM420 266h6v1h-6zM51 267h2v1h-2zM181 267h1v1h-1zM213 267h1v1h-1zM242 267h1v1h-1zM266 267h1v1h-1zM426 267h2v1h-2zM60 268h3v1h-3zM179 268h1v1h-1zM54 269h6v1h-6zM177 269h1v1h-1zM212 269h1v1h-1zM243 269h1v1h-1zM268 269h1v1h-1zM52 270h2v1h-2zM175 270h1v1h-1zM173 271h1v1h-1zM210 271h1v1h-1zM243 271h1v1h-1zM270 271h1v1h-1zM416 271h3v1h-3zM171 272h1v1h-1zM419 272h6v1h-6zM169 273h1v1h-1zM208 273h1v1h-1zM243 273h1v1h-1zM272 273h1v1h-1zM425 273h2v1h-2zM167 274h1v1h-1zM415 274h2v1h-2zM61 275h3v1h-3zM165 275h1v1h-1zM206 275h1v1h-1zM243 275h1v1h-1zM274 275h1v1h-1zM417 275h4v1h-4zM55 276h6v1h-6zM163 276h1v1h-1zM421 276h4v1h-4zM53 277h2v1h-2zM161 277h1v1h-1zM204 277h1v1h-1zM244 277h1v1h-1zM276 277h1v1h-1zM415 277h2v1h-2zM425 277h1v1h-1zM61 278h3v1h-3zM159 278h1v1h-1zM417 278h4v1h-4zM56 279h5v1h-5zM157 279h1v1h-1zM202 279h1v1h-1zM244 279h1v1h-1zM278 279h1v1h-1zM421 279h3v1h-3zM54 280h2v1h-2zM155 280h1v1h-1zM414 280h2v1h-2zM424 280h1v1h-1zM62 281h3v1h-3zM153 281h1v1h-1zM201 281h1v1h-1zM244 281h1v1h-1zM280 281h1v1h-1zM416 281h4v1h-4zM57 282h5v1h-5zM151 282h1v1h-1zM420 282h3v1h-3zM54 283h3v1h-3zM149 283h1v1h-1zM199 283h1v1h-1zM244 283h1v1h-1zM282 283h1v1h-1zM423 283h2v1h-2zM63 284h3v1h-3zM147 284h1v1h-1zM57 285h6v1h-6zM145 285h1v1h-1zM197 285h1v1h-1zM245 285h1v1h-1zM284 285h1v1h-1zM55 286h2v1h-2zM143 286h1v1h-1zM141 287h1v1h-1zM195 287h1v1h-1zM245 287h1v1h-1zM286 287h1v1h-1zM412 287h3v1h-3zM139 288h1v1h-1zM415 288h6v1h-6zM137 289h1v1h-1zM193 289h1v1h-1zM245 289h1v1h-1zM288 289h1v1h-1zM421 289h2v1h-2zM66 290h2v1h-2zM133 290h1v1h-1zM135 290h1v1h-1zM411 290h2v1h-2zM62 291h4v1h-4zM131 291h1v1h-1zM192 291h1v1h-1zM245 291h1v1h-1zM290 291h1v1h-1zM413 291h4v1h-4zM58 292h4v1h-4zM129 292h1v1h-1zM417 292h4v1h-4zM57 293h1v1h-1zM67 293h2v1h-2zM127 293h1v1h-1zM190 293h1v1h-1zM246 293h1v1h-1zM292 293h1v1h-1zM410 293h2v1h-2zM421 293h1v1h-1zM63 294h4v1h-4zM125 294h1v1h-1zM412 294h4v1h-4zM59 295h4v1h-4zM123 295h1v1h-1zM188 295h1v1h-1zM246 295h1v1h-1zM294 295h1v1h-1zM416 295h4v1h-4zM57 296h2v1h-2zM68 296h2v1h-2zM121 296h1v1h-1zM410 296h2v1h-2zM420 296h2v1h-2zM64 297h4v1h-4zM119 297h1v1h-1zM186 297h1v1h-1zM246 297h1v1h-1zM296 297h1v1h-1zM412 297h4v1h-4zM60 298h4v1h-4zM117 298h1v1h-1zM416 298h3v1h-3zM59 299h1v1h-1zM69 299h2v1h-2zM115 299h1v1h-1zM184 299h1v1h-1zM246 299h1v1h-1zM298 299h1v1h-1zM419 299h1v1h-1zM65 300h4v1h-4zM113 300h1v1h-1zM61 301h4v1h-4zM111 301h1v1h-1zM182 301h1v1h-1zM247 301h1v1h-1zM300 301h1v1h-1zM60 302h1v1h-1zM109 302h1v1h-1zM407 302h2v1h-2zM107 303h1v1h-1zM181 303h1v1h-1zM247 303h1v1h-1zM302 303h1v1h-1zM409 303h4v1h-4zM105 304h1v1h-1zM407 304h1v1h-1zM413 304h4v1h-4zM71 305h2v1h-2zM103 305h1v1h-1zM179 305h1v1h-1zM247 305h1v1h-1zM304 305h1v1h-1zM408 305h2v1h-2zM417 305h1v1h-1zM69 306h2v1h-2zM101 306h1v1h-1zM410 306h3v1h-3zM66 307h3v1h-3zM177 307h1v1h-1zM247 307h1v1h-1zM306 307h1v1h-1zM405 307h2v1h-2zM413 307h2v1h-2zM64 308h2v1h-2zM72 308h2v1h-2zM407 308h2v1h-2zM415 308h2v1h-2zM63 309h1v1h-1zM70 309h2v1h-2zM175 309h1v1h-1zM248 309h1v1h-1zM308 309h1v1h-1zM409 309h2v1h-2zM67 310h3v1h-3zM73 310h2v1h-2zM404 310h2v1h-2zM411 310h2v1h-2zM65 311h2v1h-2zM71 311h2v1h-2zM173 311h1v1h-1zM248 311h1v1h-1zM310 311h1v1h-1zM406 311h2v1h-2zM413 311h2v1h-2zM64 312h1v1h-1zM69 312h2v1h-2zM408 312h2v1h-2zM67 313h2v1h-2zM75 313h1v1h-1zM171 313h1v1h-1zM248 313h1v1h-1zM312 313h1v1h-1zM410 313h2v1h-2zM65 314h2v1h-2zM73 314h2v1h-2zM412 314h2v1h-2zM64 315h1v1h-1zM71 315h2v1h-2zM170 315h1v1h-1zM248 315h1v1h-1zM314 315h1v1h-1zM414 315h1v1h-1zM69 316h2v1h-2zM401 316h2v1h-2zM67 317h2v1h-2zM168 317h1v1h-1zM249 317h1v1h-1zM316 317h1v1h-1zM403 317h2v1h-2zM405 318h2v1h-2zM77 319h2v1h-2zM166 319h1v1h-1zM249 319h1v1h-1zM318 319h1v1h-1zM400 319h2v1h-2zM407 319h2v1h-2zM75 320h2v1h-2zM402 320h2v1h-2zM409 320h2v1h-2zM73 321h2v1h-2zM164 321h1v1h-1zM249 321h1v1h-1zM320 321h1v1h-1zM404 321h2v1h-2zM71 322h2v1h-2zM79 322h2v1h-2zM398 322h2v1h-2zM406 322h2v1h-2zM69 323h2v1h-2zM77 323h2v1h-2zM162 323h1v1h-1zM249 323h1v1h-1zM321 323h1v1h-1zM400 323h2v1h-2zM408 323h2v1h-2zM75 324h2v1h-2zM397 324h1v1h-1zM402 324h2v1h-2zM73 325h2v1h-2zM81 325h1v1h-1zM160 325h1v1h-1zM250 325h1v1h-1zM323 325h1v1h-1zM398 325h2v1h-2zM404 325h2v1h-2zM71 326h2v1h-2zM79 326h2v1h-2zM400 326h2v1h-2zM406 326h2v1h-2zM77 327h2v1h-2zM159 327h1v1h-1zM250 327h1v1h-1zM325 327h1v1h-1zM402 327h1v1h-1zM75 328h2v1h-2zM81 328h2v1h-2zM403 328h2v1h-2zM73 329h2v1h-2zM79 329h2v1h-2zM157 329h1v1h-1zM250 329h1v1h-1zM327 329h1v1h-1zM405 329h2v1h-2zM72 330h1v1h-1zM78 330h1v1h-1zM394 330h1v1h-1zM76 331h2v1h-2zM155 331h1v1h-1zM250 331h1v1h-1zM329 331h1v1h-1zM395 331h2v1h-2zM74 332h2v1h-2zM397 332h2v1h-2zM86 333h1v1h-1zM153 333h1v1h-1zM251 333h1v1h-1zM331 333h1v1h-1zM392 333h2v1h-2zM399 333h2v1h-2zM84 334h2v1h-2zM394 334h2v1h-2zM401 334h2v1h-2zM82 335h2v1h-2zM87 335h1v1h-1zM151 335h1v1h-1zM251 335h1v1h-1zM333 335h1v1h-1zM391 335h1v1h-1zM396 335h2v1h-2zM80 336h2v1h-2zM85 336h2v1h-2zM392 336h2v1h-2zM398 336h2v1h-2zM78 337h2v1h-2zM84 337h1v1h-1zM150 337h1v1h-1zM251 337h1v1h-1zM335 337h1v1h-1zM394 337h1v1h-1zM400 337h2v1h-2zM77 338h1v1h-1zM82 338h2v1h-2zM89 338h1v1h-1zM389 338h1v1h-1zM395 338h2v1h-2zM81 339h1v1h-1zM87 339h2v1h-2zM148 339h1v1h-1zM251 339h1v1h-1zM337 339h1v1h-1zM390 339h2v1h-2zM397 339h1v1h-1zM79 340h2v1h-2zM86 340h1v1h-1zM392 340h1v1h-1zM398 340h2v1h-2zM84 341h2v1h-2zM91 341h1v1h-1zM146 341h1v1h-1zM252 341h1v1h-1zM339 341h1v1h-1zM393 341h2v1h-2zM83 342h1v1h-1zM89 342h2v1h-2zM395 342h1v1h-1zM81 343h2v1h-2zM88 343h1v1h-1zM144 343h1v1h-1zM252 343h1v1h-1zM341 343h1v1h-1zM396 343h2v1h-2zM86 344h2v1h-2zM386 344h2v1h-2zM85 345h1v1h-1zM142 345h1v1h-1zM252 345h1v1h-1zM343 345h1v1h-1zM388 345h1v1h-1zM83 346h2v1h-2zM95 346h1v1h-1zM383 346h1v1h-1zM389 346h2v1h-2zM93 347h2v1h-2zM140 347h1v1h-1zM252 347h1v1h-1zM345 347h1v1h-1zM384 347h2v1h-2zM391 347h1v1h-1zM92 348h1v1h-1zM382 348h1v1h-1zM386 348h1v1h-1zM392 348h2v1h-2zM90 349h2v1h-2zM96 349h1v1h-1zM139 349h1v1h-1zM252 349h1v1h-1zM347 349h1v1h-1zM383 349h1v1h-1zM387 349h2v1h-2zM394 349h1v1h-1zM89 350h1v1h-1zM94 350h2v1h-2zM384 350h1v1h-1zM389 350h1v1h-1zM87 351h2v1h-2zM93 351h1v1h-1zM98 351h1v1h-1zM137 351h1v1h-1zM253 351h1v1h-1zM380 351h1v1h-1zM385 351h2v1h-2zM390 351h2v1h-2zM92 352h1v1h-1zM97 352h1v1h-1zM381 352h2v1h-2zM387 352h1v1h-1zM90 353h2v1h-2zM96 353h1v1h-1zM100 353h1v1h-1zM135 353h1v1h-1zM253 353h1v1h-1zM383 353h1v1h-1zM388 353h1v1h-1zM89 354h1v1h-1zM94 354h2v1h-2zM99 354h1v1h-1zM384 354h1v1h-1zM389 354h1v1h-1zM93 355h1v1h-1zM98 355h1v1h-1zM253 355h1v1h-1zM385 355h2v1h-2zM92 356h1v1h-1zM96 356h2v1h-2zM376 356h1v1h-1zM387 356h1v1h-1zM91 357h1v1h-1zM95 357h1v1h-1zM253 357h1v1h-1zM377 357h1v1h-1zM94 358h1v1h-1zM374 358h1v1h-1zM378 358h1v1h-1zM93 359h1v1h-1zM104 359h1v1h-1zM254 359h1v1h-1zM375 359h1v1h-1zM379 359h2v1h-2zM102 360h2v1h-2zM376 360h1v1h-1zM381 360h1v1h-1zM101 361h1v1h-1zM106 361h1v1h-1zM254 361h1v1h-1zM372 361h1v1h-1zM377 361h2v1h-2zM382 361h1v1h-1zM100 362h1v1h-1zM105 362h1v1h-1zM373 362h1v1h-1zM379 362h1v1h-1zM383 362h1v1h-1zM98 363h2v1h-2zM104 363h1v1h-1zM109 363h1v1h-1zM254 363h1v1h-1zM369 363h1v1h-1zM374 363h1v1h-1zM380 363h1v1h-1zM97 364h1v1h-1zM103 364h1v1h-1zM108 364h1v1h-1zM370 364h1v1h-1zM375 364h2v1h-2zM381 364h1v1h-1zM96 365h1v1h-1zM102 365h1v1h-1zM107 365h1v1h-1zM111 365h1v1h-1zM254 365h1v1h-1zM371 365h1v1h-1zM377 365h1v1h-1zM382 365h1v1h-1zM101 366h1v1h-1zM105 366h2v1h-2zM110 366h1v1h-1zM372 366h2v1h-2zM378 366h1v1h-1zM100 367h1v1h-1zM104 367h1v1h-1zM109 367h1v1h-1zM255 367h1v1h-1zM365 367h1v1h-1zM374 367h1v1h-1zM379 367h1v1h-1zM99 368h1v1h-1zM103 368h1v1h-1zM108 368h1v1h-1zM366 368h1v1h-1zM375 368h1v1h-1zM102 369h1v1h-1zM107 369h1v1h-1zM115 369h1v1h-1zM255 369h1v1h-1zM363 369h1v1h-1zM367 369h1v1h-1zM376 369h1v1h-1zM101 370h1v1h-1zM106 370h1v1h-1zM114 370h1v1h-1zM364 370h1v1h-1zM368 370h1v1h-1zM377 370h1v1h-1zM105 371h1v1h-1zM113 371h1v1h-1zM255 371h1v1h-1zM365 371h1v1h-1zM369 371h1v1h-1zM104 372h1v1h-1zM112 372h1v1h-1zM117 372h1v1h-1zM361 372h1v1h-1zM366 372h1v1h-1zM370 372h1v1h-1zM112 373h1v1h-1zM116 373h1v1h-1zM255 373h1v1h-1zM362 373h1v1h-1zM366 373h1v1h-1zM371 373h1v1h-1zM111 374h1v1h-1zM115 374h1v1h-1zM120 374h1v1h-1zM359 374h1v1h-1zM363 374h1v1h-1zM367 374h1v1h-1zM372 374h1v1h-1zM110 375h1v1h-1zM114 375h1v1h-1zM119 375h1v1h-1zM256 375h1v1h-1zM360 375h1v1h-1zM364 375h1v1h-1zM368 375h1v1h-1zM109 376h1v1h-1zM114 376h1v1h-1zM118 376h1v1h-1zM122 376h1v1h-1zM360 376h1v1h-1zM365 376h1v1h-1zM369 376h1v1h-1zM108 377h1v1h-1zM113 377h1v1h-1zM117 377h1v1h-1zM121 377h1v1h-1zM256 377h1v1h-1zM361 377h1v1h-1zM366 377h1v1h-1zM370 377h1v1h-1zM112 378h1v1h-1zM117 378h1v1h-1zM120 378h1v1h-1zM353 378h1v1h-1zM362 378h1v1h-1zM367 378h1v1h-1zM111 379h1v1h-1zM116 379h1v1h-1zM119 379h1v1h-1zM256 379h1v1h-1zM354 379h1v1h-1zM363 379h1v1h-1zM368 379h1v1h-1zM115 380h1v1h-1zM119 380h1v1h-1zM127 380h1v1h-1zM351 380h1v1h-1zM355 380h1v1h-1zM363 380h1v1h-1zM114 381h1v1h-1zM118 381h1v1h-1zM126 381h1v1h-1zM256 381h1v1h-1zM352 381h1v1h-1zM356 381h1v1h-1zM364 381h1v1h-1zM113 382h1v1h-1zM117 382h1v1h-1zM126 382h1v1h-1zM130 382h1v1h-1zM349 382h1v1h-1zM353 382h1v1h-1zM356 382h1v1h-1zM365 382h1v1h-1zM116 383h1v1h-1zM125 383h1v1h-1zM129 383h1v1h-1zM132 383h1v1h-1zM257 383h1v1h-1zM346 383h1v1h-1zM350 383h1v1h-1zM354 383h1v1h-1zM357 383h1v1h-1zM124 384h1v1h-1zM128 384h1v1h-1zM131 384h1v1h-1zM347 384h1v1h-1zM350 384h1v1h-1zM354 384h1v1h-1zM358 384h1v1h-1zM123 385h1v1h-1zM127 385h1v1h-1zM131 385h1v1h-1zM257 385h1v1h-1zM347 385h1v1h-1zM351 385h1v1h-1zM355 385h1v1h-1zM359 385h1v1h-1zM123 386h1v1h-1zM127 386h1v1h-1zM130 386h1v1h-1zM134 386h1v1h-1zM348 386h1v1h-1zM352 386h1v1h-1zM356 386h1v1h-1zM122 387h1v1h-1zM126 387h1v1h-1zM129 387h1v1h-1zM134 387h1v1h-1zM257 387h1v1h-1zM341 387h1v1h-1zM349 387h1v1h-1zM353 387h1v1h-1zM357 387h1v1h-1zM125 388h1v1h-1zM129 388h1v1h-1zM133 388h1v1h-1zM342 388h1v1h-1zM349 388h1v1h-1zM353 388h1v1h-1zM124 389h1v1h-1zM128 389h1v1h-1zM132 389h1v1h-1zM140 389h1v1h-1zM257 389h1v1h-1zM338 389h1v1h-1zM342 389h1v1h-1zM350 389h1v1h-1zM354 389h1v1h-1zM127 390h1v1h-1zM132 390h1v1h-1zM139 390h1v1h-1zM339 390h1v1h-1zM343 390h1v1h-1zM351 390h1v1h-1zM127 391h1v1h-1zM131 391h1v1h-1zM139 391h1v1h-1zM143 391h1v1h-1zM258 391h1v1h-1zM335 391h1v1h-1zM339 391h1v1h-1zM344 391h1v1h-1zM351 391h1v1h-1zM130 392h1v1h-1zM138 392h1v1h-1zM142 392h1v1h-1zM333 392h1v1h-1zM336 392h1v1h-1zM340 392h1v1h-1zM344 392h1v1h-1zM130 393h1v1h-1zM137 393h1v1h-1zM142 393h1v1h-1zM145 393h1v1h-1zM258 393h1v1h-1zM334 393h1v1h-1zM336 393h1v1h-1zM341 393h1v1h-1zM345 393h1v1h-1zM129 394h1v1h-1zM137 394h1v1h-1zM141 394h1v1h-1zM144 394h1v1h-1zM148 394h1v1h-1zM334 394h1v1h-1zM337 394h1v1h-1zM341 394h1v1h-1zM346 394h1v1h-1zM136 395h1v1h-1zM140 395h1v1h-1zM144 395h1v1h-1zM147 395h1v1h-1zM335 395h1v1h-1zM338 395h1v1h-1zM342 395h1v1h-1zM346 395h1v1h-1zM135 396h1v1h-1zM140 396h1v1h-1zM143 396h1v1h-1zM147 396h1v1h-1zM328 396h1v1h-1zM335 396h1v1h-1zM338 396h1v1h-1zM343 396h1v1h-1zM135 397h1v1h-1zM139 397h1v1h-1zM143 397h1v1h-1zM146 397h1v1h-1zM154 397h1v1h-1zM325 397h1v1h-1zM328 397h1v1h-1zM336 397h1v1h-1zM339 397h1v1h-1zM343 397h1v1h-1zM138 398h1v1h-1zM142 398h1v1h-1zM146 398h1v1h-1zM153 398h1v1h-1zM322 398h1v1h-1zM326 398h1v1h-1zM329 398h1v1h-1zM336 398h1v1h-1zM340 398h1v1h-1zM138 399h1v1h-1zM142 399h1v1h-1zM145 399h1v1h-1zM153 399h1v1h-1zM156 399h1v1h-1zM322 399h1v1h-1zM326 399h1v1h-1zM329 399h1v1h-1zM337 399h1v1h-1zM340 399h1v1h-1zM141 400h1v1h-1zM145 400h1v1h-1zM152 400h1v1h-1zM155 400h1v1h-1zM159 400h1v1h-1zM319 400h1v1h-1zM323 400h1v1h-1zM327 400h1v1h-1zM330 400h1v1h-1zM337 400h1v1h-1zM141 401h1v1h-1zM144 401h1v1h-1zM152 401h1v1h-1zM155 401h1v1h-1zM159 401h1v1h-1zM162 401h1v1h-1zM319 401h1v1h-1zM323 401h1v1h-1zM327 401h1v1h-1zM331 401h1v1h-1zM338 401h1v1h-1zM144 402h1v1h-1zM151 402h1v1h-1zM154 402h1v1h-1zM158 402h1v1h-1zM162 402h1v1h-1zM320 402h1v1h-1zM324 402h1v1h-1zM328 402h1v1h-1zM331 402h1v1h-1zM143 403h1v1h-1zM150 403h1v1h-1zM154 403h1v1h-1zM158 403h1v1h-1zM161 403h1v1h-1zM313 403h1v1h-1zM320 403h1v1h-1zM324 403h1v1h-1zM328 403h1v1h-1zM332 403h1v1h-1zM150 404h1v1h-1zM153 404h1v1h-1zM157 404h1v1h-1zM161 404h1v1h-1zM168 404h1v1h-1zM310 404h1v1h-1zM314 404h1v1h-1zM321 404h1v1h-1zM325 404h1v1h-1zM329 404h1v1h-1zM332 404h1v1h-1zM149 405h1v1h-1zM153 405h1v1h-1zM157 405h1v1h-1zM160 405h1v1h-1zM168 405h1v1h-1zM308 405h1v1h-1zM310 405h1v1h-1zM314 405h1v1h-1zM321 405h1v1h-1zM325 405h1v1h-1zM329 405h1v1h-1zM149 406h1v1h-1zM152 406h1v1h-1zM156 406h1v1h-1zM160 406h1v1h-1zM167 406h1v1h-1zM171 406h1v1h-1zM305 406h1v1h-1zM308 406h1v1h-1zM311 406h1v1h-1zM315 406h1v1h-1zM322 406h1v1h-1zM326 406h1v1h-1zM330 406h1v1h-1zM152 407h1v1h-1zM156 407h1v1h-1zM159 407h1v1h-1zM167 407h1v1h-1zM170 407h1v1h-1zM174 407h1v1h-1zM176 407h1v1h-1zM305 407h1v1h-1zM309 407h1v1h-1zM311 407h1v1h-1zM315 407h1v1h-1zM322 407h1v1h-1zM326 407h1v1h-1zM151 408h1v1h-1zM155 408h1v1h-1zM159 408h1v1h-1zM166 408h1v1h-1zM170 408h1v1h-1zM173 408h1v1h-1zM176 408h1v1h-1zM299 408h1v1h-1zM306 408h1v1h-1zM309 408h1v1h-1zM312 408h1v1h-1zM316 408h1v1h-1zM323 408h1v1h-1zM155 409h1v1h-1zM158 409h1v1h-1zM166 409h1v1h-1zM169 409h1v1h-1zM173 409h1v1h-1zM175 409h1v1h-1zM296 409h1v1h-1zM299 409h1v1h-1zM306 409h1v1h-1zM310 409h1v1h-1zM312 409h1v1h-1zM316 409h1v1h-1zM323 409h1v1h-1zM158 410h1v1h-1zM165 410h1v1h-1zM169 410h1v1h-1zM172 410h1v1h-1zM175 410h1v1h-1zM182 410h1v1h-1zM185 410h1v1h-1zM293 410h1v1h-1zM296 410h1v1h-1zM300 410h1v1h-1zM307 410h1v1h-1zM310 410h1v1h-1zM313 410h1v1h-1zM317 410h1v1h-1zM165 411h1v1h-1zM168 411h1v1h-1zM172 411h1v1h-1zM175 411h1v1h-1zM182 411h1v1h-1zM185 411h1v1h-1zM188 411h1v1h-1zM290 411h1v1h-1zM293 411h1v1h-1zM297 411h1v1h-1zM300 411h1v1h-1zM307 411h1v1h-1zM310 411h1v1h-1zM313 411h1v1h-1zM317 411h1v1h-1zM164 412h1v1h-1zM168 412h1v1h-1zM172 412h1v1h-1zM175 412h1v1h-1zM181 412h1v1h-1zM184 412h1v1h-1zM188 412h1v1h-1zM191 412h1v1h-1zM290 412h1v1h-1zM294 412h1v1h-1zM297 412h1v1h-1zM300 412h1v1h-1zM307 412h1v1h-1zM311 412h1v1h-1zM314 412h1v1h-1zM164 413h1v1h-1zM167 413h1v1h-1zM171 413h1v1h-1zM174 413h1v1h-1zM181 413h1v1h-1zM184 413h1v1h-1zM187 413h1v1h-1zM191 413h1v1h-1zM284 413h1v1h-1zM291 413h1v1h-1zM294 413h1v1h-1zM297 413h1v1h-1zM300 413h1v1h-1zM308 413h1v1h-1zM311 413h1v1h-1zM314 413h1v1h-1zM167 414h1v1h-1zM171 414h1v1h-1zM174 414h1v1h-1zM181 414h1v1h-1zM184 414h1v1h-1zM187 414h1v1h-1zM191 414h1v1h-1zM198 414h1v1h-1zM281 414h1v1h-1zM284 414h1v1h-1zM291 414h1v1h-1zM294 414h1v1h-1zM297 414h1v1h-1zM301 414h1v1h-1zM308 414h1v1h-1zM312 414h1v1h-1zM315 414h1v1h-1zM170 415h1v1h-1zM174 415h1v1h-1zM181 415h1v1h-1zM184 415h1v1h-1zM187 415h1v1h-1zM190 415h1v1h-1zM198 415h1v1h-1zM201 415h1v1h-1zM204 415h1v1h-1zM275 415h1v1h-1zM278 415h1v1h-1zM281 415h1v1h-1zM284 415h1v1h-1zM291 415h1v1h-1zM294 415h1v1h-1zM298 415h1v1h-1zM301 415h1v1h-1zM309 415h1v1h-1zM170 416h1v1h-1zM174 416h1v1h-1zM180 416h1v1h-1zM183 416h1v1h-1zM187 416h1v1h-1zM190 416h1v1h-1zM197 416h1v1h-1zM201 416h1v1h-1zM204 416h1v1h-1zM207 416h1v1h-1zM268 416h1v1h-1zM275 416h1v1h-1zM278 416h1v1h-1zM281 416h1v1h-1zM285 416h1v1h-1zM291 416h1v1h-1zM295 416h1v1h-1zM298 416h1v1h-1zM301 416h1v1h-1zM173 417h1v1h-1zM180 417h1v1h-1zM183 417h1v1h-1zM186 417h1v1h-1zM190 417h1v1h-1zM197 417h1v1h-1zM200 417h1v1h-1zM203 417h1v1h-1zM207 417h1v1h-1zM213 417h1v1h-1zM216 417h1v1h-1zM262 417h1v1h-1zM265 417h1v1h-1zM268 417h1v1h-1zM275 417h1v1h-1zM278 417h1v1h-1zM282 417h1v1h-1zM285 417h1v1h-1zM292 417h1v1h-1zM295 417h1v1h-1zM298 417h1v1h-1zM301 417h1v1h-1zM180 418h1v1h-1zM183 418h1v1h-1zM186 418h1v1h-1zM190 418h1v1h-1zM197 418h1v1h-1zM200 418h1v1h-1zM203 418h1v1h-1zM207 418h1v1h-1zM213 418h1v1h-1zM216 418h1v1h-1zM219 418h1v1h-1zM222 418h1v1h-1zM259 418h1v1h-1zM262 418h1v1h-1zM265 418h1v1h-1zM268 418h1v1h-1zM276 418h1v1h-1zM279 418h1v1h-1zM282 418h1v1h-1zM285 418h1v1h-1zM292 418h1v1h-1zM295 418h1v1h-1zM298 418h1v1h-1zM302 418h1v1h-1zM179 419h1v1h-1zM183 419h1v1h-1zM186 419h1v1h-1zM190 419h1v1h-1zM197 419h1v1h-1zM200 419h1v1h-1zM203 419h1v1h-1zM206 419h1v1h-1zM213 419h1v1h-1zM216 419h1v1h-1zM219 419h1v1h-1zM222 419h1v1h-1zM229 419h1v1h-1zM232 419h1v1h-1zM235 419h1v1h-1zM238 419h1v1h-1zM243 419h1v1h-1zM246 419h1v1h-1zM250 419h1v1h-1zM253 419h1v1h-1zM259 419h1v1h-1zM262 419h1v1h-1zM265 419h1v1h-1zM269 419h1v1h-1zM276 419h1v1h-1zM279 419h1v1h-1zM282 419h1v1h-1zM285 419h1v1h-1zM292 419h1v1h-1zM295 419h1v1h-1zM299 419h1v1h-1zM179 420h1v1h-1zM182 420h1v1h-1zM186 420h1v1h-1zM190 420h1v1h-1zM196 420h1v1h-1zM200 420h1v1h-1zM203 420h1v1h-1zM206 420h1v1h-1zM212 420h1v1h-1zM216 420h1v1h-1zM219 420h1v1h-1zM222 420h1v1h-1zM229 420h1v1h-1zM232 420h1v1h-1zM235 420h1v1h-1zM238 420h1v1h-1zM243 420h1v1h-1zM246 420h1v1h-1zM250 420h1v1h-1zM253 420h1v1h-1zM259 420h1v1h-1zM263 420h1v1h-1zM266 420h1v1h-1zM269 420h1v1h-1zM276 420h1v1h-1zM279 420h1v1h-1zM282 420h1v1h-1zM285 420h1v1h-1zM292 420h1v1h-1zM296 420h1v1h-1zM182 421h1v1h-1zM185 421h1v1h-1zM189 421h1v1h-1zM196 421h1v1h-1zM199 421h1v1h-1zM202 421h1v1h-1zM206 421h1v1h-1zM212 421h1v1h-1zM216 421h1v1h-1zM219 421h1v1h-1zM222 421h1v1h-1zM229 421h1v1h-1zM232 421h1v1h-1zM235 421h1v1h-1zM238 421h1v1h-1zM243 421h1v1h-1zM246 421h1v1h-1zM250 421h1v1h-1zM253 421h1v1h-1zM259 421h1v1h-1zM263 421h1v1h-1zM266 421h1v1h-1zM269 421h1v1h-1zM276 421h1v1h-1zM279 421h1v1h-1zM282 421h1v1h-1zM285 421h1v1h-1zM293 421h1v1h-1zM296 421h1v1h-1zM189 422h1v1h-1zM196 422h1v1h-1zM199 422h1v1h-1zM202 422h1v1h-1zM206 422h1v1h-1zM212 422h1v1h-1zM216 422h1v1h-1zM219 422h1v1h-1zM222 422h1v1h-1zM229 422h1v1h-1zM232 422h1v1h-1zM235 422h1v1h-1zM238 422h1v1h-1zM243 422h1v1h-1zM246 422h1v1h-1zM250 422h1v1h-1zM253 422h1v1h-1zM259 422h1v1h-1zM263 422h1v1h-1zM266 422h1v1h-1zM269 422h1v1h-1zM276 422h1v1h-1zM279 422h1v1h-1zM283 422h1v1h-1zM286 422h1v1h-1zM195 423h1v1h-1zM199 423h1v1h-1zM202 423h1v1h-1zM206 423h1v1h-1zM212 423h1v1h-1zM215 423h1v1h-1zM219 423h1v1h-1zM222 423h1v1h-1zM229 423h1v1h-1zM232 423h1v1h-1zM235 423h1v1h-1zM238 423h1v1h-1zM243 423h1v1h-1zM246 423h1v1h-1zM250 423h1v1h-1zM253 423h1v1h-1zM259 423h1v1h-1zM263 423h1v1h-1zM266 423h1v1h-1zM269 423h1v1h-1zM276 423h1v1h-1zM280 423h1v1h-1zM283 423h1v1h-1zM286 423h1v1h-1zM195 424h1v1h-1zM198 424h1v1h-1zM202 424h1v1h-1zM206 424h1v1h-1zM212 424h1v1h-1zM215 424h1v1h-1zM218 424h1v1h-1zM221 424h1v1h-1zM228 424h1v1h-1zM232 424h1v1h-1zM235 424h1v1h-1zM238 424h1v1h-1zM243 424h1v1h-1zM246 424h1v1h-1zM250 424h1v1h-1zM254 424h1v1h-1zM260 424h1v1h-1zM263 424h1v1h-1zM266 424h1v1h-1zM269 424h1v1h-1zM277 424h1v1h-1zM280 424h1v1h-1zM283 424h1v1h-1zM201 425h1v1h-1zM205 425h1v1h-1zM212 425h1v1h-1zM215 425h1v1h-1zM218 425h1v1h-1zM221 425h1v1h-1zM228 425h1v1h-1zM231 425h1v1h-1zM235 425h1v1h-1zM238 425h1v1h-1zM244 425h1v1h-1zM247 425h1v1h-1zM250 425h1v1h-1zM254 425h1v1h-1zM260 425h1v1h-1zM263 425h1v1h-1zM266 425h1v1h-1zM270 425h1v1h-1zM277 425h1v1h-1zM205 426h1v1h-1zM211 426h1v1h-1zM215 426h1v1h-1zM218 426h1v1h-1zM221 426h1v1h-1zM228 426h1v1h-1zM231 426h1v1h-1zM235 426h1v1h-1zM238 426h1v1h-1zM244 426h1v1h-1zM247 426h1v1h-1zM250 426h1v1h-1zM254 426h1v1h-1zM260 426h1v1h-1zM264 426h1v1h-1zM267 426h1v1h-1zM270 426h1v1h-1zM211 427h1v1h-1zM215 427h1v1h-1zM218 427h1v1h-1zM221 427h1v1h-1zM228 427h1v1h-1zM231 427h1v1h-1zM235 427h1v1h-1zM238 427h1v1h-1zM244 427h1v1h-1zM247 427h1v1h-1zM250 427h1v1h-1zM254 427h1v1h-1zM260 427h1v1h-1zM264 427h1v1h-1zM267 427h1v1h-1zM218 428h1v1h-1zM221 428h1v1h-1zM228 428h1v1h-1zM231 428h1v1h-1zM235 428h1v1h-1zM238 428h1v1h-1zM244 428h1v1h-1zM247 428h1v1h-1zM250 428h1v1h-1zM254 428h1v1h-1zM260 428h1v1h-1zM228 429h1v1h-1zM231 429h1v1h-1zM235 429h1v1h-1zM238 429h1v1h-1zM244 429h1v1h-1zM247 429h1v1h-1zM250 429h1v1h-1zM254 429h1v1h-1z"/>
<path fill="#0000ff" d="M189 31h1v1h-1zM192 31h1v1h-1zM195 31h1v1h-1zM188 32h2v1h-2zM191 32h3v1h-3zM195 32h2v1h-2zM189 33h1v1h-1zM192 33h1v1h-1zM195 33h1v1h-1zM190 34h1v1h-1zM192 34h1v1h-1zM194 34h1v1h-1zM158 35h1v1h-1zM174 35h1v1h-1zM191 35h3v1h-3zM159 36h1v1h-1zM173 36h1v1h-1zM192 36h1v1h-1zM160 37h1v1h-1zM172 37h1v1h-1zM190 37h5v1h-5zM161 38h1v1h-1zM171 38h1v1h-1zM192 38h1v1h-1zM161 39h1v1h-1zM171 39h1v1h-1zM192 39h1v1h-1zM162 40h1v1h-1zM170 40h1v1h-1zM162 41h1v1h-1zM170 41h1v1h-1zM162 42h1v1h-1zM170 42h1v1h-1zM158 43h17v1h-17zM162 44h1v1h-1zM170 44h1v1h-1zM162 45h1v1h-1zM170 45h1v1h-1zM162 46h1v1h-1zM170 46h1v1h-1zM161 47h1v1h-1zM171 47h1v1h-1zM161 48h1v1h-1zM171 48h1v1h-1zM160 49h1v1h-1zM172 49h1v1h-1zM159 50h1v1h-1zM173 50h1v1h-1zM158 51h1v1h-1zM174 51h1v1h-1zM267 91h5v1h-5zM266 92h1v1h-1zM272 92h2v1h-2zM265 93h1v1h-1zM274 93h1v1h-1zM266 94h1v1h-1zM275 94h1v1h-1zM267 95h1v1h-1zM276 95h1v1h-1zM268 96h1v1h-1zM276 96h1v1h-1zM268 97h1v1h-1zM277 97h1v1h-1zM284 97h1v1h-1zM289 97h3v1h-3zM296 97h1v1h-1zM269 98h1v1h-1zM277 98h1v1h-1zM284 98h1v1h-1zM288 98h1v1h-1zM292 98h1v1h-1zM296 98h1v1h-1zM269 99h1v1h-1zM277 99h1v1h-1zM284 99h1v1h-1zM288 99h1v1h-1zM292 99h1v1h-1zM296 99h1v1h-1zM269 100h1v1h-1zM277 100h1v1h-1zM284 100h1v1h-1zM288 100h1v1h-1zM292 100h1v1h-1zM296 100h1v1h-1zM268 101h1v1h-1zM277 101h1v1h-1zM284 101h1v1h-1zM289 101h3v1h-3zM296 101h1v1h-1zM268 102h1v1h-1zM276 102h1v1h-1zM284 102h1v1h-1zM296 102h1v1h-1zM267 103h1v1h-1zM276 103h1v1h-1zM285 103h1v1h-1zM295 103h1v1h-1zM266 104h1v1h-1zM275 104h1v1h-1zM286 104h2v1h-2zM293 104h2v1h-2zM265 105h1v1h-1zM274 105h1v1h-1zM288 105h5v1h-5zM266 106h1v1h-1zM272 106h2v1h-2zM290 106h1v1h-1zM267 107h5v1h-5zM290 107h1v1h-1zM290 108h1v1h-1zM286 109h9v1h-9zM290 110h1v1h-1zM290 111h1v1h-1zM290 112h1v1h-1zM290 113h1v1h-1zM140 122h1v1h-1zM146 122h1v1h-1zM152 122h1v1h-1zM140 123h1v1h-1zM146 123h1v1h-1zM152 123h1v1h-1zM273 123h1v1h-1zM139 124h3v1h-3zM144 124h5v1h-5zM151 124h3v1h-3zM272 124h3v1h-3zM140 125h1v1h-1zM146 125h1v1h-1zM152 125h1v1h-1zM273 125h1v1h-1zM278 125h1v1h-1zM140 126h1v1h-1zM146 126h1v1h-1zM152 126h1v1h-1zM277 126h3v1h-3zM141 127h1v1h-1zM146 127h1v1h-1zM151 127h1v1h-1zM278 127h1v1h-1zM141 128h1v1h-1zM146 128h1v1h-1zM151 128h1v1h-1zM142 129h2v1h-2zM146 129h1v1h-1zM149 129h2v1h-2zM144 130h5v1h-5zM146 131h1v1h-1zM146 132h1v1h-1zM146 133h1v1h-1zM142 134h9v1h-9zM146 135h1v1h-1zM372 135h3v1h-3zM146 136h1v1h-1zM371 136h1v1h-1zM375 136h1v1h-1zM146 137h1v1h-1zM371 137h1v1h-1zM375 137h1v1h-1zM146 138h1v1h-1zM371 138h1v1h-1zM375 138h1v1h-1zM372 139h3v1h-3zM371 140h1v1h-1zM375 140h1v1h-1zM97 141h1v1h-1zM100 141h1v1h-1zM103 141h1v1h-1zM371 141h1v1h-1zM375 141h1v1h-1zM96 142h2v1h-2zM99 142h3v1h-3zM103 142h2v1h-2zM371 142h1v1h-1zM375 142h1v1h-1zM97 143h1v1h-1zM100 143h1v1h-1zM103 143h1v1h-1zM372 143h3v1h-3zM98 144h1v1h-1zM100 144h1v1h-1zM102 144h1v1h-1zM165 144h1v1h-1zM99 145h3v1h-3zM164 145h3v1h-3zM100 146h1v1h-1zM165 146h1v1h-1zM98 147h5v1h-5zM100 148h1v1h-1zM379 148h1v1h-1zM382 148h1v1h-1zM385 148h1v1h-1zM100 149h1v1h-1zM379 149h1v1h-1zM381 149h1v1h-1zM383 149h1v1h-1zM385 149h1v1h-1zM379 150h1v1h-1zM382 150h1v1h-1zM385 150h1v1h-1zM380 151h1v1h-1zM384 151h1v1h-1zM381 152h3v1h-3zM382 153h1v1h-1zM380 154h5v1h-5zM382 155h1v1h-1zM382 156h1v1h-1zM627 166h3v1h-3zM626 167h1v1h-1zM630 167h1v1h-1zM625 168h1v1h-1zM631 168h1v1h-1zM625 169h1v1h-1zM631 169h1v1h-1zM625 170h1v1h-1zM631 170h1v1h-1zM80 171h1v1h-1zM87 171h3v1h-3zM626 171h1v1h-1zM630 171h1v1h-1zM79 172h2v1h-2zM86 172h1v1h-1zM90 172h1v1h-1zM624 172h1v1h-1zM626 172h1v1h-1zM630 172h1v1h-1zM78 173h1v1h-1zM80 173h1v1h-1zM90 173h1v1h-1zM625 173h1v1h-1zM631 173h1v1h-1zM80 174h1v1h-1zM90 174h1v1h-1zM632 174h1v1h-1zM80 175h1v1h-1zM89 175h1v1h-1zM80 176h1v1h-1zM88 176h1v1h-1zM80 177h1v1h-1zM87 177h1v1h-1zM80 178h1v1h-1zM86 178h1v1h-1zM78 179h5v1h-5zM86 179h5v1h-5zM630 206h3v1h-3zM631 207h2v1h-2zM630 208h1v1h-1zM632 208h1v1h-1zM625 209h1v1h-1zM629 209h1v1h-1zM626 210h1v1h-1zM628 210h1v1h-1zM627 211h1v1h-1zM626 212h1v1h-1zM628 212h1v1h-1zM625 213h1v1h-1zM629 213h1v1h-1zM624 214h1v1h-1zM625 246h2v1h-2zM630 246h2v1h-2zM624 247h1v1h-1zM627 247h1v1h-1zM629 247h1v1h-1zM632 247h1v1h-1zM624 248h1v1h-1zM627 248h1v1h-1zM629 248h1v1h-1zM632 248h1v1h-1zM625 249h1v1h-1zM627 249h1v1h-1zM629 249h1v1h-1zM631 249h1v1h-1zM628 250h1v1h-1zM628 251h1v1h-1zM628 252h1v1h-1zM628 253h1v1h-1zM628 254h1v1h-1zM438 265h1v1h-1zM442 265h1v1h-1zM446 265h1v1h-1zM439 266h1v1h-1zM441 266h1v1h-1zM443 266h1v1h-1zM445 266h1v1h-1zM447 266h1v1h-1zM440 267h1v1h-1zM444 267h1v1h-1zM448 267h1v1h-1zM440 268h1v1h-1zM444 268h1v1h-1zM448 268h1v1h-1zM440 269h1v1h-1zM444 269h1v1h-1zM448 269h1v1h-1zM440 270h1v1h-1zM444 270h1v1h-1zM448 270h1v1h-1zM440 271h1v1h-1zM444 271h1v1h-1zM448 271h1v1h-1zM440 272h1v1h-1zM444 272h1v1h-1zM448 272h1v1h-1zM440 273h1v1h-1zM444 273h1v1h-1zM448 273h1v1h-1zM440 274h1v1h-1zM444 274h1v1h-1zM448 274h1v1h-1zM440 275h1v1h-1zM444 275h1v1h-1zM448 275h1v1h-1zM440 276h1v1h-1zM444 276h1v1h-1zM448 276h1v1h-1zM453 276h1v1h-1zM626 276h3v1h-3zM440 277h1v1h-1zM444 277h1v1h-1zM448 277h1v1h-1zM452 277h3v1h-3zM625 277h1v1h-1zM629 277h2v1h-2zM440 278h1v1h-1zM444 278h1v1h-1zM448 278h1v1h-1zM453 278h1v1h-1zM626 278h1v1h-1zM630 278h1v1h-1zM440 279h1v1h-1zM444 279h1v1h-1zM448 279h1v1h-1zM453 279h1v1h-1zM627 279h1v1h-1zM631 279h1v1h-1zM449 280h1v1h-1zM452 280h1v1h-1zM627 280h1v1h-1zM631 280h1v1h-1zM450 281h2v1h-2zM627 281h1v1h-1zM631 281h1v1h-1zM626 282h1v1h-1zM630 282h1v1h-1zM625 283h1v1h-1zM629 283h2v1h-2zM626 284h3v1h-3zM437 296h1v1h-1zM440 296h1v1h-1zM443 296h1v1h-1zM437 297h1v1h-1zM439 297h1v1h-1zM441 297h1v1h-1zM443 297h1v1h-1zM437 298h1v1h-1zM440 298h1v1h-1zM443 298h1v1h-1zM438 299h1v1h-1zM442 299h1v1h-1zM439 300h3v1h-3zM440 301h1v1h-1zM438 302h5v1h-5zM440 303h1v1h-1zM440 304h1v1h-1zM625 346h1v1h-1zM628 346h1v1h-1zM631 346h1v1h-1zM624 347h2v1h-2zM627 347h3v1h-3zM631 347h2v1h-2zM625 348h1v1h-1zM628 348h1v1h-1zM631 348h1v1h-1zM626 349h1v1h-1zM628 349h1v1h-1zM630 349h1v1h-1zM627 350h3v1h-3zM628 351h1v1h-1zM626 352h5v1h-5zM628 353h1v1h-1zM628 354h1v1h-1zM625 356h1v1h-1zM628 356h1v1h-1zM631 356h1v1h-1zM625 357h1v1h-1zM627 357h1v1h-1zM629 357h1v1h-1zM631 357h1v1h-1zM625 358h1v1h-1zM628 358h1v1h-1zM631 358h1v1h-1zM626 359h1v1h-1zM630 359h1v1h-1zM627 360h3v1h-3zM628 361h1v1h-1zM626 362h5v1h-5zM628 363h1v1h-1zM628 364h1v1h-1zM84 378h3v1h-3zM83 379h1v1h-1zM87 379h2v1h-2zM84 380h1v1h-1zM88 380h1v1h-1zM85 381h1v1h-1zM89 381h1v1h-1zM85 382h1v1h-1zM89 382h1v1h-1zM85 383h1v1h-1zM89 383h1v1h-1zM84 384h1v1h-1zM88 384h1v1h-1zM83 385h1v1h-1zM87 385h2v1h-2zM84 386h3v1h-3zM104 394h5v1h-5zM101 395h3v1h-3zM109 395h1v1h-1zM100 396h1v1h-1zM110 396h3v1h-3zM99 397h1v1h-1zM109 397h1v1h-1zM113 397h1v1h-1zM98 398h1v1h-1zM108 398h1v1h-1zM114 398h1v1h-1zM198 398h3v1h-3zM108 399h1v1h-1zM114 399h1v1h-1zM197 399h1v1h-1zM201 399h2v1h-2zM100 400h3v1h-3zM108 400h1v1h-1zM114 400h1v1h-1zM198 400h1v1h-1zM202 400h1v1h-1zM99 401h1v1h-1zM103 401h1v1h-1zM109 401h1v1h-1zM113 401h1v1h-1zM199 401h1v1h-1zM203 401h1v1h-1zM98 402h1v1h-1zM104 402h1v1h-1zM110 402h3v1h-3zM199 402h1v1h-1zM203 402h1v1h-1zM218 402h1v1h-1zM221 402h1v1h-1zM98 403h1v1h-1zM104 403h1v1h-1zM199 403h1v1h-1zM203 403h1v1h-1zM218 403h1v1h-1zM221 403h1v1h-1zM98 404h1v1h-1zM104 404h1v1h-1zM114 404h1v1h-1zM198 404h1v1h-1zM202 404h1v1h-1zM218 404h1v1h-1zM221 404h1v1h-1zM99 405h1v1h-1zM103 405h1v1h-1zM113 405h1v1h-1zM197 405h1v1h-1zM201 405h2v1h-2zM218 405h1v1h-1zM221 405h1v1h-1zM100 406h3v1h-3zM112 406h1v1h-1zM198 406h3v1h-3zM218 406h5v1h-5zM103 407h1v1h-1zM109 407h3v1h-3zM221 407h1v1h-1zM104 408h5v1h-5zM221 408h1v1h-1zM221 409h1v1h-1zM221 410h1v1h-1z"/>
<path fill="#ff0000" d="M98 82h3v1h-3zM99 83h2v1h-2zM98 84h1v1h-1zM100 84h1v1h-1zM94 85h2v1h-2zM97 85h1v1h-1zM93 86h1v1h-1zM96 86h1v1h-1zM92 87h1v1h-1zM97 87h1v1h-1zM92 88h1v1h-1zM97 88h1v1h-1zM93 89h1v1h-1zM96 89h1v1h-1zM94 90h2v1h-2zM325 92h3v1h-3zM324 93h1v1h-1zM328 93h1v1h-1zM324 94h1v1h-1zM328 94h1v1h-1zM324 95h1v1h-1zM328 95h1v1h-1zM325 96h4v1h-4zM328 97h1v1h-1zM71 98h3v1h-3zM81 98h3v1h-3zM328 98h1v1h-1zM70 99h1v1h-1zM74 99h1v1h-1zM80 99h1v1h-1zM84 99h1v1h-1zM324 99h1v1h-1zM328 99h1v1h-1zM69 100h1v1h-1zM75 100h1v1h-1zM79 100h1v1h-1zM85 100h1v1h-1zM325 100h3v1h-3zM69 101h1v1h-1zM75 101h1v1h-1zM79 101h1v1h-1zM85 101h1v1h-1zM343 101h1v1h-1zM69 102h1v1h-1zM75 102h1v1h-1zM79 102h1v1h-1zM85 102h1v1h-1zM337 102h2v1h-2zM342 102h1v1h-1zM70 103h1v1h-1zM76 103h1v1h-1zM78 103h1v1h-1zM84 103h1v1h-1zM339 103h1v1h-1zM342 103h1v1h-1zM71 104h1v1h-1zM76 104h1v1h-1zM78 104h1v1h-1zM83 104h1v1h-1zM339 104h1v1h-1zM342 104h1v1h-1zM76 105h1v1h-1zM78 105h1v1h-1zM338 105h1v1h-1zM342 105h1v1h-1zM76 106h1v1h-1zM78 106h1v1h-1zM338 106h1v1h-1zM342 106h1v1h-1zM77 107h1v1h-1zM337 107h1v1h-1zM342 107h1v1h-1zM77 108h1v1h-1zM337 108h8v1h-8zM77 109h1v1h-1zM342 109h1v1h-1zM77 110h1v1h-1zM164 110h6v1h-6zM77 111h1v1h-1zM168 111h2v1h-2zM77 112h1v1h-1zM167 112h1v1h-1zM169 112h1v1h-1zM77 113h1v1h-1zM166 113h1v1h-1zM169 113h1v1h-1zM77 114h1v1h-1zM165 114h1v1h-1zM169 114h1v1h-1zM164 115h1v1h-1zM169 115h1v1h-1zM156 116h5v1h-5zM163 116h1v1h-1zM155 117h1v1h-1zM161 117h2v1h-2zM154 118h1v1h-1zM162 118h1v1h-1zM153 119h1v1h-1zM163 119h1v1h-1zM153 120h1v1h-1zM163 120h1v1h-1zM153 121h1v1h-1zM163 121h1v1h-1zM153 122h1v1h-1zM163 122h1v1h-1zM153 123h1v1h-1zM163 123h1v1h-1zM154 124h1v1h-1zM162 124h1v1h-1zM155 125h1v1h-1zM161 125h1v1h-1zM156 126h5v1h-5zM271 129h1v1h-1zM267 132h1v1h-1zM263 134h1v1h-1zM625 136h1v1h-1zM631 136h1v1h-1zM259 137h1v1h-1zM626 137h1v1h-1zM630 137h1v1h-1zM627 138h3v1h-3zM255 139h1v1h-1zM626 139h1v1h-1zM630 139h1v1h-1zM625 140h1v1h-1zM631 140h1v1h-1zM625 141h1v1h-1zM631 141h1v1h-1zM167 142h1v1h-1zM251 142h1v1h-1zM625 142h1v1h-1zM631 142h1v1h-1zM166 143h3v1h-3zM626 143h1v1h-1zM630 143h1v1h-1zM167 144h1v1h-1zM247 144h1v1h-1zM627 144h3v1h-3zM243 147h1v1h-1zM239 149h1v1h-1zM235 152h1v1h-1zM116 154h5v1h-5zM231 154h1v1h-1zM114 155h2v1h-2zM121 155h2v1h-2zM113 156h1v1h-1zM123 156h1v1h-1zM112 157h1v1h-1zM124 157h1v1h-1zM227 157h1v1h-1zM111 158h1v1h-1zM125 158h1v1h-1zM439 158h5v1h-5zM111 159h1v1h-1zM125 159h1v1h-1zM223 159h1v1h-1zM442 159h2v1h-2zM110 160h1v1h-1zM126 160h1v1h-1zM441 160h1v1h-1zM443 160h1v1h-1zM110 161h1v1h-1zM126 161h1v1h-1zM440 161h1v1h-1zM443 161h1v1h-1zM110 162h1v1h-1zM118 162h1v1h-1zM126 162h1v1h-1zM219 162h1v1h-1zM439 162h1v1h-1zM443 162h1v1h-1zM110 163h1v1h-1zM126 163h1v1h-1zM438 163h1v1h-1zM110 164h1v1h-1zM126 164h1v1h-1zM215 164h1v1h-1zM429 164h1v1h-1zM437 164h1v1h-1zM111 165h1v1h-1zM125 165h1v1h-1zM430 165h1v1h-1zM436 165h1v1h-1zM111 166h1v1h-1zM125 166h1v1h-1zM431 166h1v1h-1zM435 166h1v1h-1zM112 167h1v1h-1zM124 167h1v1h-1zM211 167h1v1h-1zM432 167h1v1h-1zM434 167h1v1h-1zM113 168h1v1h-1zM123 168h1v1h-1zM433 168h1v1h-1zM114 169h2v1h-2zM121 169h2v1h-2zM207 169h1v1h-1zM432 169h1v1h-1zM434 169h1v1h-1zM116 170h5v1h-5zM431 170h1v1h-1zM435 170h1v1h-1zM430 171h1v1h-1zM436 171h1v1h-1zM203 172h1v1h-1zM429 172h1v1h-1zM437 172h1v1h-1zM428 173h1v1h-1zM138 174h1v1h-1zM199 174h1v1h-1zM427 174h1v1h-1zM137 175h3v1h-3zM138 176h1v1h-1zM624 176h1v1h-1zM626 176h1v1h-1zM628 176h1v1h-1zM142 177h1v1h-1zM195 177h1v1h-1zM625 177h1v1h-1zM627 177h1v1h-1zM629 177h1v1h-1zM631 177h1v1h-1zM625 178h1v1h-1zM627 178h1v1h-1zM629 178h3v1h-3zM191 179h1v1h-1zM625 179h1v1h-1zM627 179h1v1h-1zM629 179h1v1h-1zM631 179h1v1h-1zM143 180h1v1h-1zM625 180h1v1h-1zM627 180h1v1h-1zM629 180h1v1h-1zM631 180h1v1h-1zM625 181h1v1h-1zM627 181h1v1h-1zM629 181h1v1h-1zM631 181h1v1h-1zM187 182h1v1h-1zM625 182h1v1h-1zM627 182h1v1h-1zM629 182h1v1h-1zM631 182h1v1h-1zM143 183h1v1h-1zM625 183h1v1h-1zM627 183h1v1h-1zM630 183h1v1h-1zM183 184h1v1h-1zM629 184h1v1h-1zM631 184h1v1h-1zM144 186h1v1h-1zM179 187h1v1h-1zM446 188h1v1h-1zM144 189h1v1h-1zM175 189h1v1h-1zM440 189h2v1h-2zM445 189h1v1h-1zM442 190h1v1h-1zM445 190h1v1h-1zM442 191h1v1h-1zM445 191h1v1h-1zM145 192h1v1h-1zM171 192h1v1h-1zM441 192h1v1h-1zM445 192h1v1h-1zM441 193h1v1h-1zM445 193h1v1h-1zM167 194h1v1h-1zM440 194h1v1h-1zM445 194h1v1h-1zM145 195h1v1h-1zM440 195h8v1h-8zM445 196h1v1h-1zM163 197h1v1h-1zM146 198h1v1h-1zM159 199h1v1h-1zM146 201h1v1h-1zM155 202h1v1h-1zM147 204h1v1h-1zM151 204h1v1h-1zM147 207h1v1h-1zM143 209h1v1h-1zM148 210h1v1h-1zM139 212h1v1h-1zM148 213h1v1h-1zM135 214h1v1h-1zM149 216h1v1h-1zM625 216h1v1h-1zM628 216h1v1h-1zM630 216h2v1h-2zM131 217h1v1h-1zM624 217h2v1h-2zM628 217h2v1h-2zM632 217h1v1h-1zM625 218h1v1h-1zM627 218h1v1h-1zM629 218h1v1h-1zM632 218h1v1h-1zM127 219h1v1h-1zM149 219h1v1h-1zM625 219h1v1h-1zM627 219h1v1h-1zM630 219h2v1h-2zM625 220h1v1h-1zM627 220h1v1h-1zM631 220h1v1h-1zM626 221h1v1h-1zM632 221h1v1h-1zM150 222h1v1h-1zM626 222h1v1h-1zM632 222h1v1h-1zM626 223h1v1h-1zM632 223h1v1h-1zM631 224h1v1h-1zM150 225h1v1h-1zM151 228h1v1h-1zM152 231h1v1h-1zM152 234h1v1h-1zM153 237h1v1h-1zM153 240h1v1h-1zM154 243h1v1h-1zM154 246h1v1h-1zM155 249h1v1h-1zM155 252h1v1h-1zM74 253h3v1h-3zM75 254h2v1h-2zM74 255h1v1h-1zM76 255h1v1h-1zM156 255h1v1h-1zM70 256h2v1h-2zM73 256h1v1h-1zM69 257h1v1h-1zM72 257h1v1h-1zM68 258h1v1h-1zM73 258h1v1h-1zM156 258h1v1h-1zM68 259h1v1h-1zM73 259h1v1h-1zM69 260h1v1h-1zM72 260h1v1h-1zM70 261h2v1h-2zM157 261h1v1h-1zM157 264h1v1h-1zM627 266h3v1h-3zM158 267h1v1h-1zM625 267h2v1h-2zM630 267h2v1h-2zM625 268h1v1h-1zM631 268h1v1h-1zM624 269h1v1h-1zM632 269h1v1h-1zM158 270h1v1h-1zM624 270h1v1h-1zM628 270h1v1h-1zM632 270h1v1h-1zM624 271h1v1h-1zM632 271h1v1h-1zM76 272h1v1h-1zM625 272h1v1h-1zM631 272h1v1h-1zM75 273h2v1h-2zM159 273h1v1h-1zM625 273h2v1h-2zM630 273h2v1h-2zM74 274h1v1h-1zM76 274h1v1h-1zM627 274h3v1h-3zM76 275h1v1h-1zM76 276h1v1h-1zM159 276h1v1h-1zM76 277h1v1h-1zM76 278h1v1h-1zM76 279h1v1h-1zM160 279h1v1h-1zM74 280h5v1h-5zM161 282h1v1h-1zM161 285h1v1h-1zM162 288h1v1h-1zM162 291h1v1h-1zM163 294h1v1h-1zM163 297h1v1h-1zM164 300h1v1h-1zM164 303h1v1h-1zM165 306h1v1h-1zM630 306h3v1h-3zM631 307h2v1h-2zM630 308h1v1h-1zM632 308h1v1h-1zM165 309h1v1h-1zM626 309h2v1h-2zM629 309h1v1h-1zM625 310h1v1h-1zM628 310h1v1h-1zM624 311h1v1h-1zM629 311h1v1h-1zM166 312h1v1h-1zM624 312h1v1h-1zM629 312h1v1h-1zM625 313h1v1h-1zM628 313h1v1h-1zM626 314h2v1h-2zM166 315h1v1h-1zM631 316h1v1h-1zM625 317h2v1h-2zM630 317h1v1h-1zM167 318h1v1h-1zM627 318h1v1h-1zM630 318h1v1h-1zM627 319h1v1h-1zM630 319h1v1h-1zM626 320h1v1h-1zM630 320h1v1h-1zM167 321h1v1h-1zM626 321h1v1h-1zM630 321h1v1h-1zM625 322h1v1h-1zM630 322h1v1h-1zM625 323h8v1h-8zM168 324h1v1h-1zM630 324h1v1h-1zM168 327h1v1h-1zM169 330h1v1h-1zM166 332h1v1h-1zM165 333h3v1h-3zM166 334h1v1h-1zM157 344h1v1h-1zM156 345h1v1h-1zM146 346h2v1h-2zM155 346h1v1h-1zM148 347h1v1h-1zM155 347h1v1h-1zM149 348h1v1h-1zM155 348h1v1h-1zM149 349h1v1h-1zM155 349h1v1h-1zM149 350h1v1h-1zM155 350h1v1h-1zM148 351h1v1h-1zM155 351h1v1h-1zM148 352h1v1h-1zM155 352h1v1h-1zM147 353h1v1h-1zM155 353h1v1h-1zM147 354h1v1h-1zM155 354h1v1h-1zM146 355h1v1h-1zM155 355h1v1h-1zM146 356h1v1h-1zM155 356h1v1h-1zM145 357h1v1h-1zM155 357h1v1h-1zM145 358h15v1h-15zM155 359h1v1h-1zM155 360h1v1h-1zM310 386h5v1h-5zM310 387h1v1h-1zM310 388h1v1h-1zM310 389h4v1h-4zM314 390h1v1h-1zM314 391h1v1h-1zM314 392h1v1h-1zM310 393h1v1h-1zM314 393h1v1h-1zM311 394h3v1h-3zM285 396h3v1h-3zM283 397h2v1h-2zM288 397h2v1h-2zM283 398h1v1h-1zM289 398h1v1h-1zM282 399h1v1h-1zM290 399h1v1h-1zM282 400h1v1h-1zM286 400h1v1h-1zM290 400h1v1h-1zM282 401h1v1h-1zM290 401h1v1h-1zM283 402h1v1h-1zM289 402h1v1h-1zM283 403h2v1h-2zM288 403h2v1h-2zM285 404h3v1h-3zM177 436h3v1h-3zM175 437h2v1h-2zM180 437h2v1h-2zM175 438h1v1h-1zM181 438h1v1h-1zM203 438h5v1h-5zM174 439h1v1h-1zM182 439h1v1h-1zM202 439h1v1h-1zM208 439h1v1h-1zM174 440h1v1h-1zM178 440h1v1h-1zM182 440h1v1h-1zM201 440h1v1h-1zM209 440h1v1h-1zM174 441h1v1h-1zM182 441h1v1h-1zM200 441h1v1h-1zM210 441h1v1h-1zM175 442h1v1h-1zM181 442h1v1h-1zM199 442h1v1h-1zM211 442h1v1h-1zM175 443h2v1h-2zM180 443h2v1h-2zM199 443h1v1h-1zM211 443h1v1h-1zM177 444h3v1h-3zM199 444h1v1h-1zM211 444h1v1h-1zM199 445h1v1h-1zM211 445h1v1h-1zM199 446h1v1h-1zM211 446h1v1h-1zM200 447h1v1h-1zM210 447h1v1h-1zM201 448h1v1h-1zM209 448h1v1h-1zM201 449h1v1h-1zM209 449h1v1h-1zM197 450h1v1h-1zM201 450h1v1h-1zM209 450h1v1h-1zM198 451h1v1h-1zM200 451h1v1h-1zM210 451h1v1h-1zM199 452h1v1h-1zM211 452h1v1h-1zM212 453h1v1h-1zM213 454h1v1h-1z"/>
<path fill="#ffff00" d="M254 68h1v1h-1zM261 68h3v1h-3zM253 69h2v1h-2zM260 69h1v1h-1zM264 69h1v1h-1zM366 69h1v1h-1zM372 69h1v1h-1zM376 69h3v1h-3zM252 70h1v1h-1zM254 70h1v1h-1zM260 70h1v1h-1zM264 70h1v1h-1zM365 70h2v1h-2zM372 70h2v1h-2zM375 70h1v1h-1zM379 70h1v1h-1zM254 71h1v1h-1zM260 71h1v1h-1zM264 71h1v1h-1zM364 71h1v1h-1zM366 71h1v1h-1zM372 71h1v1h-1zM374 71h1v1h-1zM380 71h1v1h-1zM254 72h1v1h-1zM260 72h1v1h-1zM264 72h1v1h-1zM277 72h1v1h-1zM366 72h1v1h-1zM371 72h1v1h-1zM373 72h1v1h-1zM380 72h1v1h-1zM254 73h1v1h-1zM260 73h1v1h-1zM264 73h1v1h-1zM275 73h5v1h-5zM366 73h1v1h-1zM370 73h1v1h-1zM374 73h1v1h-1zM380 73h1v1h-1zM254 74h1v1h-1zM260 74h1v1h-1zM264 74h1v1h-1zM277 74h1v1h-1zM366 74h1v1h-1zM370 74h1v1h-1zM375 74h1v1h-1zM379 74h1v1h-1zM254 75h1v1h-1zM260 75h1v1h-1zM264 75h1v1h-1zM277 75h1v1h-1zM279 75h2v1h-2zM366 75h1v1h-1zM370 75h1v1h-1zM376 75h3v1h-3zM252 76h5v1h-5zM261 76h3v1h-3zM277 76h2v1h-2zM281 76h1v1h-1zM366 76h1v1h-1zM370 76h1v1h-1zM377 76h1v1h-1zM277 77h1v1h-1zM281 77h1v1h-1zM366 77h1v1h-1zM370 77h1v1h-1zM378 77h1v1h-1zM277 78h1v1h-1zM280 78h1v1h-1zM367 78h1v1h-1zM369 78h1v1h-1zM379 78h1v1h-1zM277 79h1v1h-1zM280 79h1v1h-1zM368 79h1v1h-1zM380 79h1v1h-1zM281 80h1v1h-1zM368 80h1v1h-1zM380 80h1v1h-1zM368 81h1v1h-1zM380 81h1v1h-1zM368 82h1v1h-1zM380 82h1v1h-1zM368 83h1v1h-1zM380 83h1v1h-1zM379 84h1v1h-1zM378 85h1v1h-1zM391 92h1v1h-1zM389 93h5v1h-5zM391 94h1v1h-1zM391 95h1v1h-1zM393 95h2v1h-2zM391 96h2v1h-2zM395 96h1v1h-1zM391 97h1v1h-1zM395 97h1v1h-1zM391 98h1v1h-1zM394 98h1v1h-1zM391 99h1v1h-1zM394 99h1v1h-1zM395 100h1v1h-1zM273 129h1v1h-1zM275 130h1v1h-1zM131 135h1v1h-1zM131 136h1v1h-1zM127 137h9v1h-9zM131 138h1v1h-1zM131 139h1v1h-1zM131 140h1v1h-1zM180 140h1v1h-1zM131 141h1v1h-1zM135 141h3v1h-3zM131 142h1v1h-1zM134 142h1v1h-1zM138 142h1v1h-1zM131 143h3v1h-3zM139 143h1v1h-1zM176 143h1v1h-1zM131 144h1v1h-1zM139 144h1v1h-1zM131 145h1v1h-1zM139 145h1v1h-1zM131 146h1v1h-1zM138 146h1v1h-1zM172 146h1v1h-1zM625 146h1v1h-1zM632 146h1v1h-1zM131 147h1v1h-1zM137 147h1v1h-1zM170 147h1v1h-1zM626 147h6v1h-6zM131 148h1v1h-1zM137 148h1v1h-1zM169 148h1v1h-1zM627 148h1v1h-1zM630 148h1v1h-1zM131 149h1v1h-1zM137 149h1v1h-1zM168 149h1v1h-1zM627 149h1v1h-1zM630 149h1v1h-1zM138 150h1v1h-1zM158 150h1v1h-1zM166 150h1v1h-1zM627 150h1v1h-1zM630 150h1v1h-1zM139 151h1v1h-1zM157 151h3v1h-3zM627 151h1v1h-1zM630 151h1v1h-1zM158 152h1v1h-1zM165 152h1v1h-1zM627 152h1v1h-1zM630 152h1v1h-1zM626 153h6v1h-6zM625 154h1v1h-1zM632 154h1v1h-1zM37 174h3v1h-3zM36 175h1v1h-1zM40 175h1v1h-1zM36 176h1v1h-1zM40 176h1v1h-1zM36 177h1v1h-1zM40 177h1v1h-1zM37 178h3v1h-3zM38 179h1v1h-1zM36 180h5v1h-5zM38 181h1v1h-1zM38 182h1v1h-1zM627 188h3v1h-3zM626 189h1v1h-1zM630 189h1v1h-1zM626 190h1v1h-1zM630 190h1v1h-1zM624 191h4v1h-4zM629 191h4v1h-4zM624 193h9v1h-9zM26 197h1v1h-1zM38 197h1v1h-1zM27 198h1v1h-1zM37 198h1v1h-1zM27 199h1v1h-1zM37 199h1v1h-1zM28 200h2v1h-2zM35 200h2v1h-2zM30 201h5v1h-5zM28 202h2v1h-2zM35 202h2v1h-2zM27 203h1v1h-1zM37 203h1v1h-1zM27 204h1v1h-1zM37 204h1v1h-1zM26 205h1v1h-1zM38 205h1v1h-1zM26 206h1v1h-1zM38 206h1v1h-1zM26 207h1v1h-1zM38 207h1v1h-1zM95 207h5v1h-5zM26 208h1v1h-1zM38 208h1v1h-1zM94 208h1v1h-1zM100 208h1v1h-1zM26 209h1v1h-1zM38 209h1v1h-1zM93 209h1v1h-1zM101 209h1v1h-1zM27 210h1v1h-1zM37 210h1v1h-1zM93 210h1v1h-1zM101 210h1v1h-1zM27 211h1v1h-1zM37 211h1v1h-1zM93 211h1v1h-1zM101 211h1v1h-1zM28 212h2v1h-2zM35 212h2v1h-2zM93 212h1v1h-1zM101 212h1v1h-1zM30 213h5v1h-5zM93 213h1v1h-1zM101 213h1v1h-1zM94 214h1v1h-1zM100 214h1v1h-1zM95 215h5v1h-5zM97 216h1v1h-1zM97 217h1v1h-1zM405 217h3v1h-3zM97 218h1v1h-1zM121 218h1v1h-1zM404 218h1v1h-1zM408 218h1v1h-1zM93 219h9v1h-9zM120 219h3v1h-3zM404 219h1v1h-1zM408 219h1v1h-1zM97 220h1v1h-1zM121 220h1v1h-1zM404 220h1v1h-1zM408 220h1v1h-1zM97 221h1v1h-1zM405 221h3v1h-3zM97 222h1v1h-1zM406 222h1v1h-1zM97 223h1v1h-1zM404 223h5v1h-5zM406 224h1v1h-1zM406 225h1v1h-1zM626 226h1v1h-1zM629 226h1v1h-1zM632 226h1v1h-1zM626 227h1v1h-1zM629 227h1v1h-1zM631 227h1v1h-1zM625 228h1v1h-1zM628 228h1v1h-1zM631 228h1v1h-1zM624 229h1v1h-1zM627 229h1v1h-1zM630 229h1v1h-1zM626 231h1v1h-1zM629 231h1v1h-1zM632 231h1v1h-1zM626 232h1v1h-1zM629 232h1v1h-1zM631 232h1v1h-1zM625 233h1v1h-1zM628 233h1v1h-1zM631 233h1v1h-1zM624 234h1v1h-1zM627 234h1v1h-1zM630 234h1v1h-1zM627 296h3v1h-3zM626 297h1v1h-1zM630 297h1v1h-1zM626 298h1v1h-1zM630 298h1v1h-1zM393 299h3v1h-3zM626 299h1v1h-1zM630 299h1v1h-1zM392 300h1v1h-1zM396 300h1v1h-1zM627 300h3v1h-3zM392 301h1v1h-1zM628 301h1v1h-1zM392 302h1v1h-1zM626 302h5v1h-5zM392 303h4v1h-4zM628 303h1v1h-1zM392 304h1v1h-1zM396 304h1v1h-1zM628 304h1v1h-1zM392 305h1v1h-1zM396 305h1v1h-1zM392 306h1v1h-1zM396 306h1v1h-1zM393 307h3v1h-3zM95 322h3v1h-3zM94 323h1v1h-1zM98 323h1v1h-1zM94 324h1v1h-1zM98 324h1v1h-1zM94 325h1v1h-1zM98 325h1v1h-1zM95 326h3v1h-3zM627 326h1v1h-1zM96 327h1v1h-1zM625 327h5v1h-5zM94 328h5v1h-5zM627 328h1v1h-1zM96 329h1v1h-1zM627 329h1v1h-1zM629 329h2v1h-2zM96 330h1v1h-1zM627 330h2v1h-2zM631 330h1v1h-1zM627 331h1v1h-1zM631 331h1v1h-1zM627 332h1v1h-1zM630 332h1v1h-1zM627 333h1v1h-1zM630 333h1v1h-1zM631 334h1v1h-1zM104 335h3v1h-3zM103 336h1v1h-1zM107 336h1v1h-1zM107 337h1v1h-1zM107 338h1v1h-1zM106 339h1v1h-1zM105 340h1v1h-1zM104 341h1v1h-1zM103 342h1v1h-1zM103 343h5v1h-5zM381 388h3v1h-3zM380 389h1v1h-1zM384 389h1v1h-1zM380 390h1v1h-1zM384 390h1v1h-1zM380 391h1v1h-1zM384 391h1v1h-1zM381 392h3v1h-3zM382 393h1v1h-1zM380 394h5v1h-5zM382 395h1v1h-1zM382 396h1v1h-1zM304 427h1v1h-1zM308 427h1v1h-1zM312 427h1v1h-1zM305 428h1v1h-1zM307 428h1v1h-1zM309 428h1v1h-1zM311 428h1v1h-1zM313 428h1v1h-1zM306 429h1v1h-1zM310 429h1v1h-1zM314 429h1v1h-1zM318 429h1v1h-1zM306 430h1v1h-1zM310 430h1v1h-1zM314 430h1v1h-1zM317 430h2v1h-2zM306 431h1v1h-1zM310 431h1v1h-1zM314 431h1v1h-1zM316 431h1v1h-1zM318 431h1v1h-1zM306 432h1v1h-1zM310 432h1v1h-1zM314 432h2v1h-2zM318 432h1v1h-1zM306 433h1v1h-1zM310 433h1v1h-1zM314 433h1v1h-1zM318 433h1v1h-1zM306 434h1v1h-1zM310 434h1v1h-1zM314 434h1v1h-1zM318 434h1v1h-1zM306 435h1v1h-1zM310 435h1v1h-1zM314 435h1v1h-1zM318 435h1v1h-1zM306 436h1v1h-1zM310 436h1v1h-1zM314 436h1v1h-1zM318 436h1v1h-1zM306 437h1v1h-1zM310 437h1v1h-1zM314 437h1v1h-1zM318 437h1v1h-1zM306 438h1v1h-1zM310 438h1v1h-1zM314 438h1v1h-1zM318 438h1v1h-1zM306 439h1v1h-1zM310 439h1v1h-1zM314 439h1v1h-1zM318 439h1v1h-1zM306 440h1v1h-1zM310 440h1v1h-1zM315 440h1v1h-1zM317 440h1v1h-1zM306 441h1v1h-1zM310 441h1v1h-1zM316 441h1v1h-1zM315 442h1v1h-1zM317 442h1v1h-1zM314 443h1v1h-1zM318 443h1v1h-1z"/>
<filter id="crisp" x="0" y="0" width="640" height="480" filterUnits="userSpaceOnUse" color-interpolation-filters="sRGB"><feComponentTransfer><feFuncA type="gamma" amplitude="1" exponent="1" offset="0"/></feComponentTransfer></filter>
<g font-family="Liberation Mono, monospace" font-size="10px" filter="url(#crisp)">
<text x="486" y="14" fill="#ffffff">Astrolog 5.41G</text>
<text x="486" y="24" fill="#c0c0c0">Chart of the Moment</text>
<text x="486" y="34" fill="#ffffff">Sat April 11, 2026</text>
<text x="492" y="44" fill="#ffffff">8:17:00am (DT -8:00 GMT)</text>
<text x="486" y="54" fill="#c0c0c0">San Francisco, CA</text>
<text x="486" y="64" fill="#c0c0c0">122°41’00&quot;W 37°79’00&quot;N</text>
<text x="486" y="74" fill="#c0c0c0">Placidus houses.</text>
<text x="486" y="84" fill="#c0c0c0">Tropical, Geocentric.</text>
<text x="486" y="94" fill="#ffffff">Julian Day = 2461142.1368</text>
<text x="486" y="104" fill="#c0c0c0">Obliquity = 23°26’09&quot;</text>
<text x="486" y="114" fill="#c0c0c0">Sidereal time: 20:25:41</text>
<text x="486" y="124" fill="#c0c0c0">DeltaT =  95.5526</text>
<text x="492" y="144" fill="#ff0000">1st house:</text>
<text x="558" y="144" fill="#ffff00">24Tau28</text>
<text x="492" y="154" fill="#ffff00">2nd house:</text>
<text x="558" y="154" fill="#00ff00">20Gem23</text>
<text x="492" y="164" fill="#00ff00">3rd house:</text>
<text x="558" y="164" fill="#0000ff">11Can53</text>
<text x="492" y="174" fill="#0000ff">4th house:</text>
<text x="564" y="174" fill="#ff0000">4Leo06</text>
<text x="492" y="184" fill="#ff0000">5th house:</text>
<text x="564" y="184" fill="#ffff00">1Vir28</text>
<text x="492" y="194" fill="#ffff00">6th house:</text>
<text x="564" y="194" fill="#00ff00">9Lib03</text>
<text x="492" y="204" fill="#00ff00">7th house:</text>
<text x="558" y="204" fill="#0000ff">24Sco28</text>
<text x="492" y="214" fill="#0000ff">8th house:</text>
<text x="558" y="214" fill="#ff0000">20Sag23</text>
<text x="492" y="224" fill="#ff0000">9th house:</text>
<text x="558" y="224" fill="#ffff00">11Cap53</text>
<text x="486" y="234" fill="#ffff00">10th house:</text>
<text x="564" y="234" fill="#00ff00">4Aqu06</text>
<text x="486" y="244" fill="#00ff00">11th house:</text>
<text x="564" y="244" fill="#0000ff">1Pis28</text>
<text x="486" y="254" fill="#0000ff">12th house:</text>
<text x="564" y="254" fill="#ff0000">9Ari03</text>
<text x="492" y="274" fill="#ff0000">Sun:</text>
<text x="522" y="274" fill="#ff0000">21Ari45</text>
<text x="576" y="274" fill="#c0c0c0">- 0°00’</text>
<text x="486" y="284" fill="#0000ff">Moon:</text>
<text x="528" y="284" fill="#00ff00">7Aqu54</text>
<text x="576" y="284" fill="#c0c0c0">- 2°36’</text>
<text x="486" y="294" fill="#00ff00">Merc:</text>
<text x="522" y="294" fill="#0000ff">25Pis16</text>
<text x="576" y="294" fill="#c0c0c0">- 2°27’</text>
<text x="486" y="304" fill="#ffff00">Venu:</text>
<text x="522" y="304" fill="#ffff00">14Tau42</text>
<text x="576" y="304" fill="#c0c0c0">+ 0°01’</text>
<text x="486" y="314" fill="#ff0000">Mars:</text>
<text x="528" y="314" fill="#ff0000">1Ari25</text>
<text x="576" y="314" fill="#c0c0c0">- 1°00’</text>
<text x="486" y="324" fill="#ff0000">Jupi:</text>
<text x="522" y="324" fill="#0000ff">16Can38</text>
<text x="576" y="324" fill="#c0c0c0">+ 0°23’</text>
<text x="486" y="334" fill="#ffff00">Satu:</text>
<text x="528" y="334" fill="#ff0000">6Ari52</text>
<text x="576" y="334" fill="#c0c0c0">- 2°08’</text>
<text x="486" y="344" fill="#00ff00">Uran:</text>
<text x="522" y="344" fill="#ffff00">29Tau15</text>
<text x="576" y="344" fill="#c0c0c0">- 0°10’</text>
<text x="486" y="354" fill="#0000ff">Nept:</text>
<text x="528" y="354" fill="#ff0000">2Ari36</text>
<text x="576" y="354" fill="#c0c0c0">- 1°19’</text>
<text x="486" y="364" fill="#0000ff">Plut:</text>
<text x="528" y="364" fill="#00ff00">5Aqu22</text>
<text x="576" y="364" fill="#c0c0c0">- 3°59’</text>
<text x="486" y="384" fill="#c0c0c0">Fire: 4, Earth: 2,</text>
<text x="486" y="394" fill="#c0c0c0">Air : 2, Water: 2</text>
<text x="486" y="404" fill="#c0c0c0">Car: 5, Fix: 4, Mut: 1</text>
<text x="486" y="414" fill="#c0c0c0">Yang: 6, Yin: 4</text>
<text x="486" y="424" fill="#c0c0c0">M: 8, N: 2, A: 10, D: 0</text>
<text x="486" y="434" fill="#c0c0c0">Ang: 3, Suc: 4, Cad: 3</text>
<text x="486" y="444" fill="#c0c0c0">Learn: 7, Share: 3</text>
</g>
</svg>
</body></html>
